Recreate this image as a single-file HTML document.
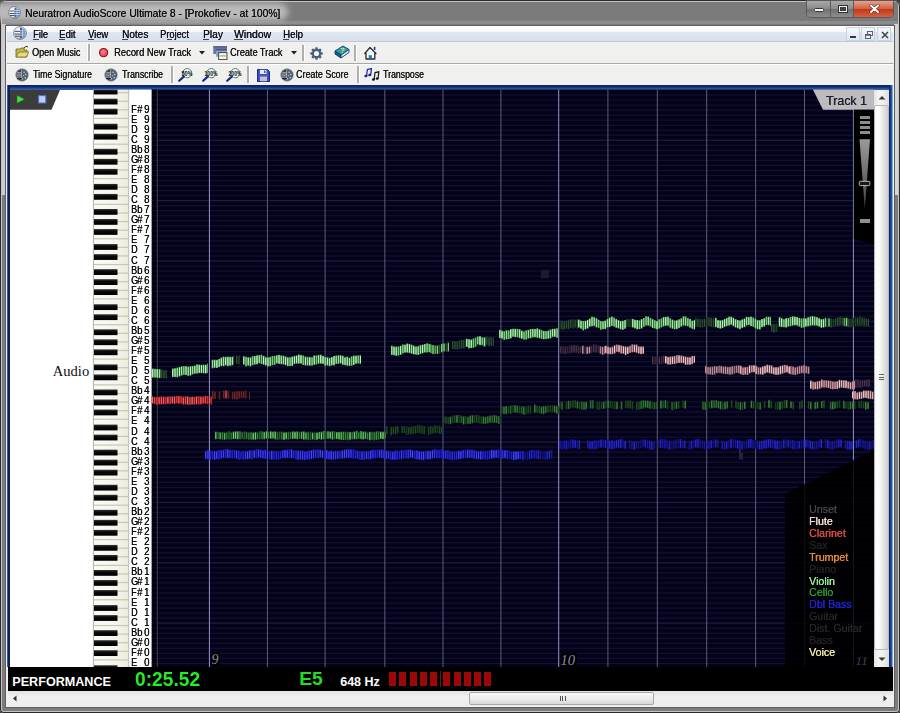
<!DOCTYPE html><html><head><meta charset="utf-8"><style>html,body{margin:0;padding:0;width:900px;height:713px;overflow:hidden;background:#3a3a3a}#w{position:absolute;left:0;top:0;width:900px;height:713px;overflow:hidden}</style></head><body><div id="w">
<div style="position:absolute;left:0px;top:0px;width:900px;height:713px;background:#807a80;border-radius:6px 6px 4px 4px;box-shadow:inset 0 0 0 1px #2a2a2a, inset 0 0 0 2px #c4c4c4;"></div>
<div style="position:absolute;left:2px;top:24px;width:4px;height:171px;background:#cfcacf;"></div>
<div style="position:absolute;left:894px;top:24px;width:4px;height:171px;background:#d4d4d4;"></div>
<div style="position:absolute;left:2px;top:2px;width:896px;height:22px;background:#7b7b7b;"></div>
<div style="position:absolute;left:2px;top:21px;width:896px;height:3px;background:#8c8c8c;"></div>
<div style="position:absolute;left:-8px;top:3px;width:296px;height:18px;background:#bababa;border-radius:9px;filter:blur(3px);"></div>
<svg style="position:absolute;left:8px;top:6px" width="13" height="13" viewBox="0 0 26 26">
<defs><radialGradient id="g86" cx="0.4" cy="0.35" r="0.7"><stop offset="0" stop-color="#ffffff"/><stop offset="0.7" stop-color="#d8dce4"/><stop offset="1" stop-color="#80848c"/></radialGradient></defs>
<circle cx="13" cy="13" r="12" fill="url(#g86)" stroke="#606670" stroke-width="1.2"/>
<path d="M13 3 A10 10 0 0 1 13 23 Z" fill="#3f6db0"/>
<g stroke="#202428" stroke-width="1.5"><line x1="3" y1="10" x2="13" y2="10"/><line x1="3" y1="15" x2="13" y2="15"/><line x1="4" y1="19" x2="13" y2="19"/></g>
<g stroke="#e8f0ff" stroke-width="1.3"><line x1="13" y1="9" x2="23" y2="9"/><line x1="13" y1="13" x2="24" y2="13"/><line x1="13" y1="17" x2="23" y2="17"/><line x1="18" y1="4" x2="18" y2="22"/></g>
</svg>
<div style="position:absolute;left:25px;top:7.08px;font:normal 400 11.6px 'Liberation Sans', sans-serif;line-height:1;color:#101010;white-space:pre;transform:scaleX(0.888);transform-origin:0 0;text-shadow:0.3px 0 0 #101010;">Neuratron AudioScore Ultimate 8 - [Prokofiev - at 100%]</div>
<div style="position:absolute;left:807px;top:1px;width:86px;height:16px;border-radius:0 0 4px 4px;overflow:hidden;box-shadow:0 0 0 1px #5a5a5a;">
<div style="position:absolute;left:0;top:0;width:23px;height:16px;background:linear-gradient(#a8a8a8,#8a8a8a 50%,#707070 51%,#8c8c8c);border-right:1px solid #5a5a5a"></div>
<div style="position:absolute;left:24px;top:0;width:22px;height:16px;background:linear-gradient(#a8a8a8,#8a8a8a 50%,#707070 51%,#8c8c8c);border-right:1px solid #5a5a5a"></div>
<div style="position:absolute;left:47px;top:0;width:39px;height:16px;background:linear-gradient(#e8a090,#d06040 50%,#c03818 51%,#d86040);"></div>
</div>
<div style="position:absolute;left:814.4px;top:8.3px;width:10px;height:4.2px;background:#f8f8f8;border:1px solid #383838;border-radius:1.5px;box-sizing:border-box;"></div>
<div style="position:absolute;left:838px;top:5px;width:8px;height:6px;border:1px solid #303030;background:#f0f0f0;box-shadow:inset 0 0 0 1px #f0f0f0, inset 0 0 0 3px #404040;"></div>
<svg style="position:absolute;left:868.5px;top:3.8px" width="11" height="9.5" viewBox="0 0 11 9.5"><path d="M2 1.5 L9 8 M9 1.5 L2 8" stroke="#6a3028" stroke-width="3.2" stroke-linecap="round"/><path d="M2 1.5 L9 8 M9 1.5 L2 8" stroke="#ffffff" stroke-width="1.9" stroke-linecap="round"/></svg>
<div style="position:absolute;left:6px;top:25.6px;width:888px;height:681.4px;background:#f0f0f0;box-shadow:0 0 0 1px #5a6060;"></div>
<div style="position:absolute;left:7px;top:25.8px;width:886px;height:15.2px;background:linear-gradient(#ffffff 0%,#f6f7fb 38%,#dfe5f0 44%,#d9e0ee 100%);"></div>
<div style="position:absolute;left:7px;top:41px;width:886px;height:1px;background:#c4c8d0;"></div>
<svg style="position:absolute;left:13px;top:26px" width="14" height="14" viewBox="0 0 26 26">
<defs><radialGradient id="g1326" cx="0.4" cy="0.35" r="0.7"><stop offset="0" stop-color="#ffffff"/><stop offset="0.7" stop-color="#d8dce4"/><stop offset="1" stop-color="#80848c"/></radialGradient></defs>
<circle cx="13" cy="13" r="12" fill="url(#g1326)" stroke="#606670" stroke-width="1.2"/>
<path d="M13 3 A10 10 0 0 1 13 23 Z" fill="#3f6db0"/>
<g stroke="#202428" stroke-width="1.5"><line x1="3" y1="10" x2="13" y2="10"/><line x1="3" y1="15" x2="13" y2="15"/><line x1="4" y1="19" x2="13" y2="19"/></g>
<g stroke="#e8f0ff" stroke-width="1.3"><line x1="13" y1="9" x2="23" y2="9"/><line x1="13" y1="13" x2="24" y2="13"/><line x1="13" y1="17" x2="23" y2="17"/><line x1="18" y1="4" x2="18" y2="22"/></g>
</svg>
<div style="position:absolute;left:32.7px;top:29.09px;font:normal 400 11px 'Liberation Sans', sans-serif;line-height:1;color:#10101c;white-space:pre;transform:scaleX(0.846);transform-origin:0 0;text-shadow:0.3px 0 0 #10101c;">File</div>
<div style="position:absolute;left:59.3px;top:29.09px;font:normal 400 11px 'Liberation Sans', sans-serif;line-height:1;color:#10101c;white-space:pre;transform:scaleX(0.869);transform-origin:0 0;text-shadow:0.3px 0 0 #10101c;">Edit</div>
<div style="position:absolute;left:88.4px;top:29.09px;font:normal 400 11px 'Liberation Sans', sans-serif;line-height:1;color:#10101c;white-space:pre;transform:scaleX(0.85);transform-origin:0 0;text-shadow:0.3px 0 0 #10101c;">View</div>
<div style="position:absolute;left:121.8px;top:29.09px;font:normal 400 11px 'Liberation Sans', sans-serif;line-height:1;color:#10101c;white-space:pre;transform:scaleX(0.911);transform-origin:0 0;text-shadow:0.3px 0 0 #10101c;">Notes</div>
<div style="position:absolute;left:160.3px;top:29.09px;font:normal 400 11px 'Liberation Sans', sans-serif;line-height:1;color:#10101c;white-space:pre;transform:scaleX(0.842);transform-origin:0 0;text-shadow:0.3px 0 0 #10101c;">Project</div>
<div style="position:absolute;left:203.3px;top:29.09px;font:normal 400 11px 'Liberation Sans', sans-serif;line-height:1;color:#10101c;white-space:pre;transform:scaleX(0.927);transform-origin:0 0;text-shadow:0.3px 0 0 #10101c;">Play</div>
<div style="position:absolute;left:234px;top:29.09px;font:normal 400 11px 'Liberation Sans', sans-serif;line-height:1;color:#10101c;white-space:pre;transform:scaleX(0.943);transform-origin:0 0;text-shadow:0.3px 0 0 #10101c;">Window</div>
<div style="position:absolute;left:283.3px;top:29.09px;font:normal 400 11px 'Liberation Sans', sans-serif;line-height:1;color:#10101c;white-space:pre;transform:scaleX(0.882);transform-origin:0 0;text-shadow:0.3px 0 0 #10101c;">Help</div>
<div style="position:absolute;left:32.7px;top:39px;width:6px;height:1px;background:#404050;"></div>
<div style="position:absolute;left:59.3px;top:39px;width:6px;height:1px;background:#404050;"></div>
<div style="position:absolute;left:88.4px;top:39px;width:6px;height:1px;background:#404050;"></div>
<div style="position:absolute;left:121.8px;top:39px;width:6px;height:1px;background:#404050;"></div>
<div style="position:absolute;left:166.8px;top:39px;width:5px;height:1px;background:#404050;"></div>
<div style="position:absolute;left:203.3px;top:39px;width:6px;height:1px;background:#404050;"></div>
<div style="position:absolute;left:234px;top:39px;width:9px;height:1px;background:#404050;"></div>
<div style="position:absolute;left:283.3px;top:39px;width:6px;height:1px;background:#404050;"></div>
<div style="position:absolute;left:845.6px;top:27px;width:14px;height:14px;background:linear-gradient(#f4f8fc,#dde8f4);border:1px solid #c8d4e0;box-sizing:border-box;"></div>
<div style="position:absolute;left:861px;top:27px;width:14px;height:14px;background:linear-gradient(#f4f8fc,#dde8f4);border:1px solid #c8d4e0;box-sizing:border-box;"></div>
<div style="position:absolute;left:877px;top:27px;width:14px;height:14px;background:linear-gradient(#f4f8fc,#dde8f4);border:1px solid #c8d4e0;box-sizing:border-box;"></div>
<div style="position:absolute;left:849.5px;top:36px;width:6px;height:2px;background:#303844;"></div>
<svg style="position:absolute;left:864.5px;top:30.5px" width="8" height="8" viewBox="0 0 8 8"><rect x="2.5" y="0.5" width="5" height="4" fill="none" stroke="#4a5460" stroke-width="0.9"/><rect x="0.5" y="3.5" width="5" height="4" fill="#e8f0f8" stroke="#4a5460" stroke-width="0.9"/><rect x="0.5" y="3.5" width="5" height="1.2" fill="#4a5460"/></svg>
<svg style="position:absolute;left:880.5px;top:30.5px" width="8" height="8" viewBox="0 0 8 8"><path d="M1 1L7 7M7 1L1 7" stroke="#3a4450" stroke-width="1.5"/></svg>
<div style="position:absolute;left:7px;top:42px;width:886px;height:21px;background:#f0f0ef;"></div>
<div style="position:absolute;left:7px;top:63px;width:886px;height:1px;background:#a8a8a8;"></div>
<div style="position:absolute;left:7px;top:64px;width:886px;height:1px;background:#ffffff;"></div>
<div style="position:absolute;left:7px;top:65px;width:886px;height:20px;background:#f0f0ef;"></div>
<svg style="position:absolute;left:15px;top:45px" width="14" height="13" viewBox="0 0 14 13"><path d="M1 4 L5 4 L6 3 L9 3 L9 5 L12 5 L12 12 L1 12 Z" fill="#c8b850" stroke="#6a6020" stroke-width="0.8"/><path d="M1 12 L4 7 L14 7 L11 12 Z" fill="#e8dc80" stroke="#7a7020" stroke-width="0.8"/><path d="M9 3 Q11 0 13 2" fill="none" stroke="#303030" stroke-width="1"/></svg>
<div style="position:absolute;left:32px;top:47.09px;font:normal 400 11px 'Liberation Sans', sans-serif;line-height:1;color:#141414;white-space:pre;transform:scaleX(0.823);transform-origin:0 0;text-shadow:0.3px 0 0 #141414;">Open Music</div>
<div style="position:absolute;left:87.3px;top:44px;width:1px;height:17px;background:#ffffff;"></div>
<div style="position:absolute;left:88.1px;top:44px;width:1.5px;height:17px;background:#b0b0b0;"></div>
<div style="position:absolute;left:89.6px;top:44px;width:1px;height:17px;background:#ffffff;"></div>
<svg style="position:absolute;left:98px;top:47px" width="11" height="11" viewBox="0 0 11 11"><defs><radialGradient id="rc" cx="0.45" cy="0.45" r="0.6"><stop offset="0" stop-color="#ff8890"/><stop offset="1" stop-color="#e03848"/></radialGradient></defs><circle cx="5.6" cy="5.6" r="4.1" fill="url(#rc)" stroke="#8a1820" stroke-width="1.1"/></svg>
<div style="position:absolute;left:114px;top:47.09px;font:normal 400 11px 'Liberation Sans', sans-serif;line-height:1;color:#141414;white-space:pre;transform:scaleX(0.851);transform-origin:0 0;text-shadow:0.3px 0 0 #141414;">Record New Track</div>
<svg style="position:absolute;left:198.6px;top:51.0px" width="6" height="4" viewBox="0 0 6 4"><path d="M0 0 L6 0 L3 3.5 Z" fill="#202020"/></svg>
<svg style="position:absolute;left:213px;top:46px" width="15" height="14" viewBox="0 0 15 14"><rect x="0.3" y="0.2" width="13.7" height="7.8" fill="#6a749c"/><rect x="0.3" y="0.2" width="13.7" height="1.2" fill="#505a80"/><rect x="3" y="3.2" width="11" height="7.5" fill="#8aa2d6"/><rect x="3" y="3.2" width="11" height="1.3" fill="#404860"/><rect x="5.6" y="6.6" width="8.4" height="7" fill="#f6f6e6" stroke="#4a4a3a" stroke-width="1"/><rect x="6.5" y="9.4" width="7" height="1" fill="#909090"/></svg>
<div style="position:absolute;left:230px;top:47.09px;font:normal 400 11px 'Liberation Sans', sans-serif;line-height:1;color:#141414;white-space:pre;transform:scaleX(0.832);transform-origin:0 0;text-shadow:0.3px 0 0 #141414;">Create Track</div>
<svg style="position:absolute;left:290.6px;top:51.0px" width="6" height="4" viewBox="0 0 6 4"><path d="M0 0 L6 0 L3 3.5 Z" fill="#202020"/></svg>
<div style="position:absolute;left:301.5px;top:45px;width:1px;height:16px;background:#ffffff;"></div>
<div style="position:absolute;left:302.3px;top:45px;width:1.5px;height:16px;background:#b0b0b0;"></div>
<div style="position:absolute;left:303.8px;top:45px;width:1px;height:16px;background:#ffffff;"></div>
<svg style="position:absolute;left:310px;top:46.5px" width="13" height="13" viewBox="0 0 26 26"><g fill="#44597a"><rect x="10.5" y="0.5" width="5" height="6" rx="1.5" transform="rotate(0 13 13)"/><rect x="10.5" y="0.5" width="5" height="6" rx="1.5" transform="rotate(45 13 13)"/><rect x="10.5" y="0.5" width="5" height="6" rx="1.5" transform="rotate(90 13 13)"/><rect x="10.5" y="0.5" width="5" height="6" rx="1.5" transform="rotate(135 13 13)"/><rect x="10.5" y="0.5" width="5" height="6" rx="1.5" transform="rotate(180 13 13)"/><rect x="10.5" y="0.5" width="5" height="6" rx="1.5" transform="rotate(225 13 13)"/><rect x="10.5" y="0.5" width="5" height="6" rx="1.5" transform="rotate(270 13 13)"/><rect x="10.5" y="0.5" width="5" height="6" rx="1.5" transform="rotate(315 13 13)"/><circle cx="13" cy="13" r="9.5"/></g><circle cx="13" cy="13" r="5.2" fill="#f4f6f8"/><circle cx="13" cy="13" r="9.5" fill="none" stroke="#7890b0" stroke-width="1" opacity="0.6"/></svg>
<svg style="position:absolute;left:333.5px;top:45px" width="16" height="14" viewBox="0 0 16 14"><path d="M1 6 L9 1 L15 4.5 L7 10 Z" fill="#2aa0b8" stroke="#0c3c60" stroke-width="0.9"/><path d="M1 6 L7 10 L7 13 L1 9 Z" fill="#145a88" stroke="#0c3c60" stroke-width="0.9"/><path d="M7 10 L15 4.5 L15 7.5 L7 13 Z" fill="#dce8f4" stroke="#0c3c60" stroke-width="0.9"/><path d="M7 4.2 Q8.5 2.6 10 3.8 Q10.5 4.8 8.8 5.6 L8.6 6.4" fill="none" stroke="#e8e040" stroke-width="1.1"/><circle cx="8.4" cy="7.6" r="0.6" fill="#e8e040"/></svg>
<div style="position:absolute;left:353.5px;top:45px;width:1px;height:16px;background:#ffffff;"></div>
<div style="position:absolute;left:354.3px;top:45px;width:1.5px;height:16px;background:#b0b0b0;"></div>
<div style="position:absolute;left:355.8px;top:45px;width:1px;height:16px;background:#ffffff;"></div>
<svg style="position:absolute;left:363.5px;top:45.5px" width="13" height="14" viewBox="0 0 13 14"><path d="M6 1.5 L12 7.5 L10.8 7.5 L10.8 13 L2 13 L2 7.5 L0.8 7.5 Z" fill="#fafaf4" stroke="#2a2a2a" stroke-width="1.3" stroke-linejoin="round"/><rect x="4.8" y="9" width="3" height="4" fill="#2a6ac0"/><rect x="4.8" y="9" width="3" height="1.2" fill="#30b0c8"/><rect x="9.8" y="0.8" width="1.6" height="3.2" fill="#2030c0"/></svg>
<svg style="position:absolute;left:15px;top:68px" width="14" height="14" viewBox="0 0 26 26">
<circle cx="13" cy="13" r="11.6" fill="#3c4046" stroke="#9aa2aa" stroke-width="1.6"/>
<path d="M14 3 A10 10 0 0 1 14 23 Z" fill="#566272"/>
<g stroke="#e8eef4" stroke-width="1.5"><line x1="4" y1="9" x2="12" y2="9"/><line x1="3" y1="13" x2="12" y2="13"/><line x1="4" y1="17" x2="12" y2="17"/></g>
<g fill="#b8d0e8"><circle cx="17" cy="8" r="1.4"/><circle cx="20" cy="12" r="1.4"/><circle cx="16" cy="14" r="1.2"/><circle cx="19" cy="18" r="1.4"/><circle cx="14" cy="20" r="1.2"/></g>
<line x1="12.5" y1="3" x2="12.5" y2="23" stroke="#d0dae4" stroke-width="1.3"/>
<path d="M4 20 Q9 17 13 20" stroke="#101418" stroke-width="1.6" fill="none"/>
</svg>
<div style="position:absolute;left:33px;top:69.19px;font:normal 400 11px 'Liberation Sans', sans-serif;line-height:1;color:#141414;white-space:pre;transform:scaleX(0.795);transform-origin:0 0;text-shadow:0.3px 0 0 #141414;">Time Signature</div>
<svg style="position:absolute;left:104px;top:68px" width="14" height="14" viewBox="0 0 26 26">
<circle cx="13" cy="13" r="11.6" fill="#3c4046" stroke="#9aa2aa" stroke-width="1.6"/>
<path d="M14 3 A10 10 0 0 1 14 23 Z" fill="#566272"/>
<g stroke="#e8eef4" stroke-width="1.5"><line x1="4" y1="9" x2="12" y2="9"/><line x1="3" y1="13" x2="12" y2="13"/><line x1="4" y1="17" x2="12" y2="17"/></g>
<g fill="#b8d0e8"><circle cx="17" cy="8" r="1.4"/><circle cx="20" cy="12" r="1.4"/><circle cx="16" cy="14" r="1.2"/><circle cx="19" cy="18" r="1.4"/><circle cx="14" cy="20" r="1.2"/></g>
<line x1="12.5" y1="3" x2="12.5" y2="23" stroke="#d0dae4" stroke-width="1.3"/>
<path d="M4 20 Q9 17 13 20" stroke="#101418" stroke-width="1.6" fill="none"/>
</svg>
<div style="position:absolute;left:121.5px;top:69.19px;font:normal 400 11px 'Liberation Sans', sans-serif;line-height:1;color:#141414;white-space:pre;transform:scaleX(0.795);transform-origin:0 0;text-shadow:0.3px 0 0 #141414;">Transcribe</div>
<div style="position:absolute;left:170.5px;top:66px;width:1px;height:17px;background:#ffffff;"></div>
<div style="position:absolute;left:171.3px;top:66px;width:1.5px;height:17px;background:#b0b0b0;"></div>
<div style="position:absolute;left:172.8px;top:66px;width:1px;height:17px;background:#ffffff;"></div>
<svg style="position:absolute;left:178px;top:67px" width="16" height="15" viewBox="0 0 16 15"><circle cx="9.2" cy="6.2" r="4.6" fill="#f6faf6" stroke="#3a7870" stroke-width="0.9"/><path d="M5.8 9.6 L1.2 13.8" stroke="#1a2890" stroke-width="2.2" stroke-linecap="round"/><text x="9" y="8.6" font-family="Liberation Sans" font-size="6.4" font-weight="700" text-anchor="middle" fill="#101010" textLength="11" lengthAdjust="spacingAndGlyphs">50%</text></svg>
<svg style="position:absolute;left:202px;top:67px" width="16" height="15" viewBox="0 0 16 15"><circle cx="9.2" cy="6.2" r="4.6" fill="#f6faf6" stroke="#3a7870" stroke-width="0.9"/><path d="M5.8 9.6 L1.2 13.8" stroke="#1a2890" stroke-width="2.2" stroke-linecap="round"/><text x="9" y="8.6" font-family="Liberation Sans" font-size="6.4" font-weight="700" text-anchor="middle" fill="#101010" textLength="13" lengthAdjust="spacingAndGlyphs">100%</text></svg>
<svg style="position:absolute;left:226px;top:67px" width="16" height="15" viewBox="0 0 16 15"><circle cx="9.2" cy="6.2" r="4.6" fill="#f6faf6" stroke="#3a7870" stroke-width="0.9"/><path d="M5.8 9.6 L1.2 13.8" stroke="#1a2890" stroke-width="2.2" stroke-linecap="round"/><text x="9" y="8.6" font-family="Liberation Sans" font-size="6.4" font-weight="700" text-anchor="middle" fill="#101010" textLength="13" lengthAdjust="spacingAndGlyphs">200%</text></svg>
<div style="position:absolute;left:246.5px;top:66px;width:1px;height:17px;background:#ffffff;"></div>
<div style="position:absolute;left:247.3px;top:66px;width:1.5px;height:17px;background:#b0b0b0;"></div>
<div style="position:absolute;left:248.8px;top:66px;width:1px;height:17px;background:#ffffff;"></div>
<svg style="position:absolute;left:256.5px;top:68.5px" width="13" height="13" viewBox="0 0 13 13"><path d="M0.5 0.5 L10.5 0.5 L12.5 2.5 L12.5 12.5 L0.5 12.5 Z" fill="#3c50c8" stroke="#1c2880"/><rect x="3" y="0.8" width="6.5" height="4.2" fill="#e8f0fa"/><rect x="7" y="1.5" width="1.5" height="2.5" fill="#3c50c8"/><rect x="3" y="7.5" width="7" height="4.8" fill="#c8bcd0"/></svg>
<svg style="position:absolute;left:280px;top:68px" width="14" height="14" viewBox="0 0 26 26">
<circle cx="13" cy="13" r="11.6" fill="#3c4046" stroke="#9aa2aa" stroke-width="1.6"/>
<path d="M14 3 A10 10 0 0 1 14 23 Z" fill="#566272"/>
<g stroke="#e8eef4" stroke-width="1.5"><line x1="4" y1="9" x2="12" y2="9"/><line x1="3" y1="13" x2="12" y2="13"/><line x1="4" y1="17" x2="12" y2="17"/></g>
<g fill="#b8d0e8"><circle cx="17" cy="8" r="1.4"/><circle cx="20" cy="12" r="1.4"/><circle cx="16" cy="14" r="1.2"/><circle cx="19" cy="18" r="1.4"/><circle cx="14" cy="20" r="1.2"/></g>
<line x1="12.5" y1="3" x2="12.5" y2="23" stroke="#d0dae4" stroke-width="1.3"/>
<path d="M4 20 Q9 17 13 20" stroke="#101418" stroke-width="1.6" fill="none"/>
</svg>
<div style="position:absolute;left:296.2px;top:69.19px;font:normal 400 11px 'Liberation Sans', sans-serif;line-height:1;color:#141414;white-space:pre;transform:scaleX(0.81);transform-origin:0 0;text-shadow:0.3px 0 0 #141414;">Create Score</div>
<div style="position:absolute;left:356.5px;top:66px;width:1px;height:17px;background:#ffffff;"></div>
<div style="position:absolute;left:357.3px;top:66px;width:1.5px;height:17px;background:#b0b0b0;"></div>
<div style="position:absolute;left:358.8px;top:66px;width:1px;height:17px;background:#ffffff;"></div>
<svg style="position:absolute;left:364px;top:68px" width="16" height="14" viewBox="0 0 16 14"><path d="M2.6 7.5 L3.4 1.5 L7.4 0.6 L6.8 6.4" fill="none" stroke="#1a1aa0" stroke-width="1.2"/><ellipse cx="2" cy="8" rx="1.7" ry="1.2" fill="#1a1aa0" transform="rotate(-20 2 8)"/><ellipse cx="5.8" cy="7" rx="1.7" ry="1.2" fill="#1a1aa0" transform="rotate(-20 5.8 7)"/><path d="M10.2 11 L11 4.6 L14.8 3.8 L14.2 9.8" fill="none" stroke="#181818" stroke-width="1.2"/><ellipse cx="9.5" cy="11.5" rx="1.7" ry="1.2" fill="#181818" transform="rotate(-20 9.5 11.5)"/><ellipse cx="13.3" cy="10.5" rx="1.7" ry="1.2" fill="#181818" transform="rotate(-20 13.3 10.5)"/></svg>
<div style="position:absolute;left:383.3px;top:69.19px;font:normal 400 11px 'Liberation Sans', sans-serif;line-height:1;color:#141414;white-space:pre;transform:scaleX(0.793);transform-origin:0 0;text-shadow:0.3px 0 0 #141414;">Transpose</div>
<div style="position:absolute;left:7px;top:85px;width:886px;height:4.6px;background:linear-gradient(#0a2468,#0c2a72 35%,#2a5096 70%,#3a64a8);"></div>
<div style="position:absolute;left:7px;top:85px;width:3px;height:582px;background:linear-gradient(90deg,#5a80aa,#0c2060 40%,#0c2060);"></div>
<div style="position:absolute;left:889px;top:85px;width:4px;height:582px;background:linear-gradient(90deg,#0c2060,#1a50a0 60%,#a8d0e8);"></div>
<div style="position:absolute;left:10px;top:89.6px;width:879px;height:577.7px;background:#ffffff;"></div>
<svg style="position:absolute;left:10px;top:89.8px" width="60" height="20" viewBox="0 0 60 20"><path d="M0 0 L50 0 L41.5 19.7 L0 19.7 Z" fill="#3c3c3c"/><path d="M7 5.3 L14.5 9.3 L7 13.3 Z" fill="#44e044" stroke="#188018" stroke-width="0.6"/><rect x="28.6" y="5.6" width="7.2" height="7.4" fill="#b8d0f8" stroke="#5070d0" stroke-width="1.1"/></svg>
<div style="position:absolute;left:52.7px;top:364.47px;font:normal 400 14.6px 'Liberation Serif', serif;line-height:1;color:#101010;white-space:pre;">Audio</div>
<svg style="position:absolute;left:0;top:0" width="900" height="713" viewBox="0 0 900 713"><defs><linearGradient id="wk" x1="0" x2="1"><stop offset="0" stop-color="#fbfbf6"/><stop offset="0.65" stop-color="#f6f5ec"/><stop offset="1" stop-color="#ecebdc"/></linearGradient><linearGradient id="bk" x1="0" x2="0" y1="0" y2="1"><stop offset="0" stop-color="#383838"/><stop offset="0.35" stop-color="#0a0a0a"/><stop offset="1" stop-color="#000"/></linearGradient></defs><rect x="93.4" y="89.6" width="35.099999999999994" height="578" fill="url(#wk)"/><rect x="93.4" y="659.33" width="35.099999999999994" height="1.2" fill="#c8c6b4"/><rect x="93.4" y="650.73" width="35.099999999999994" height="1.2" fill="#c8c6b4"/><rect x="93.4" y="642.14" width="35.099999999999994" height="1.2" fill="#c8c6b4"/><rect x="93.4" y="633.54" width="35.099999999999994" height="1.2" fill="#c8c6b4"/><rect x="93.4" y="624.94" width="35.099999999999994" height="1.2" fill="#c8c6b4"/><rect x="93.4" y="616.35" width="35.099999999999994" height="1.2" fill="#c8c6b4"/><rect x="93.4" y="607.75" width="35.099999999999994" height="1.2" fill="#c8c6b4"/><rect x="93.4" y="599.16" width="35.099999999999994" height="1.2" fill="#c8c6b4"/><rect x="93.4" y="590.56" width="35.099999999999994" height="1.2" fill="#c8c6b4"/><rect x="93.4" y="581.97" width="35.099999999999994" height="1.2" fill="#c8c6b4"/><rect x="93.4" y="573.37" width="35.099999999999994" height="1.2" fill="#c8c6b4"/><rect x="93.4" y="564.78" width="35.099999999999994" height="1.2" fill="#c8c6b4"/><rect x="93.4" y="556.18" width="35.099999999999994" height="1.2" fill="#c8c6b4"/><rect x="93.4" y="547.59" width="35.099999999999994" height="1.2" fill="#c8c6b4"/><rect x="93.4" y="538.99" width="35.099999999999994" height="1.2" fill="#c8c6b4"/><rect x="93.4" y="530.40" width="35.099999999999994" height="1.2" fill="#c8c6b4"/><rect x="93.4" y="521.80" width="35.099999999999994" height="1.2" fill="#c8c6b4"/><rect x="93.4" y="513.20" width="35.099999999999994" height="1.2" fill="#c8c6b4"/><rect x="93.4" y="504.61" width="35.099999999999994" height="1.2" fill="#c8c6b4"/><rect x="93.4" y="496.01" width="35.099999999999994" height="1.2" fill="#c8c6b4"/><rect x="93.4" y="487.42" width="35.099999999999994" height="1.2" fill="#c8c6b4"/><rect x="93.4" y="478.82" width="35.099999999999994" height="1.2" fill="#c8c6b4"/><rect x="93.4" y="470.23" width="35.099999999999994" height="1.2" fill="#c8c6b4"/><rect x="93.4" y="461.63" width="35.099999999999994" height="1.2" fill="#c8c6b4"/><rect x="93.4" y="453.04" width="35.099999999999994" height="1.2" fill="#c8c6b4"/><rect x="93.4" y="444.44" width="35.099999999999994" height="1.2" fill="#c8c6b4"/><rect x="93.4" y="435.85" width="35.099999999999994" height="1.2" fill="#c8c6b4"/><rect x="93.4" y="427.25" width="35.099999999999994" height="1.2" fill="#c8c6b4"/><rect x="93.4" y="418.65" width="35.099999999999994" height="1.2" fill="#c8c6b4"/><rect x="93.4" y="410.06" width="35.099999999999994" height="1.2" fill="#c8c6b4"/><rect x="93.4" y="401.46" width="35.099999999999994" height="1.2" fill="#c8c6b4"/><rect x="93.4" y="392.87" width="35.099999999999994" height="1.2" fill="#c8c6b4"/><rect x="93.4" y="384.27" width="35.099999999999994" height="1.2" fill="#c8c6b4"/><rect x="93.4" y="375.68" width="35.099999999999994" height="1.2" fill="#c8c6b4"/><rect x="93.4" y="367.08" width="35.099999999999994" height="1.2" fill="#c8c6b4"/><rect x="93.4" y="358.49" width="35.099999999999994" height="1.2" fill="#c8c6b4"/><rect x="93.4" y="349.89" width="35.099999999999994" height="1.2" fill="#c8c6b4"/><rect x="93.4" y="341.30" width="35.099999999999994" height="1.2" fill="#c8c6b4"/><rect x="93.4" y="332.70" width="35.099999999999994" height="1.2" fill="#c8c6b4"/><rect x="93.4" y="324.10" width="35.099999999999994" height="1.2" fill="#c8c6b4"/><rect x="93.4" y="315.51" width="35.099999999999994" height="1.2" fill="#c8c6b4"/><rect x="93.4" y="306.91" width="35.099999999999994" height="1.2" fill="#c8c6b4"/><rect x="93.4" y="298.32" width="35.099999999999994" height="1.2" fill="#c8c6b4"/><rect x="93.4" y="289.72" width="35.099999999999994" height="1.2" fill="#c8c6b4"/><rect x="93.4" y="281.13" width="35.099999999999994" height="1.2" fill="#c8c6b4"/><rect x="93.4" y="272.53" width="35.099999999999994" height="1.2" fill="#c8c6b4"/><rect x="93.4" y="263.94" width="35.099999999999994" height="1.2" fill="#c8c6b4"/><rect x="93.4" y="255.34" width="35.099999999999994" height="1.2" fill="#c8c6b4"/><rect x="93.4" y="246.75" width="35.099999999999994" height="1.2" fill="#c8c6b4"/><rect x="93.4" y="238.15" width="35.099999999999994" height="1.2" fill="#c8c6b4"/><rect x="93.4" y="229.56" width="35.099999999999994" height="1.2" fill="#c8c6b4"/><rect x="93.4" y="220.96" width="35.099999999999994" height="1.2" fill="#c8c6b4"/><rect x="93.4" y="212.36" width="35.099999999999994" height="1.2" fill="#c8c6b4"/><rect x="93.4" y="203.77" width="35.099999999999994" height="1.2" fill="#c8c6b4"/><rect x="93.4" y="195.17" width="35.099999999999994" height="1.2" fill="#c8c6b4"/><rect x="93.4" y="186.58" width="35.099999999999994" height="1.2" fill="#c8c6b4"/><rect x="93.4" y="177.98" width="35.099999999999994" height="1.2" fill="#c8c6b4"/><rect x="93.4" y="169.39" width="35.099999999999994" height="1.2" fill="#c8c6b4"/><rect x="93.4" y="160.79" width="35.099999999999994" height="1.2" fill="#c8c6b4"/><rect x="93.4" y="152.20" width="35.099999999999994" height="1.2" fill="#c8c6b4"/><rect x="93.4" y="143.60" width="35.099999999999994" height="1.2" fill="#c8c6b4"/><rect x="93.4" y="135.01" width="35.099999999999994" height="1.2" fill="#c8c6b4"/><rect x="93.4" y="126.41" width="35.099999999999994" height="1.2" fill="#c8c6b4"/><rect x="93.4" y="117.81" width="35.099999999999994" height="1.2" fill="#c8c6b4"/><rect x="93.4" y="109.22" width="35.099999999999994" height="1.2" fill="#c8c6b4"/><rect x="93.4" y="100.62" width="35.099999999999994" height="1.2" fill="#c8c6b4"/><rect x="93.4" y="92.03" width="35.099999999999994" height="1.2" fill="#c8c6b4"/><rect x="93.8" y="665.26" width="23.7" height="5.80" fill="url(#bk)"/><rect x="93.8" y="650.22" width="23.7" height="5.80" fill="url(#bk)"/><rect x="93.8" y="640.19" width="23.7" height="5.80" fill="url(#bk)"/><rect x="93.8" y="630.17" width="23.7" height="5.80" fill="url(#bk)"/><rect x="93.8" y="615.12" width="23.7" height="5.80" fill="url(#bk)"/><rect x="93.8" y="605.10" width="23.7" height="5.80" fill="url(#bk)"/><rect x="93.8" y="590.05" width="23.7" height="5.80" fill="url(#bk)"/><rect x="93.8" y="580.03" width="23.7" height="5.80" fill="url(#bk)"/><rect x="93.8" y="570.00" width="23.7" height="5.80" fill="url(#bk)"/><rect x="93.8" y="554.96" width="23.7" height="5.80" fill="url(#bk)"/><rect x="93.8" y="544.93" width="23.7" height="5.80" fill="url(#bk)"/><rect x="93.8" y="529.89" width="23.7" height="5.80" fill="url(#bk)"/><rect x="93.8" y="519.86" width="23.7" height="5.80" fill="url(#bk)"/><rect x="93.8" y="509.83" width="23.7" height="5.80" fill="url(#bk)"/><rect x="93.8" y="494.79" width="23.7" height="5.80" fill="url(#bk)"/><rect x="93.8" y="484.76" width="23.7" height="5.80" fill="url(#bk)"/><rect x="93.8" y="469.72" width="23.7" height="5.80" fill="url(#bk)"/><rect x="93.8" y="459.69" width="23.7" height="5.80" fill="url(#bk)"/><rect x="93.8" y="449.66" width="23.7" height="5.80" fill="url(#bk)"/><rect x="93.8" y="434.62" width="23.7" height="5.80" fill="url(#bk)"/><rect x="93.8" y="424.59" width="23.7" height="5.80" fill="url(#bk)"/><rect x="93.8" y="409.55" width="23.7" height="5.80" fill="url(#bk)"/><rect x="93.8" y="399.52" width="23.7" height="5.80" fill="url(#bk)"/><rect x="93.8" y="389.49" width="23.7" height="5.80" fill="url(#bk)"/><rect x="93.8" y="374.45" width="23.7" height="5.80" fill="url(#bk)"/><rect x="93.8" y="364.42" width="23.7" height="5.80" fill="url(#bk)"/><rect x="93.8" y="349.38" width="23.7" height="5.80" fill="url(#bk)"/><rect x="93.8" y="339.35" width="23.7" height="5.80" fill="url(#bk)"/><rect x="93.8" y="329.33" width="23.7" height="5.80" fill="url(#bk)"/><rect x="93.8" y="314.28" width="23.7" height="5.80" fill="url(#bk)"/><rect x="93.8" y="304.26" width="23.7" height="5.80" fill="url(#bk)"/><rect x="93.8" y="289.21" width="23.7" height="5.80" fill="url(#bk)"/><rect x="93.8" y="279.19" width="23.7" height="5.80" fill="url(#bk)"/><rect x="93.8" y="269.16" width="23.7" height="5.80" fill="url(#bk)"/><rect x="93.8" y="254.12" width="23.7" height="5.80" fill="url(#bk)"/><rect x="93.8" y="244.09" width="23.7" height="5.80" fill="url(#bk)"/><rect x="93.8" y="229.05" width="23.7" height="5.80" fill="url(#bk)"/><rect x="93.8" y="219.02" width="23.7" height="5.80" fill="url(#bk)"/><rect x="93.8" y="208.99" width="23.7" height="5.80" fill="url(#bk)"/><rect x="93.8" y="193.95" width="23.7" height="5.80" fill="url(#bk)"/><rect x="93.8" y="183.92" width="23.7" height="5.80" fill="url(#bk)"/><rect x="93.8" y="168.88" width="23.7" height="5.80" fill="url(#bk)"/><rect x="93.8" y="158.85" width="23.7" height="5.80" fill="url(#bk)"/><rect x="93.8" y="148.82" width="23.7" height="5.80" fill="url(#bk)"/><rect x="93.8" y="133.78" width="23.7" height="5.80" fill="url(#bk)"/><rect x="93.8" y="123.75" width="23.7" height="5.80" fill="url(#bk)"/><rect x="93.8" y="108.71" width="23.7" height="5.80" fill="url(#bk)"/><rect x="93.8" y="98.68" width="23.7" height="5.80" fill="url(#bk)"/><rect x="93.8" y="89.60" width="23.7" height="4.85" fill="url(#bk)"/><rect x="92.9" y="89.6" width="1" height="578" fill="#b0b0a8"/><rect x="128.2" y="89.6" width="1.2" height="578" fill="#b8b8b0"/><rect x="151.5" y="89.6" width="722.5" height="577.6" fill="#03021a"/><rect x="151.5" y="89.6" width="5.5" height="577.6" fill="#02020e"/><rect x="157.0" y="662.80" width="717.0" height="1.2" fill="#121230"/><rect x="151.5" y="662.80" width="5.5" height="1.2" fill="#0c0c24"/><rect x="157.0" y="657.77" width="717.0" height="1.2" fill="#121230"/><rect x="151.5" y="657.77" width="5.5" height="1.2" fill="#0c0c24"/><rect x="157.0" y="652.74" width="717.0" height="1.2" fill="#121230"/><rect x="151.5" y="652.74" width="5.5" height="1.2" fill="#0c0c24"/><rect x="157.0" y="647.71" width="717.0" height="1.2" fill="#121230"/><rect x="151.5" y="647.71" width="5.5" height="1.2" fill="#0c0c24"/><rect x="157.0" y="642.68" width="717.0" height="1.2" fill="#121230"/><rect x="151.5" y="642.68" width="5.5" height="1.2" fill="#0c0c24"/><rect x="157.0" y="637.65" width="717.0" height="1.2" fill="#121230"/><rect x="151.5" y="637.65" width="5.5" height="1.2" fill="#0c0c24"/><rect x="157.0" y="632.62" width="717.0" height="1.2" fill="#121230"/><rect x="151.5" y="632.62" width="5.5" height="1.2" fill="#0c0c24"/><rect x="157.0" y="627.59" width="717.0" height="1.2" fill="#121230"/><rect x="151.5" y="627.59" width="5.5" height="1.2" fill="#0c0c24"/><rect x="157.0" y="622.56" width="717.0" height="1.2" fill="#1e1e40"/><rect x="151.5" y="622.56" width="5.5" height="1.2" fill="#0c0c24"/><rect x="157.0" y="617.53" width="717.0" height="1.2" fill="#121230"/><rect x="151.5" y="617.53" width="5.5" height="1.2" fill="#0c0c24"/><rect x="157.0" y="612.50" width="717.0" height="1.2" fill="#121230"/><rect x="151.5" y="612.50" width="5.5" height="1.2" fill="#0c0c24"/><rect x="157.0" y="607.47" width="717.0" height="1.2" fill="#121230"/><rect x="151.5" y="607.47" width="5.5" height="1.2" fill="#0c0c24"/><rect x="157.0" y="602.44" width="717.0" height="1.2" fill="#121230"/><rect x="151.5" y="602.44" width="5.5" height="1.2" fill="#0c0c24"/><rect x="157.0" y="597.41" width="717.0" height="1.2" fill="#121230"/><rect x="151.5" y="597.41" width="5.5" height="1.2" fill="#0c0c24"/><rect x="157.0" y="592.38" width="717.0" height="1.2" fill="#121230"/><rect x="151.5" y="592.38" width="5.5" height="1.2" fill="#0c0c24"/><rect x="157.0" y="587.35" width="717.0" height="1.2" fill="#121230"/><rect x="151.5" y="587.35" width="5.5" height="1.2" fill="#0c0c24"/><rect x="157.0" y="582.32" width="717.0" height="1.2" fill="#121230"/><rect x="151.5" y="582.32" width="5.5" height="1.2" fill="#0c0c24"/><rect x="157.0" y="577.29" width="717.0" height="1.2" fill="#121230"/><rect x="151.5" y="577.29" width="5.5" height="1.2" fill="#0c0c24"/><rect x="157.0" y="572.26" width="717.0" height="1.2" fill="#121230"/><rect x="151.5" y="572.26" width="5.5" height="1.2" fill="#0c0c24"/><rect x="157.0" y="567.23" width="717.0" height="1.2" fill="#121230"/><rect x="151.5" y="567.23" width="5.5" height="1.2" fill="#0c0c24"/><rect x="157.0" y="562.20" width="717.0" height="1.2" fill="#1e1e40"/><rect x="151.5" y="562.20" width="5.5" height="1.2" fill="#0c0c24"/><rect x="157.0" y="557.17" width="717.0" height="1.2" fill="#121230"/><rect x="151.5" y="557.17" width="5.5" height="1.2" fill="#0c0c24"/><rect x="157.0" y="552.14" width="717.0" height="1.2" fill="#121230"/><rect x="151.5" y="552.14" width="5.5" height="1.2" fill="#0c0c24"/><rect x="157.0" y="547.11" width="717.0" height="1.2" fill="#121230"/><rect x="151.5" y="547.11" width="5.5" height="1.2" fill="#0c0c24"/><rect x="157.0" y="542.08" width="717.0" height="1.2" fill="#121230"/><rect x="151.5" y="542.08" width="5.5" height="1.2" fill="#0c0c24"/><rect x="157.0" y="537.05" width="717.0" height="1.2" fill="#121230"/><rect x="151.5" y="537.05" width="5.5" height="1.2" fill="#0c0c24"/><rect x="157.0" y="532.02" width="717.0" height="1.2" fill="#121230"/><rect x="151.5" y="532.02" width="5.5" height="1.2" fill="#0c0c24"/><rect x="157.0" y="526.99" width="717.0" height="1.2" fill="#121230"/><rect x="151.5" y="526.99" width="5.5" height="1.2" fill="#0c0c24"/><rect x="157.0" y="521.96" width="717.0" height="1.2" fill="#121230"/><rect x="151.5" y="521.96" width="5.5" height="1.2" fill="#0c0c24"/><rect x="157.0" y="516.93" width="717.0" height="1.2" fill="#121230"/><rect x="151.5" y="516.93" width="5.5" height="1.2" fill="#0c0c24"/><rect x="157.0" y="511.90" width="717.0" height="1.2" fill="#121230"/><rect x="151.5" y="511.90" width="5.5" height="1.2" fill="#0c0c24"/><rect x="157.0" y="506.87" width="717.0" height="1.2" fill="#121230"/><rect x="151.5" y="506.87" width="5.5" height="1.2" fill="#0c0c24"/><rect x="157.0" y="501.84" width="717.0" height="1.2" fill="#1e1e40"/><rect x="151.5" y="501.84" width="5.5" height="1.2" fill="#0c0c24"/><rect x="157.0" y="496.81" width="717.0" height="1.2" fill="#121230"/><rect x="151.5" y="496.81" width="5.5" height="1.2" fill="#0c0c24"/><rect x="157.0" y="491.78" width="717.0" height="1.2" fill="#121230"/><rect x="151.5" y="491.78" width="5.5" height="1.2" fill="#0c0c24"/><rect x="157.0" y="486.75" width="717.0" height="1.2" fill="#121230"/><rect x="151.5" y="486.75" width="5.5" height="1.2" fill="#0c0c24"/><rect x="157.0" y="481.72" width="717.0" height="1.2" fill="#121230"/><rect x="151.5" y="481.72" width="5.5" height="1.2" fill="#0c0c24"/><rect x="157.0" y="476.69" width="717.0" height="1.2" fill="#121230"/><rect x="151.5" y="476.69" width="5.5" height="1.2" fill="#0c0c24"/><rect x="157.0" y="471.66" width="717.0" height="1.2" fill="#121230"/><rect x="151.5" y="471.66" width="5.5" height="1.2" fill="#0c0c24"/><rect x="157.0" y="466.63" width="717.0" height="1.2" fill="#121230"/><rect x="151.5" y="466.63" width="5.5" height="1.2" fill="#0c0c24"/><rect x="157.0" y="461.60" width="717.0" height="1.2" fill="#121230"/><rect x="151.5" y="461.60" width="5.5" height="1.2" fill="#0c0c24"/><rect x="157.0" y="456.57" width="717.0" height="1.2" fill="#121230"/><rect x="151.5" y="456.57" width="5.5" height="1.2" fill="#0c0c24"/><rect x="157.0" y="451.54" width="717.0" height="1.2" fill="#121230"/><rect x="151.5" y="451.54" width="5.5" height="1.2" fill="#0c0c24"/><rect x="157.0" y="446.51" width="717.0" height="1.2" fill="#121230"/><rect x="151.5" y="446.51" width="5.5" height="1.2" fill="#0c0c24"/><rect x="157.0" y="441.48" width="717.0" height="1.2" fill="#1e1e40"/><rect x="151.5" y="441.48" width="5.5" height="1.2" fill="#0c0c24"/><rect x="157.0" y="436.45" width="717.0" height="1.2" fill="#121230"/><rect x="151.5" y="436.45" width="5.5" height="1.2" fill="#0c0c24"/><rect x="157.0" y="431.42" width="717.0" height="1.2" fill="#121230"/><rect x="151.5" y="431.42" width="5.5" height="1.2" fill="#0c0c24"/><rect x="157.0" y="426.39" width="717.0" height="1.2" fill="#121230"/><rect x="151.5" y="426.39" width="5.5" height="1.2" fill="#0c0c24"/><rect x="157.0" y="421.36" width="717.0" height="1.2" fill="#121230"/><rect x="151.5" y="421.36" width="5.5" height="1.2" fill="#0c0c24"/><rect x="157.0" y="416.33" width="717.0" height="1.2" fill="#121230"/><rect x="151.5" y="416.33" width="5.5" height="1.2" fill="#0c0c24"/><rect x="157.0" y="411.30" width="717.0" height="1.2" fill="#121230"/><rect x="151.5" y="411.30" width="5.5" height="1.2" fill="#0c0c24"/><rect x="157.0" y="406.27" width="717.0" height="1.2" fill="#121230"/><rect x="151.5" y="406.27" width="5.5" height="1.2" fill="#0c0c24"/><rect x="157.0" y="401.24" width="717.0" height="1.2" fill="#121230"/><rect x="151.5" y="401.24" width="5.5" height="1.2" fill="#0c0c24"/><rect x="157.0" y="396.21" width="717.0" height="1.2" fill="#121230"/><rect x="151.5" y="396.21" width="5.5" height="1.2" fill="#0c0c24"/><rect x="157.0" y="391.18" width="717.0" height="1.2" fill="#121230"/><rect x="151.5" y="391.18" width="5.5" height="1.2" fill="#0c0c24"/><rect x="157.0" y="386.15" width="717.0" height="1.2" fill="#121230"/><rect x="151.5" y="386.15" width="5.5" height="1.2" fill="#0c0c24"/><rect x="157.0" y="381.12" width="717.0" height="1.2" fill="#1e1e40"/><rect x="151.5" y="381.12" width="5.5" height="1.2" fill="#0c0c24"/><rect x="157.0" y="376.09" width="717.0" height="1.2" fill="#121230"/><rect x="151.5" y="376.09" width="5.5" height="1.2" fill="#0c0c24"/><rect x="157.0" y="371.06" width="717.0" height="1.2" fill="#121230"/><rect x="151.5" y="371.06" width="5.5" height="1.2" fill="#0c0c24"/><rect x="157.0" y="366.03" width="717.0" height="1.2" fill="#121230"/><rect x="151.5" y="366.03" width="5.5" height="1.2" fill="#0c0c24"/><rect x="157.0" y="361.00" width="717.0" height="1.2" fill="#121230"/><rect x="151.5" y="361.00" width="5.5" height="1.2" fill="#0c0c24"/><rect x="157.0" y="355.97" width="717.0" height="1.2" fill="#121230"/><rect x="151.5" y="355.97" width="5.5" height="1.2" fill="#0c0c24"/><rect x="157.0" y="350.94" width="717.0" height="1.2" fill="#121230"/><rect x="151.5" y="350.94" width="5.5" height="1.2" fill="#0c0c24"/><rect x="157.0" y="345.91" width="717.0" height="1.2" fill="#121230"/><rect x="151.5" y="345.91" width="5.5" height="1.2" fill="#0c0c24"/><rect x="157.0" y="340.88" width="717.0" height="1.2" fill="#121230"/><rect x="151.5" y="340.88" width="5.5" height="1.2" fill="#0c0c24"/><rect x="157.0" y="335.85" width="717.0" height="1.2" fill="#121230"/><rect x="151.5" y="335.85" width="5.5" height="1.2" fill="#0c0c24"/><rect x="157.0" y="330.82" width="717.0" height="1.2" fill="#121230"/><rect x="151.5" y="330.82" width="5.5" height="1.2" fill="#0c0c24"/><rect x="157.0" y="325.79" width="717.0" height="1.2" fill="#121230"/><rect x="151.5" y="325.79" width="5.5" height="1.2" fill="#0c0c24"/><rect x="157.0" y="320.76" width="717.0" height="1.2" fill="#1e1e40"/><rect x="151.5" y="320.76" width="5.5" height="1.2" fill="#0c0c24"/><rect x="157.0" y="315.73" width="717.0" height="1.2" fill="#121230"/><rect x="151.5" y="315.73" width="5.5" height="1.2" fill="#0c0c24"/><rect x="157.0" y="310.70" width="717.0" height="1.2" fill="#121230"/><rect x="151.5" y="310.70" width="5.5" height="1.2" fill="#0c0c24"/><rect x="157.0" y="305.67" width="717.0" height="1.2" fill="#121230"/><rect x="151.5" y="305.67" width="5.5" height="1.2" fill="#0c0c24"/><rect x="157.0" y="300.64" width="717.0" height="1.2" fill="#121230"/><rect x="151.5" y="300.64" width="5.5" height="1.2" fill="#0c0c24"/><rect x="157.0" y="295.61" width="717.0" height="1.2" fill="#121230"/><rect x="151.5" y="295.61" width="5.5" height="1.2" fill="#0c0c24"/><rect x="157.0" y="290.58" width="717.0" height="1.2" fill="#121230"/><rect x="151.5" y="290.58" width="5.5" height="1.2" fill="#0c0c24"/><rect x="157.0" y="285.55" width="717.0" height="1.2" fill="#121230"/><rect x="151.5" y="285.55" width="5.5" height="1.2" fill="#0c0c24"/><rect x="157.0" y="280.52" width="717.0" height="1.2" fill="#121230"/><rect x="151.5" y="280.52" width="5.5" height="1.2" fill="#0c0c24"/><rect x="157.0" y="275.49" width="717.0" height="1.2" fill="#121230"/><rect x="151.5" y="275.49" width="5.5" height="1.2" fill="#0c0c24"/><rect x="157.0" y="270.46" width="717.0" height="1.2" fill="#121230"/><rect x="151.5" y="270.46" width="5.5" height="1.2" fill="#0c0c24"/><rect x="157.0" y="265.43" width="717.0" height="1.2" fill="#121230"/><rect x="151.5" y="265.43" width="5.5" height="1.2" fill="#0c0c24"/><rect x="157.0" y="260.40" width="717.0" height="1.2" fill="#1e1e40"/><rect x="151.5" y="260.40" width="5.5" height="1.2" fill="#0c0c24"/><rect x="157.0" y="255.37" width="717.0" height="1.2" fill="#121230"/><rect x="151.5" y="255.37" width="5.5" height="1.2" fill="#0c0c24"/><rect x="157.0" y="250.34" width="717.0" height="1.2" fill="#121230"/><rect x="151.5" y="250.34" width="5.5" height="1.2" fill="#0c0c24"/><rect x="157.0" y="245.31" width="717.0" height="1.2" fill="#121230"/><rect x="151.5" y="245.31" width="5.5" height="1.2" fill="#0c0c24"/><rect x="157.0" y="240.28" width="717.0" height="1.2" fill="#121230"/><rect x="151.5" y="240.28" width="5.5" height="1.2" fill="#0c0c24"/><rect x="157.0" y="235.25" width="717.0" height="1.2" fill="#121230"/><rect x="151.5" y="235.25" width="5.5" height="1.2" fill="#0c0c24"/><rect x="157.0" y="230.22" width="717.0" height="1.2" fill="#121230"/><rect x="151.5" y="230.22" width="5.5" height="1.2" fill="#0c0c24"/><rect x="157.0" y="225.19" width="717.0" height="1.2" fill="#121230"/><rect x="151.5" y="225.19" width="5.5" height="1.2" fill="#0c0c24"/><rect x="157.0" y="220.16" width="717.0" height="1.2" fill="#121230"/><rect x="151.5" y="220.16" width="5.5" height="1.2" fill="#0c0c24"/><rect x="157.0" y="215.13" width="717.0" height="1.2" fill="#121230"/><rect x="151.5" y="215.13" width="5.5" height="1.2" fill="#0c0c24"/><rect x="157.0" y="210.10" width="717.0" height="1.2" fill="#121230"/><rect x="151.5" y="210.10" width="5.5" height="1.2" fill="#0c0c24"/><rect x="157.0" y="205.07" width="717.0" height="1.2" fill="#121230"/><rect x="151.5" y="205.07" width="5.5" height="1.2" fill="#0c0c24"/><rect x="157.0" y="200.04" width="717.0" height="1.2" fill="#1e1e40"/><rect x="151.5" y="200.04" width="5.5" height="1.2" fill="#0c0c24"/><rect x="157.0" y="195.01" width="717.0" height="1.2" fill="#121230"/><rect x="151.5" y="195.01" width="5.5" height="1.2" fill="#0c0c24"/><rect x="157.0" y="189.98" width="717.0" height="1.2" fill="#121230"/><rect x="151.5" y="189.98" width="5.5" height="1.2" fill="#0c0c24"/><rect x="157.0" y="184.95" width="717.0" height="1.2" fill="#121230"/><rect x="151.5" y="184.95" width="5.5" height="1.2" fill="#0c0c24"/><rect x="157.0" y="179.92" width="717.0" height="1.2" fill="#121230"/><rect x="151.5" y="179.92" width="5.5" height="1.2" fill="#0c0c24"/><rect x="157.0" y="174.89" width="717.0" height="1.2" fill="#121230"/><rect x="151.5" y="174.89" width="5.5" height="1.2" fill="#0c0c24"/><rect x="157.0" y="169.86" width="717.0" height="1.2" fill="#121230"/><rect x="151.5" y="169.86" width="5.5" height="1.2" fill="#0c0c24"/><rect x="157.0" y="164.83" width="717.0" height="1.2" fill="#121230"/><rect x="151.5" y="164.83" width="5.5" height="1.2" fill="#0c0c24"/><rect x="157.0" y="159.80" width="717.0" height="1.2" fill="#121230"/><rect x="151.5" y="159.80" width="5.5" height="1.2" fill="#0c0c24"/><rect x="157.0" y="154.77" width="717.0" height="1.2" fill="#121230"/><rect x="151.5" y="154.77" width="5.5" height="1.2" fill="#0c0c24"/><rect x="157.0" y="149.74" width="717.0" height="1.2" fill="#121230"/><rect x="151.5" y="149.74" width="5.5" height="1.2" fill="#0c0c24"/><rect x="157.0" y="144.71" width="717.0" height="1.2" fill="#121230"/><rect x="151.5" y="144.71" width="5.5" height="1.2" fill="#0c0c24"/><rect x="157.0" y="139.68" width="717.0" height="1.2" fill="#1e1e40"/><rect x="151.5" y="139.68" width="5.5" height="1.2" fill="#0c0c24"/><rect x="157.0" y="134.65" width="717.0" height="1.2" fill="#121230"/><rect x="151.5" y="134.65" width="5.5" height="1.2" fill="#0c0c24"/><rect x="157.0" y="129.62" width="717.0" height="1.2" fill="#121230"/><rect x="151.5" y="129.62" width="5.5" height="1.2" fill="#0c0c24"/><rect x="157.0" y="124.59" width="717.0" height="1.2" fill="#121230"/><rect x="151.5" y="124.59" width="5.5" height="1.2" fill="#0c0c24"/><rect x="157.0" y="119.56" width="717.0" height="1.2" fill="#121230"/><rect x="151.5" y="119.56" width="5.5" height="1.2" fill="#0c0c24"/><rect x="157.0" y="114.53" width="717.0" height="1.2" fill="#121230"/><rect x="151.5" y="114.53" width="5.5" height="1.2" fill="#0c0c24"/><rect x="157.0" y="109.50" width="717.0" height="1.2" fill="#121230"/><rect x="151.5" y="109.50" width="5.5" height="1.2" fill="#0c0c24"/><rect x="157.0" y="104.47" width="717.0" height="1.2" fill="#121230"/><rect x="151.5" y="104.47" width="5.5" height="1.2" fill="#0c0c24"/><rect x="157.0" y="99.44" width="717.0" height="1.2" fill="#121230"/><rect x="151.5" y="99.44" width="5.5" height="1.2" fill="#0c0c24"/><rect x="157.0" y="94.41" width="717.0" height="1.2" fill="#121230"/><rect x="151.5" y="94.41" width="5.5" height="1.2" fill="#0c0c24"/><rect x="156.80" y="89.6" width="1.0" height="577.6" fill="#3c3c50"/><rect x="208.90" y="89.6" width="1.0" height="577.6" fill="#9494c4"/><rect x="266.90" y="89.6" width="1.0" height="577.6" fill="#5c5c7c"/><rect x="324.60" y="89.6" width="1.0" height="577.6" fill="#5c5c7c"/><rect x="384.30" y="89.6" width="1.0" height="577.6" fill="#5c5c7c"/><rect x="442.50" y="89.6" width="1.0" height="577.6" fill="#5c5c7c"/><rect x="500.40" y="89.6" width="1.0" height="577.6" fill="#5c5c7c"/><rect x="558.20" y="89.6" width="1.0" height="577.6" fill="#9494c4"/><rect x="607.40" y="89.6" width="1.0" height="577.6" fill="#5c5c7c"/><rect x="656.80" y="89.6" width="1.0" height="577.6" fill="#5c5c7c"/><rect x="706.20" y="89.6" width="1.0" height="577.6" fill="#5c5c7c"/><rect x="755.10" y="89.6" width="1.0" height="577.6" fill="#5c5c7c"/><rect x="804.00" y="89.6" width="1.0" height="577.6" fill="#5c5c7c"/><rect x="852.90" y="89.6" width="1.0" height="577.6" fill="#9494c4"/><rect x="129.4" y="89.6" width="22.1" height="578" fill="#ffffff"/></svg>
<div style="position:absolute;left:131.4px;top:656.93px;font:normal 400 10.6px 'Liberation Sans', sans-serif;line-height:1;color:#0c0c0c;white-space:pre;transform:scaleX(0.86);transform-origin:0 0;text-shadow:0.25px 0 0 #0c0c0c;">E</div>
<div style="position:absolute;left:144.0px;top:656.93px;font:normal 400 10.6px 'Liberation Sans', sans-serif;line-height:1;color:#0c0c0c;white-space:pre;transform:scaleX(0.92);transform-origin:0 0;text-shadow:0.25px 0 0 #0c0c0c;">0</div>
<div style="position:absolute;left:131.4px;top:646.87px;font:normal 400 10.6px 'Liberation Sans', sans-serif;line-height:1;color:#0c0c0c;white-space:pre;transform:scaleX(0.86);transform-origin:0 0;text-shadow:0.25px 0 0 #0c0c0c;">F</div>
<div style="position:absolute;left:137.3px;top:646.87px;font:normal 400 10.6px 'Liberation Sans', sans-serif;line-height:1;color:#0c0c0c;white-space:pre;transform:scaleX(0.92);transform-origin:0 0;text-shadow:0.25px 0 0 #0c0c0c;">#</div>
<div style="position:absolute;left:144.0px;top:646.87px;font:normal 400 10.6px 'Liberation Sans', sans-serif;line-height:1;color:#0c0c0c;white-space:pre;transform:scaleX(0.92);transform-origin:0 0;text-shadow:0.25px 0 0 #0c0c0c;">0</div>
<div style="position:absolute;left:131.4px;top:636.81px;font:normal 400 10.6px 'Liberation Sans', sans-serif;line-height:1;color:#0c0c0c;white-space:pre;transform:scaleX(0.86);transform-origin:0 0;text-shadow:0.25px 0 0 #0c0c0c;">G</div>
<div style="position:absolute;left:137.3px;top:636.81px;font:normal 400 10.6px 'Liberation Sans', sans-serif;line-height:1;color:#0c0c0c;white-space:pre;transform:scaleX(0.92);transform-origin:0 0;text-shadow:0.25px 0 0 #0c0c0c;">#</div>
<div style="position:absolute;left:144.0px;top:636.81px;font:normal 400 10.6px 'Liberation Sans', sans-serif;line-height:1;color:#0c0c0c;white-space:pre;transform:scaleX(0.92);transform-origin:0 0;text-shadow:0.25px 0 0 #0c0c0c;">0</div>
<div style="position:absolute;left:131.4px;top:626.75px;font:normal 400 10.6px 'Liberation Sans', sans-serif;line-height:1;color:#0c0c0c;white-space:pre;transform:scaleX(0.86);transform-origin:0 0;text-shadow:0.25px 0 0 #0c0c0c;">B</div>
<div style="position:absolute;left:137.0px;top:626.75px;font:normal 400 10.6px 'Liberation Sans', sans-serif;line-height:1;color:#0c0c0c;white-space:pre;transform:scaleX(0.92);transform-origin:0 0;text-shadow:0.25px 0 0 #0c0c0c;">b</div>
<div style="position:absolute;left:144.0px;top:626.75px;font:normal 400 10.6px 'Liberation Sans', sans-serif;line-height:1;color:#0c0c0c;white-space:pre;transform:scaleX(0.92);transform-origin:0 0;text-shadow:0.25px 0 0 #0c0c0c;">0</div>
<div style="position:absolute;left:131.4px;top:616.69px;font:normal 400 10.6px 'Liberation Sans', sans-serif;line-height:1;color:#0c0c0c;white-space:pre;transform:scaleX(0.86);transform-origin:0 0;text-shadow:0.25px 0 0 #0c0c0c;">C</div>
<div style="position:absolute;left:144.0px;top:616.69px;font:normal 400 10.6px 'Liberation Sans', sans-serif;line-height:1;color:#0c0c0c;white-space:pre;transform:scaleX(0.92);transform-origin:0 0;text-shadow:0.25px 0 0 #0c0c0c;">1</div>
<div style="position:absolute;left:131.4px;top:606.63px;font:normal 400 10.6px 'Liberation Sans', sans-serif;line-height:1;color:#0c0c0c;white-space:pre;transform:scaleX(0.86);transform-origin:0 0;text-shadow:0.25px 0 0 #0c0c0c;">D</div>
<div style="position:absolute;left:144.0px;top:606.63px;font:normal 400 10.6px 'Liberation Sans', sans-serif;line-height:1;color:#0c0c0c;white-space:pre;transform:scaleX(0.92);transform-origin:0 0;text-shadow:0.25px 0 0 #0c0c0c;">1</div>
<div style="position:absolute;left:131.4px;top:596.57px;font:normal 400 10.6px 'Liberation Sans', sans-serif;line-height:1;color:#0c0c0c;white-space:pre;transform:scaleX(0.86);transform-origin:0 0;text-shadow:0.25px 0 0 #0c0c0c;">E</div>
<div style="position:absolute;left:144.0px;top:596.57px;font:normal 400 10.6px 'Liberation Sans', sans-serif;line-height:1;color:#0c0c0c;white-space:pre;transform:scaleX(0.92);transform-origin:0 0;text-shadow:0.25px 0 0 #0c0c0c;">1</div>
<div style="position:absolute;left:131.4px;top:586.51px;font:normal 400 10.6px 'Liberation Sans', sans-serif;line-height:1;color:#0c0c0c;white-space:pre;transform:scaleX(0.86);transform-origin:0 0;text-shadow:0.25px 0 0 #0c0c0c;">F</div>
<div style="position:absolute;left:137.3px;top:586.51px;font:normal 400 10.6px 'Liberation Sans', sans-serif;line-height:1;color:#0c0c0c;white-space:pre;transform:scaleX(0.92);transform-origin:0 0;text-shadow:0.25px 0 0 #0c0c0c;">#</div>
<div style="position:absolute;left:144.0px;top:586.51px;font:normal 400 10.6px 'Liberation Sans', sans-serif;line-height:1;color:#0c0c0c;white-space:pre;transform:scaleX(0.92);transform-origin:0 0;text-shadow:0.25px 0 0 #0c0c0c;">1</div>
<div style="position:absolute;left:131.4px;top:576.45px;font:normal 400 10.6px 'Liberation Sans', sans-serif;line-height:1;color:#0c0c0c;white-space:pre;transform:scaleX(0.86);transform-origin:0 0;text-shadow:0.25px 0 0 #0c0c0c;">G</div>
<div style="position:absolute;left:137.3px;top:576.45px;font:normal 400 10.6px 'Liberation Sans', sans-serif;line-height:1;color:#0c0c0c;white-space:pre;transform:scaleX(0.92);transform-origin:0 0;text-shadow:0.25px 0 0 #0c0c0c;">#</div>
<div style="position:absolute;left:144.0px;top:576.45px;font:normal 400 10.6px 'Liberation Sans', sans-serif;line-height:1;color:#0c0c0c;white-space:pre;transform:scaleX(0.92);transform-origin:0 0;text-shadow:0.25px 0 0 #0c0c0c;">1</div>
<div style="position:absolute;left:131.4px;top:566.39px;font:normal 400 10.6px 'Liberation Sans', sans-serif;line-height:1;color:#0c0c0c;white-space:pre;transform:scaleX(0.86);transform-origin:0 0;text-shadow:0.25px 0 0 #0c0c0c;">B</div>
<div style="position:absolute;left:137.0px;top:566.39px;font:normal 400 10.6px 'Liberation Sans', sans-serif;line-height:1;color:#0c0c0c;white-space:pre;transform:scaleX(0.92);transform-origin:0 0;text-shadow:0.25px 0 0 #0c0c0c;">b</div>
<div style="position:absolute;left:144.0px;top:566.39px;font:normal 400 10.6px 'Liberation Sans', sans-serif;line-height:1;color:#0c0c0c;white-space:pre;transform:scaleX(0.92);transform-origin:0 0;text-shadow:0.25px 0 0 #0c0c0c;">1</div>
<div style="position:absolute;left:131.4px;top:556.33px;font:normal 400 10.6px 'Liberation Sans', sans-serif;line-height:1;color:#0c0c0c;white-space:pre;transform:scaleX(0.86);transform-origin:0 0;text-shadow:0.25px 0 0 #0c0c0c;">C</div>
<div style="position:absolute;left:144.0px;top:556.33px;font:normal 400 10.6px 'Liberation Sans', sans-serif;line-height:1;color:#0c0c0c;white-space:pre;transform:scaleX(0.92);transform-origin:0 0;text-shadow:0.25px 0 0 #0c0c0c;">2</div>
<div style="position:absolute;left:131.4px;top:546.27px;font:normal 400 10.6px 'Liberation Sans', sans-serif;line-height:1;color:#0c0c0c;white-space:pre;transform:scaleX(0.86);transform-origin:0 0;text-shadow:0.25px 0 0 #0c0c0c;">D</div>
<div style="position:absolute;left:144.0px;top:546.27px;font:normal 400 10.6px 'Liberation Sans', sans-serif;line-height:1;color:#0c0c0c;white-space:pre;transform:scaleX(0.92);transform-origin:0 0;text-shadow:0.25px 0 0 #0c0c0c;">2</div>
<div style="position:absolute;left:131.4px;top:536.21px;font:normal 400 10.6px 'Liberation Sans', sans-serif;line-height:1;color:#0c0c0c;white-space:pre;transform:scaleX(0.86);transform-origin:0 0;text-shadow:0.25px 0 0 #0c0c0c;">E</div>
<div style="position:absolute;left:144.0px;top:536.21px;font:normal 400 10.6px 'Liberation Sans', sans-serif;line-height:1;color:#0c0c0c;white-space:pre;transform:scaleX(0.92);transform-origin:0 0;text-shadow:0.25px 0 0 #0c0c0c;">2</div>
<div style="position:absolute;left:131.4px;top:526.15px;font:normal 400 10.6px 'Liberation Sans', sans-serif;line-height:1;color:#0c0c0c;white-space:pre;transform:scaleX(0.86);transform-origin:0 0;text-shadow:0.25px 0 0 #0c0c0c;">F</div>
<div style="position:absolute;left:137.3px;top:526.15px;font:normal 400 10.6px 'Liberation Sans', sans-serif;line-height:1;color:#0c0c0c;white-space:pre;transform:scaleX(0.92);transform-origin:0 0;text-shadow:0.25px 0 0 #0c0c0c;">#</div>
<div style="position:absolute;left:144.0px;top:526.15px;font:normal 400 10.6px 'Liberation Sans', sans-serif;line-height:1;color:#0c0c0c;white-space:pre;transform:scaleX(0.92);transform-origin:0 0;text-shadow:0.25px 0 0 #0c0c0c;">2</div>
<div style="position:absolute;left:131.4px;top:516.09px;font:normal 400 10.6px 'Liberation Sans', sans-serif;line-height:1;color:#0c0c0c;white-space:pre;transform:scaleX(0.86);transform-origin:0 0;text-shadow:0.25px 0 0 #0c0c0c;">G</div>
<div style="position:absolute;left:137.3px;top:516.09px;font:normal 400 10.6px 'Liberation Sans', sans-serif;line-height:1;color:#0c0c0c;white-space:pre;transform:scaleX(0.92);transform-origin:0 0;text-shadow:0.25px 0 0 #0c0c0c;">#</div>
<div style="position:absolute;left:144.0px;top:516.09px;font:normal 400 10.6px 'Liberation Sans', sans-serif;line-height:1;color:#0c0c0c;white-space:pre;transform:scaleX(0.92);transform-origin:0 0;text-shadow:0.25px 0 0 #0c0c0c;">2</div>
<div style="position:absolute;left:131.4px;top:506.03px;font:normal 400 10.6px 'Liberation Sans', sans-serif;line-height:1;color:#0c0c0c;white-space:pre;transform:scaleX(0.86);transform-origin:0 0;text-shadow:0.25px 0 0 #0c0c0c;">B</div>
<div style="position:absolute;left:137.0px;top:506.03px;font:normal 400 10.6px 'Liberation Sans', sans-serif;line-height:1;color:#0c0c0c;white-space:pre;transform:scaleX(0.92);transform-origin:0 0;text-shadow:0.25px 0 0 #0c0c0c;">b</div>
<div style="position:absolute;left:144.0px;top:506.03px;font:normal 400 10.6px 'Liberation Sans', sans-serif;line-height:1;color:#0c0c0c;white-space:pre;transform:scaleX(0.92);transform-origin:0 0;text-shadow:0.25px 0 0 #0c0c0c;">2</div>
<div style="position:absolute;left:131.4px;top:495.97px;font:normal 400 10.6px 'Liberation Sans', sans-serif;line-height:1;color:#0c0c0c;white-space:pre;transform:scaleX(0.86);transform-origin:0 0;text-shadow:0.25px 0 0 #0c0c0c;">C</div>
<div style="position:absolute;left:144.0px;top:495.97px;font:normal 400 10.6px 'Liberation Sans', sans-serif;line-height:1;color:#0c0c0c;white-space:pre;transform:scaleX(0.92);transform-origin:0 0;text-shadow:0.25px 0 0 #0c0c0c;">3</div>
<div style="position:absolute;left:131.4px;top:485.91px;font:normal 400 10.6px 'Liberation Sans', sans-serif;line-height:1;color:#0c0c0c;white-space:pre;transform:scaleX(0.86);transform-origin:0 0;text-shadow:0.25px 0 0 #0c0c0c;">D</div>
<div style="position:absolute;left:144.0px;top:485.91px;font:normal 400 10.6px 'Liberation Sans', sans-serif;line-height:1;color:#0c0c0c;white-space:pre;transform:scaleX(0.92);transform-origin:0 0;text-shadow:0.25px 0 0 #0c0c0c;">3</div>
<div style="position:absolute;left:131.4px;top:475.85px;font:normal 400 10.6px 'Liberation Sans', sans-serif;line-height:1;color:#0c0c0c;white-space:pre;transform:scaleX(0.86);transform-origin:0 0;text-shadow:0.25px 0 0 #0c0c0c;">E</div>
<div style="position:absolute;left:144.0px;top:475.85px;font:normal 400 10.6px 'Liberation Sans', sans-serif;line-height:1;color:#0c0c0c;white-space:pre;transform:scaleX(0.92);transform-origin:0 0;text-shadow:0.25px 0 0 #0c0c0c;">3</div>
<div style="position:absolute;left:131.4px;top:465.79px;font:normal 400 10.6px 'Liberation Sans', sans-serif;line-height:1;color:#0c0c0c;white-space:pre;transform:scaleX(0.86);transform-origin:0 0;text-shadow:0.25px 0 0 #0c0c0c;">F</div>
<div style="position:absolute;left:137.3px;top:465.79px;font:normal 400 10.6px 'Liberation Sans', sans-serif;line-height:1;color:#0c0c0c;white-space:pre;transform:scaleX(0.92);transform-origin:0 0;text-shadow:0.25px 0 0 #0c0c0c;">#</div>
<div style="position:absolute;left:144.0px;top:465.79px;font:normal 400 10.6px 'Liberation Sans', sans-serif;line-height:1;color:#0c0c0c;white-space:pre;transform:scaleX(0.92);transform-origin:0 0;text-shadow:0.25px 0 0 #0c0c0c;">3</div>
<div style="position:absolute;left:131.4px;top:455.73px;font:normal 400 10.6px 'Liberation Sans', sans-serif;line-height:1;color:#0c0c0c;white-space:pre;transform:scaleX(0.86);transform-origin:0 0;text-shadow:0.25px 0 0 #0c0c0c;">G</div>
<div style="position:absolute;left:137.3px;top:455.73px;font:normal 400 10.6px 'Liberation Sans', sans-serif;line-height:1;color:#0c0c0c;white-space:pre;transform:scaleX(0.92);transform-origin:0 0;text-shadow:0.25px 0 0 #0c0c0c;">#</div>
<div style="position:absolute;left:144.0px;top:455.73px;font:normal 400 10.6px 'Liberation Sans', sans-serif;line-height:1;color:#0c0c0c;white-space:pre;transform:scaleX(0.92);transform-origin:0 0;text-shadow:0.25px 0 0 #0c0c0c;">3</div>
<div style="position:absolute;left:131.4px;top:445.67px;font:normal 400 10.6px 'Liberation Sans', sans-serif;line-height:1;color:#0c0c0c;white-space:pre;transform:scaleX(0.86);transform-origin:0 0;text-shadow:0.25px 0 0 #0c0c0c;">B</div>
<div style="position:absolute;left:137.0px;top:445.67px;font:normal 400 10.6px 'Liberation Sans', sans-serif;line-height:1;color:#0c0c0c;white-space:pre;transform:scaleX(0.92);transform-origin:0 0;text-shadow:0.25px 0 0 #0c0c0c;">b</div>
<div style="position:absolute;left:144.0px;top:445.67px;font:normal 400 10.6px 'Liberation Sans', sans-serif;line-height:1;color:#0c0c0c;white-space:pre;transform:scaleX(0.92);transform-origin:0 0;text-shadow:0.25px 0 0 #0c0c0c;">3</div>
<div style="position:absolute;left:131.4px;top:435.61px;font:normal 400 10.6px 'Liberation Sans', sans-serif;line-height:1;color:#0c0c0c;white-space:pre;transform:scaleX(0.86);transform-origin:0 0;text-shadow:0.25px 0 0 #0c0c0c;">C</div>
<div style="position:absolute;left:144.0px;top:435.61px;font:normal 400 10.6px 'Liberation Sans', sans-serif;line-height:1;color:#0c0c0c;white-space:pre;transform:scaleX(0.92);transform-origin:0 0;text-shadow:0.25px 0 0 #0c0c0c;">4</div>
<div style="position:absolute;left:131.4px;top:425.55px;font:normal 400 10.6px 'Liberation Sans', sans-serif;line-height:1;color:#0c0c0c;white-space:pre;transform:scaleX(0.86);transform-origin:0 0;text-shadow:0.25px 0 0 #0c0c0c;">D</div>
<div style="position:absolute;left:144.0px;top:425.55px;font:normal 400 10.6px 'Liberation Sans', sans-serif;line-height:1;color:#0c0c0c;white-space:pre;transform:scaleX(0.92);transform-origin:0 0;text-shadow:0.25px 0 0 #0c0c0c;">4</div>
<div style="position:absolute;left:131.4px;top:415.49px;font:normal 400 10.6px 'Liberation Sans', sans-serif;line-height:1;color:#0c0c0c;white-space:pre;transform:scaleX(0.86);transform-origin:0 0;text-shadow:0.25px 0 0 #0c0c0c;">E</div>
<div style="position:absolute;left:144.0px;top:415.49px;font:normal 400 10.6px 'Liberation Sans', sans-serif;line-height:1;color:#0c0c0c;white-space:pre;transform:scaleX(0.92);transform-origin:0 0;text-shadow:0.25px 0 0 #0c0c0c;">4</div>
<div style="position:absolute;left:131.4px;top:405.43px;font:normal 400 10.6px 'Liberation Sans', sans-serif;line-height:1;color:#0c0c0c;white-space:pre;transform:scaleX(0.86);transform-origin:0 0;text-shadow:0.25px 0 0 #0c0c0c;">F</div>
<div style="position:absolute;left:137.3px;top:405.43px;font:normal 400 10.6px 'Liberation Sans', sans-serif;line-height:1;color:#0c0c0c;white-space:pre;transform:scaleX(0.92);transform-origin:0 0;text-shadow:0.25px 0 0 #0c0c0c;">#</div>
<div style="position:absolute;left:144.0px;top:405.43px;font:normal 400 10.6px 'Liberation Sans', sans-serif;line-height:1;color:#0c0c0c;white-space:pre;transform:scaleX(0.92);transform-origin:0 0;text-shadow:0.25px 0 0 #0c0c0c;">4</div>
<div style="position:absolute;left:131.4px;top:395.37px;font:normal 400 10.6px 'Liberation Sans', sans-serif;line-height:1;color:#0c0c0c;white-space:pre;transform:scaleX(0.86);transform-origin:0 0;text-shadow:0.25px 0 0 #0c0c0c;">G</div>
<div style="position:absolute;left:137.3px;top:395.37px;font:normal 400 10.6px 'Liberation Sans', sans-serif;line-height:1;color:#0c0c0c;white-space:pre;transform:scaleX(0.92);transform-origin:0 0;text-shadow:0.25px 0 0 #0c0c0c;">#</div>
<div style="position:absolute;left:144.0px;top:395.37px;font:normal 400 10.6px 'Liberation Sans', sans-serif;line-height:1;color:#0c0c0c;white-space:pre;transform:scaleX(0.92);transform-origin:0 0;text-shadow:0.25px 0 0 #0c0c0c;">4</div>
<div style="position:absolute;left:131.4px;top:385.31px;font:normal 400 10.6px 'Liberation Sans', sans-serif;line-height:1;color:#0c0c0c;white-space:pre;transform:scaleX(0.86);transform-origin:0 0;text-shadow:0.25px 0 0 #0c0c0c;">B</div>
<div style="position:absolute;left:137.0px;top:385.31px;font:normal 400 10.6px 'Liberation Sans', sans-serif;line-height:1;color:#0c0c0c;white-space:pre;transform:scaleX(0.92);transform-origin:0 0;text-shadow:0.25px 0 0 #0c0c0c;">b</div>
<div style="position:absolute;left:144.0px;top:385.31px;font:normal 400 10.6px 'Liberation Sans', sans-serif;line-height:1;color:#0c0c0c;white-space:pre;transform:scaleX(0.92);transform-origin:0 0;text-shadow:0.25px 0 0 #0c0c0c;">4</div>
<div style="position:absolute;left:131.4px;top:375.25px;font:normal 400 10.6px 'Liberation Sans', sans-serif;line-height:1;color:#0c0c0c;white-space:pre;transform:scaleX(0.86);transform-origin:0 0;text-shadow:0.25px 0 0 #0c0c0c;">C</div>
<div style="position:absolute;left:144.0px;top:375.25px;font:normal 400 10.6px 'Liberation Sans', sans-serif;line-height:1;color:#0c0c0c;white-space:pre;transform:scaleX(0.92);transform-origin:0 0;text-shadow:0.25px 0 0 #0c0c0c;">5</div>
<div style="position:absolute;left:131.4px;top:365.19px;font:normal 400 10.6px 'Liberation Sans', sans-serif;line-height:1;color:#0c0c0c;white-space:pre;transform:scaleX(0.86);transform-origin:0 0;text-shadow:0.25px 0 0 #0c0c0c;">D</div>
<div style="position:absolute;left:144.0px;top:365.19px;font:normal 400 10.6px 'Liberation Sans', sans-serif;line-height:1;color:#0c0c0c;white-space:pre;transform:scaleX(0.92);transform-origin:0 0;text-shadow:0.25px 0 0 #0c0c0c;">5</div>
<div style="position:absolute;left:131.4px;top:355.13px;font:normal 400 10.6px 'Liberation Sans', sans-serif;line-height:1;color:#0c0c0c;white-space:pre;transform:scaleX(0.86);transform-origin:0 0;text-shadow:0.25px 0 0 #0c0c0c;">E</div>
<div style="position:absolute;left:144.0px;top:355.13px;font:normal 400 10.6px 'Liberation Sans', sans-serif;line-height:1;color:#0c0c0c;white-space:pre;transform:scaleX(0.92);transform-origin:0 0;text-shadow:0.25px 0 0 #0c0c0c;">5</div>
<div style="position:absolute;left:131.4px;top:345.07px;font:normal 400 10.6px 'Liberation Sans', sans-serif;line-height:1;color:#0c0c0c;white-space:pre;transform:scaleX(0.86);transform-origin:0 0;text-shadow:0.25px 0 0 #0c0c0c;">F</div>
<div style="position:absolute;left:137.3px;top:345.07px;font:normal 400 10.6px 'Liberation Sans', sans-serif;line-height:1;color:#0c0c0c;white-space:pre;transform:scaleX(0.92);transform-origin:0 0;text-shadow:0.25px 0 0 #0c0c0c;">#</div>
<div style="position:absolute;left:144.0px;top:345.07px;font:normal 400 10.6px 'Liberation Sans', sans-serif;line-height:1;color:#0c0c0c;white-space:pre;transform:scaleX(0.92);transform-origin:0 0;text-shadow:0.25px 0 0 #0c0c0c;">5</div>
<div style="position:absolute;left:131.4px;top:335.01px;font:normal 400 10.6px 'Liberation Sans', sans-serif;line-height:1;color:#0c0c0c;white-space:pre;transform:scaleX(0.86);transform-origin:0 0;text-shadow:0.25px 0 0 #0c0c0c;">G</div>
<div style="position:absolute;left:137.3px;top:335.01px;font:normal 400 10.6px 'Liberation Sans', sans-serif;line-height:1;color:#0c0c0c;white-space:pre;transform:scaleX(0.92);transform-origin:0 0;text-shadow:0.25px 0 0 #0c0c0c;">#</div>
<div style="position:absolute;left:144.0px;top:335.01px;font:normal 400 10.6px 'Liberation Sans', sans-serif;line-height:1;color:#0c0c0c;white-space:pre;transform:scaleX(0.92);transform-origin:0 0;text-shadow:0.25px 0 0 #0c0c0c;">5</div>
<div style="position:absolute;left:131.4px;top:324.95px;font:normal 400 10.6px 'Liberation Sans', sans-serif;line-height:1;color:#0c0c0c;white-space:pre;transform:scaleX(0.86);transform-origin:0 0;text-shadow:0.25px 0 0 #0c0c0c;">B</div>
<div style="position:absolute;left:137.0px;top:324.95px;font:normal 400 10.6px 'Liberation Sans', sans-serif;line-height:1;color:#0c0c0c;white-space:pre;transform:scaleX(0.92);transform-origin:0 0;text-shadow:0.25px 0 0 #0c0c0c;">b</div>
<div style="position:absolute;left:144.0px;top:324.95px;font:normal 400 10.6px 'Liberation Sans', sans-serif;line-height:1;color:#0c0c0c;white-space:pre;transform:scaleX(0.92);transform-origin:0 0;text-shadow:0.25px 0 0 #0c0c0c;">5</div>
<div style="position:absolute;left:131.4px;top:314.89px;font:normal 400 10.6px 'Liberation Sans', sans-serif;line-height:1;color:#0c0c0c;white-space:pre;transform:scaleX(0.86);transform-origin:0 0;text-shadow:0.25px 0 0 #0c0c0c;">C</div>
<div style="position:absolute;left:144.0px;top:314.89px;font:normal 400 10.6px 'Liberation Sans', sans-serif;line-height:1;color:#0c0c0c;white-space:pre;transform:scaleX(0.92);transform-origin:0 0;text-shadow:0.25px 0 0 #0c0c0c;">6</div>
<div style="position:absolute;left:131.4px;top:304.83px;font:normal 400 10.6px 'Liberation Sans', sans-serif;line-height:1;color:#0c0c0c;white-space:pre;transform:scaleX(0.86);transform-origin:0 0;text-shadow:0.25px 0 0 #0c0c0c;">D</div>
<div style="position:absolute;left:144.0px;top:304.83px;font:normal 400 10.6px 'Liberation Sans', sans-serif;line-height:1;color:#0c0c0c;white-space:pre;transform:scaleX(0.92);transform-origin:0 0;text-shadow:0.25px 0 0 #0c0c0c;">6</div>
<div style="position:absolute;left:131.4px;top:294.77px;font:normal 400 10.6px 'Liberation Sans', sans-serif;line-height:1;color:#0c0c0c;white-space:pre;transform:scaleX(0.86);transform-origin:0 0;text-shadow:0.25px 0 0 #0c0c0c;">E</div>
<div style="position:absolute;left:144.0px;top:294.77px;font:normal 400 10.6px 'Liberation Sans', sans-serif;line-height:1;color:#0c0c0c;white-space:pre;transform:scaleX(0.92);transform-origin:0 0;text-shadow:0.25px 0 0 #0c0c0c;">6</div>
<div style="position:absolute;left:131.4px;top:284.71px;font:normal 400 10.6px 'Liberation Sans', sans-serif;line-height:1;color:#0c0c0c;white-space:pre;transform:scaleX(0.86);transform-origin:0 0;text-shadow:0.25px 0 0 #0c0c0c;">F</div>
<div style="position:absolute;left:137.3px;top:284.71px;font:normal 400 10.6px 'Liberation Sans', sans-serif;line-height:1;color:#0c0c0c;white-space:pre;transform:scaleX(0.92);transform-origin:0 0;text-shadow:0.25px 0 0 #0c0c0c;">#</div>
<div style="position:absolute;left:144.0px;top:284.71px;font:normal 400 10.6px 'Liberation Sans', sans-serif;line-height:1;color:#0c0c0c;white-space:pre;transform:scaleX(0.92);transform-origin:0 0;text-shadow:0.25px 0 0 #0c0c0c;">6</div>
<div style="position:absolute;left:131.4px;top:274.65px;font:normal 400 10.6px 'Liberation Sans', sans-serif;line-height:1;color:#0c0c0c;white-space:pre;transform:scaleX(0.86);transform-origin:0 0;text-shadow:0.25px 0 0 #0c0c0c;">G</div>
<div style="position:absolute;left:137.3px;top:274.65px;font:normal 400 10.6px 'Liberation Sans', sans-serif;line-height:1;color:#0c0c0c;white-space:pre;transform:scaleX(0.92);transform-origin:0 0;text-shadow:0.25px 0 0 #0c0c0c;">#</div>
<div style="position:absolute;left:144.0px;top:274.65px;font:normal 400 10.6px 'Liberation Sans', sans-serif;line-height:1;color:#0c0c0c;white-space:pre;transform:scaleX(0.92);transform-origin:0 0;text-shadow:0.25px 0 0 #0c0c0c;">6</div>
<div style="position:absolute;left:131.4px;top:264.59px;font:normal 400 10.6px 'Liberation Sans', sans-serif;line-height:1;color:#0c0c0c;white-space:pre;transform:scaleX(0.86);transform-origin:0 0;text-shadow:0.25px 0 0 #0c0c0c;">B</div>
<div style="position:absolute;left:137.0px;top:264.59px;font:normal 400 10.6px 'Liberation Sans', sans-serif;line-height:1;color:#0c0c0c;white-space:pre;transform:scaleX(0.92);transform-origin:0 0;text-shadow:0.25px 0 0 #0c0c0c;">b</div>
<div style="position:absolute;left:144.0px;top:264.59px;font:normal 400 10.6px 'Liberation Sans', sans-serif;line-height:1;color:#0c0c0c;white-space:pre;transform:scaleX(0.92);transform-origin:0 0;text-shadow:0.25px 0 0 #0c0c0c;">6</div>
<div style="position:absolute;left:131.4px;top:254.53px;font:normal 400 10.6px 'Liberation Sans', sans-serif;line-height:1;color:#0c0c0c;white-space:pre;transform:scaleX(0.86);transform-origin:0 0;text-shadow:0.25px 0 0 #0c0c0c;">C</div>
<div style="position:absolute;left:144.0px;top:254.53px;font:normal 400 10.6px 'Liberation Sans', sans-serif;line-height:1;color:#0c0c0c;white-space:pre;transform:scaleX(0.92);transform-origin:0 0;text-shadow:0.25px 0 0 #0c0c0c;">7</div>
<div style="position:absolute;left:131.4px;top:244.47px;font:normal 400 10.6px 'Liberation Sans', sans-serif;line-height:1;color:#0c0c0c;white-space:pre;transform:scaleX(0.86);transform-origin:0 0;text-shadow:0.25px 0 0 #0c0c0c;">D</div>
<div style="position:absolute;left:144.0px;top:244.47px;font:normal 400 10.6px 'Liberation Sans', sans-serif;line-height:1;color:#0c0c0c;white-space:pre;transform:scaleX(0.92);transform-origin:0 0;text-shadow:0.25px 0 0 #0c0c0c;">7</div>
<div style="position:absolute;left:131.4px;top:234.41px;font:normal 400 10.6px 'Liberation Sans', sans-serif;line-height:1;color:#0c0c0c;white-space:pre;transform:scaleX(0.86);transform-origin:0 0;text-shadow:0.25px 0 0 #0c0c0c;">E</div>
<div style="position:absolute;left:144.0px;top:234.41px;font:normal 400 10.6px 'Liberation Sans', sans-serif;line-height:1;color:#0c0c0c;white-space:pre;transform:scaleX(0.92);transform-origin:0 0;text-shadow:0.25px 0 0 #0c0c0c;">7</div>
<div style="position:absolute;left:131.4px;top:224.35px;font:normal 400 10.6px 'Liberation Sans', sans-serif;line-height:1;color:#0c0c0c;white-space:pre;transform:scaleX(0.86);transform-origin:0 0;text-shadow:0.25px 0 0 #0c0c0c;">F</div>
<div style="position:absolute;left:137.3px;top:224.35px;font:normal 400 10.6px 'Liberation Sans', sans-serif;line-height:1;color:#0c0c0c;white-space:pre;transform:scaleX(0.92);transform-origin:0 0;text-shadow:0.25px 0 0 #0c0c0c;">#</div>
<div style="position:absolute;left:144.0px;top:224.35px;font:normal 400 10.6px 'Liberation Sans', sans-serif;line-height:1;color:#0c0c0c;white-space:pre;transform:scaleX(0.92);transform-origin:0 0;text-shadow:0.25px 0 0 #0c0c0c;">7</div>
<div style="position:absolute;left:131.4px;top:214.29px;font:normal 400 10.6px 'Liberation Sans', sans-serif;line-height:1;color:#0c0c0c;white-space:pre;transform:scaleX(0.86);transform-origin:0 0;text-shadow:0.25px 0 0 #0c0c0c;">G</div>
<div style="position:absolute;left:137.3px;top:214.29px;font:normal 400 10.6px 'Liberation Sans', sans-serif;line-height:1;color:#0c0c0c;white-space:pre;transform:scaleX(0.92);transform-origin:0 0;text-shadow:0.25px 0 0 #0c0c0c;">#</div>
<div style="position:absolute;left:144.0px;top:214.29px;font:normal 400 10.6px 'Liberation Sans', sans-serif;line-height:1;color:#0c0c0c;white-space:pre;transform:scaleX(0.92);transform-origin:0 0;text-shadow:0.25px 0 0 #0c0c0c;">7</div>
<div style="position:absolute;left:131.4px;top:204.23px;font:normal 400 10.6px 'Liberation Sans', sans-serif;line-height:1;color:#0c0c0c;white-space:pre;transform:scaleX(0.86);transform-origin:0 0;text-shadow:0.25px 0 0 #0c0c0c;">B</div>
<div style="position:absolute;left:137.0px;top:204.23px;font:normal 400 10.6px 'Liberation Sans', sans-serif;line-height:1;color:#0c0c0c;white-space:pre;transform:scaleX(0.92);transform-origin:0 0;text-shadow:0.25px 0 0 #0c0c0c;">b</div>
<div style="position:absolute;left:144.0px;top:204.23px;font:normal 400 10.6px 'Liberation Sans', sans-serif;line-height:1;color:#0c0c0c;white-space:pre;transform:scaleX(0.92);transform-origin:0 0;text-shadow:0.25px 0 0 #0c0c0c;">7</div>
<div style="position:absolute;left:131.4px;top:194.17px;font:normal 400 10.6px 'Liberation Sans', sans-serif;line-height:1;color:#0c0c0c;white-space:pre;transform:scaleX(0.86);transform-origin:0 0;text-shadow:0.25px 0 0 #0c0c0c;">C</div>
<div style="position:absolute;left:144.0px;top:194.17px;font:normal 400 10.6px 'Liberation Sans', sans-serif;line-height:1;color:#0c0c0c;white-space:pre;transform:scaleX(0.92);transform-origin:0 0;text-shadow:0.25px 0 0 #0c0c0c;">8</div>
<div style="position:absolute;left:131.4px;top:184.11px;font:normal 400 10.6px 'Liberation Sans', sans-serif;line-height:1;color:#0c0c0c;white-space:pre;transform:scaleX(0.86);transform-origin:0 0;text-shadow:0.25px 0 0 #0c0c0c;">D</div>
<div style="position:absolute;left:144.0px;top:184.11px;font:normal 400 10.6px 'Liberation Sans', sans-serif;line-height:1;color:#0c0c0c;white-space:pre;transform:scaleX(0.92);transform-origin:0 0;text-shadow:0.25px 0 0 #0c0c0c;">8</div>
<div style="position:absolute;left:131.4px;top:174.05px;font:normal 400 10.6px 'Liberation Sans', sans-serif;line-height:1;color:#0c0c0c;white-space:pre;transform:scaleX(0.86);transform-origin:0 0;text-shadow:0.25px 0 0 #0c0c0c;">E</div>
<div style="position:absolute;left:144.0px;top:174.05px;font:normal 400 10.6px 'Liberation Sans', sans-serif;line-height:1;color:#0c0c0c;white-space:pre;transform:scaleX(0.92);transform-origin:0 0;text-shadow:0.25px 0 0 #0c0c0c;">8</div>
<div style="position:absolute;left:131.4px;top:163.99px;font:normal 400 10.6px 'Liberation Sans', sans-serif;line-height:1;color:#0c0c0c;white-space:pre;transform:scaleX(0.86);transform-origin:0 0;text-shadow:0.25px 0 0 #0c0c0c;">F</div>
<div style="position:absolute;left:137.3px;top:163.99px;font:normal 400 10.6px 'Liberation Sans', sans-serif;line-height:1;color:#0c0c0c;white-space:pre;transform:scaleX(0.92);transform-origin:0 0;text-shadow:0.25px 0 0 #0c0c0c;">#</div>
<div style="position:absolute;left:144.0px;top:163.99px;font:normal 400 10.6px 'Liberation Sans', sans-serif;line-height:1;color:#0c0c0c;white-space:pre;transform:scaleX(0.92);transform-origin:0 0;text-shadow:0.25px 0 0 #0c0c0c;">8</div>
<div style="position:absolute;left:131.4px;top:153.93px;font:normal 400 10.6px 'Liberation Sans', sans-serif;line-height:1;color:#0c0c0c;white-space:pre;transform:scaleX(0.86);transform-origin:0 0;text-shadow:0.25px 0 0 #0c0c0c;">G</div>
<div style="position:absolute;left:137.3px;top:153.93px;font:normal 400 10.6px 'Liberation Sans', sans-serif;line-height:1;color:#0c0c0c;white-space:pre;transform:scaleX(0.92);transform-origin:0 0;text-shadow:0.25px 0 0 #0c0c0c;">#</div>
<div style="position:absolute;left:144.0px;top:153.93px;font:normal 400 10.6px 'Liberation Sans', sans-serif;line-height:1;color:#0c0c0c;white-space:pre;transform:scaleX(0.92);transform-origin:0 0;text-shadow:0.25px 0 0 #0c0c0c;">8</div>
<div style="position:absolute;left:131.4px;top:143.87px;font:normal 400 10.6px 'Liberation Sans', sans-serif;line-height:1;color:#0c0c0c;white-space:pre;transform:scaleX(0.86);transform-origin:0 0;text-shadow:0.25px 0 0 #0c0c0c;">B</div>
<div style="position:absolute;left:137.0px;top:143.87px;font:normal 400 10.6px 'Liberation Sans', sans-serif;line-height:1;color:#0c0c0c;white-space:pre;transform:scaleX(0.92);transform-origin:0 0;text-shadow:0.25px 0 0 #0c0c0c;">b</div>
<div style="position:absolute;left:144.0px;top:143.87px;font:normal 400 10.6px 'Liberation Sans', sans-serif;line-height:1;color:#0c0c0c;white-space:pre;transform:scaleX(0.92);transform-origin:0 0;text-shadow:0.25px 0 0 #0c0c0c;">8</div>
<div style="position:absolute;left:131.4px;top:133.81px;font:normal 400 10.6px 'Liberation Sans', sans-serif;line-height:1;color:#0c0c0c;white-space:pre;transform:scaleX(0.86);transform-origin:0 0;text-shadow:0.25px 0 0 #0c0c0c;">C</div>
<div style="position:absolute;left:144.0px;top:133.81px;font:normal 400 10.6px 'Liberation Sans', sans-serif;line-height:1;color:#0c0c0c;white-space:pre;transform:scaleX(0.92);transform-origin:0 0;text-shadow:0.25px 0 0 #0c0c0c;">9</div>
<div style="position:absolute;left:131.4px;top:123.75px;font:normal 400 10.6px 'Liberation Sans', sans-serif;line-height:1;color:#0c0c0c;white-space:pre;transform:scaleX(0.86);transform-origin:0 0;text-shadow:0.25px 0 0 #0c0c0c;">D</div>
<div style="position:absolute;left:144.0px;top:123.75px;font:normal 400 10.6px 'Liberation Sans', sans-serif;line-height:1;color:#0c0c0c;white-space:pre;transform:scaleX(0.92);transform-origin:0 0;text-shadow:0.25px 0 0 #0c0c0c;">9</div>
<div style="position:absolute;left:131.4px;top:113.69px;font:normal 400 10.6px 'Liberation Sans', sans-serif;line-height:1;color:#0c0c0c;white-space:pre;transform:scaleX(0.86);transform-origin:0 0;text-shadow:0.25px 0 0 #0c0c0c;">E</div>
<div style="position:absolute;left:144.0px;top:113.69px;font:normal 400 10.6px 'Liberation Sans', sans-serif;line-height:1;color:#0c0c0c;white-space:pre;transform:scaleX(0.92);transform-origin:0 0;text-shadow:0.25px 0 0 #0c0c0c;">9</div>
<div style="position:absolute;left:131.4px;top:103.63px;font:normal 400 10.6px 'Liberation Sans', sans-serif;line-height:1;color:#0c0c0c;white-space:pre;transform:scaleX(0.86);transform-origin:0 0;text-shadow:0.25px 0 0 #0c0c0c;">F</div>
<div style="position:absolute;left:137.3px;top:103.63px;font:normal 400 10.6px 'Liberation Sans', sans-serif;line-height:1;color:#0c0c0c;white-space:pre;transform:scaleX(0.92);transform-origin:0 0;text-shadow:0.25px 0 0 #0c0c0c;">#</div>
<div style="position:absolute;left:144.0px;top:103.63px;font:normal 400 10.6px 'Liberation Sans', sans-serif;line-height:1;color:#0c0c0c;white-space:pre;transform:scaleX(0.92);transform-origin:0 0;text-shadow:0.25px 0 0 #0c0c0c;">9</div>
<svg style="position:absolute;left:0;top:0" width="900" height="713" viewBox="0 0 900 713"><rect x="152.0" y="368.6" width="1.70" height="9.0" fill="#70d070"/><rect x="152.4" y="369.4" width="0.7" height="7.4" fill="#eaffea" fill-opacity="1.0"/><rect x="154.2" y="368.8" width="1.70" height="8.8" fill="#70d070"/><rect x="154.6" y="369.6" width="0.7" height="7.2" fill="#eaffea" fill-opacity="0.5"/><rect x="156.4" y="369.0" width="1.70" height="8.8" fill="#70d070"/><rect x="156.8" y="369.8" width="0.7" height="7.2" fill="#eaffea" fill-opacity="1.0"/><rect x="158.6" y="369.2" width="1.70" height="8.9" fill="#70d070"/><rect x="159.0" y="370.0" width="0.7" height="7.3" fill="#eaffea" fill-opacity="0.5"/><rect x="160.8" y="368.7" width="0.20" height="8.8" fill="#70d070"/><rect x="161.0" y="369.5" width="1.70" height="8.8" fill="#1e3c24"/><rect x="161.4" y="370.3" width="0.7" height="7.2" fill="#3a5c40" fill-opacity="0.9"/><rect x="163.2" y="370.1" width="1.70" height="8.3" fill="#1e3c24"/><rect x="163.6" y="370.9" width="0.7" height="6.7" fill="#3a5c40" fill-opacity="1.0"/><rect x="165.4" y="370.0" width="1.60" height="8.7" fill="#1e3c24"/><rect x="165.8" y="370.8" width="0.7" height="7.1" fill="#3a5c40" fill-opacity="0.7"/><rect x="172.0" y="368.5" width="1.70" height="8.5" fill="#70d070"/><rect x="172.4" y="369.3" width="0.7" height="6.9" fill="#eaffea" fill-opacity="0.9"/><rect x="174.2" y="368.2" width="1.70" height="8.9" fill="#70d070"/><rect x="174.6" y="369.0" width="0.7" height="7.3" fill="#eaffea" fill-opacity="0.7"/><rect x="176.4" y="367.7" width="1.70" height="9.5" fill="#70d070"/><rect x="176.8" y="368.5" width="0.7" height="7.9" fill="#eaffea" fill-opacity="0.5"/><rect x="178.6" y="367.0" width="1.70" height="9.4" fill="#70d070"/><rect x="179.0" y="367.8" width="0.7" height="7.8" fill="#eaffea" fill-opacity="1.0"/><rect x="180.8" y="366.3" width="1.70" height="9.3" fill="#70d070"/><rect x="181.2" y="367.1" width="0.7" height="7.7" fill="#eaffea" fill-opacity="0.7"/><rect x="183.0" y="366.1" width="1.70" height="8.7" fill="#70d070"/><rect x="185.2" y="366.1" width="1.70" height="9.0" fill="#70d070"/><rect x="185.6" y="366.9" width="0.7" height="7.4" fill="#eaffea" fill-opacity="0.7"/><rect x="187.4" y="366.7" width="1.70" height="9.2" fill="#70d070"/><rect x="187.8" y="367.5" width="0.7" height="7.6" fill="#eaffea" fill-opacity="0.5"/><rect x="189.6" y="366.2" width="1.70" height="9.4" fill="#70d070"/><rect x="190.0" y="367.0" width="0.7" height="7.8" fill="#eaffea" fill-opacity="1.0"/><rect x="191.8" y="366.0" width="1.70" height="8.4" fill="#70d070"/><rect x="192.2" y="366.8" width="0.7" height="6.8" fill="#eaffea" fill-opacity="0.5"/><rect x="194.0" y="365.6" width="1.70" height="8.1" fill="#70d070"/><rect x="194.4" y="366.4" width="0.7" height="6.5" fill="#eaffea" fill-opacity="0.7"/><rect x="196.2" y="364.3" width="1.70" height="9.3" fill="#70d070"/><rect x="196.6" y="365.1" width="0.7" height="7.7" fill="#eaffea" fill-opacity="0.5"/><rect x="198.4" y="364.6" width="1.70" height="8.6" fill="#70d070"/><rect x="198.8" y="365.4" width="0.7" height="7.0" fill="#eaffea" fill-opacity="1.0"/><rect x="200.6" y="364.8" width="1.70" height="8.4" fill="#70d070"/><rect x="201.0" y="365.6" width="0.7" height="6.8" fill="#eaffea" fill-opacity="0.9"/><rect x="202.8" y="364.7" width="1.70" height="8.6" fill="#70d070"/><rect x="203.2" y="365.5" width="0.7" height="7.0" fill="#eaffea" fill-opacity="0.7"/><rect x="205.0" y="364.7" width="1.70" height="8.8" fill="#70d070"/><rect x="205.4" y="365.5" width="0.7" height="7.2" fill="#eaffea" fill-opacity="1.0"/><rect x="207.2" y="363.6" width="0.80" height="9.4" fill="#70d070"/><rect x="211.7" y="359.7" width="1.70" height="8.6" fill="#70d070"/><rect x="212.1" y="360.5" width="0.7" height="7.0" fill="#eaffea" fill-opacity="0.5"/><rect x="213.9" y="359.7" width="1.70" height="8.1" fill="#70d070"/><rect x="214.3" y="360.5" width="0.7" height="6.5" fill="#eaffea" fill-opacity="0.9"/><rect x="216.1" y="359.8" width="1.70" height="8.2" fill="#70d070"/><rect x="216.5" y="360.6" width="0.7" height="6.6" fill="#eaffea" fill-opacity="1.0"/><rect x="218.3" y="359.0" width="1.70" height="8.1" fill="#70d070"/><rect x="218.7" y="359.8" width="0.7" height="6.5" fill="#eaffea" fill-opacity="0.5"/><rect x="220.5" y="357.6" width="1.70" height="8.5" fill="#70d070"/><rect x="220.9" y="358.4" width="0.7" height="6.9" fill="#eaffea" fill-opacity="1.0"/><rect x="222.7" y="356.7" width="1.70" height="9.5" fill="#70d070"/><rect x="223.1" y="357.5" width="0.7" height="7.9" fill="#eaffea" fill-opacity="0.7"/><rect x="224.9" y="356.9" width="1.70" height="8.5" fill="#70d070"/><rect x="225.3" y="357.7" width="0.7" height="6.9" fill="#eaffea" fill-opacity="0.9"/><rect x="227.1" y="356.7" width="1.70" height="9.4" fill="#70d070"/><rect x="227.5" y="357.5" width="0.7" height="7.8" fill="#eaffea" fill-opacity="1.0"/><rect x="229.3" y="356.8" width="1.70" height="9.0" fill="#70d070"/><rect x="229.7" y="357.6" width="0.7" height="7.4" fill="#eaffea" fill-opacity="0.7"/><rect x="231.5" y="356.8" width="1.70" height="8.5" fill="#70d070"/><rect x="231.9" y="357.6" width="0.7" height="6.9" fill="#eaffea" fill-opacity="0.7"/><rect x="233.7" y="355.3" width="0.30" height="9.2" fill="#70d070"/><rect x="236.0" y="355.6" width="1.70" height="8.4" fill="#1e3c24"/><rect x="236.4" y="356.4" width="0.7" height="6.8" fill="#3a5c40" fill-opacity="0.9"/><rect x="238.2" y="355.4" width="1.70" height="9.1" fill="#1e3c24"/><rect x="243.0" y="356.3" width="1.70" height="8.3" fill="#70d070"/><rect x="243.4" y="357.1" width="0.7" height="6.7" fill="#eaffea" fill-opacity="0.7"/><rect x="245.2" y="356.8" width="1.70" height="9.5" fill="#70d070"/><rect x="247.4" y="357.3" width="1.70" height="8.3" fill="#70d070"/><rect x="247.8" y="358.1" width="0.7" height="6.7" fill="#eaffea" fill-opacity="0.9"/><rect x="249.6" y="357.4" width="1.70" height="8.9" fill="#70d070"/><rect x="250.0" y="358.2" width="0.7" height="7.3" fill="#eaffea" fill-opacity="0.7"/><rect x="251.8" y="356.2" width="1.70" height="9.0" fill="#70d070"/><rect x="254.0" y="355.9" width="1.70" height="8.7" fill="#70d070"/><rect x="254.4" y="356.7" width="0.7" height="7.1" fill="#eaffea" fill-opacity="0.7"/><rect x="256.2" y="355.3" width="1.70" height="9.1" fill="#70d070"/><rect x="256.6" y="356.1" width="0.7" height="7.5" fill="#eaffea" fill-opacity="1.0"/><rect x="258.4" y="355.0" width="1.70" height="8.2" fill="#70d070"/><rect x="258.8" y="355.8" width="0.7" height="6.6" fill="#eaffea" fill-opacity="0.5"/><rect x="260.6" y="354.8" width="1.70" height="9.2" fill="#70d070"/><rect x="262.8" y="355.9" width="1.70" height="8.8" fill="#70d070"/><rect x="263.2" y="356.7" width="0.7" height="7.2" fill="#eaffea" fill-opacity="1.0"/><rect x="265.0" y="357.3" width="1.70" height="8.2" fill="#70d070"/><rect x="265.4" y="358.1" width="0.7" height="6.6" fill="#eaffea" fill-opacity="0.9"/><rect x="267.2" y="357.3" width="1.70" height="9.2" fill="#70d070"/><rect x="267.6" y="358.1" width="0.7" height="7.6" fill="#eaffea" fill-opacity="0.7"/><rect x="269.4" y="357.0" width="1.70" height="9.1" fill="#70d070"/><rect x="269.8" y="357.8" width="0.7" height="7.5" fill="#eaffea" fill-opacity="0.5"/><rect x="271.6" y="356.1" width="1.70" height="9.1" fill="#70d070"/><rect x="273.8" y="356.0" width="1.70" height="8.8" fill="#70d070"/><rect x="276.0" y="355.2" width="1.70" height="8.2" fill="#70d070"/><rect x="276.4" y="356.0" width="0.7" height="6.6" fill="#eaffea" fill-opacity="0.5"/><rect x="278.2" y="354.8" width="1.70" height="9.2" fill="#70d070"/><rect x="278.6" y="355.6" width="0.7" height="7.6" fill="#eaffea" fill-opacity="0.9"/><rect x="280.4" y="355.4" width="1.70" height="8.8" fill="#70d070"/><rect x="280.8" y="356.2" width="0.7" height="7.2" fill="#eaffea" fill-opacity="0.5"/><rect x="282.6" y="355.7" width="1.70" height="8.8" fill="#70d070"/><rect x="283.0" y="356.5" width="0.7" height="7.2" fill="#eaffea" fill-opacity="0.7"/><rect x="284.8" y="356.5" width="1.70" height="8.7" fill="#70d070"/><rect x="285.2" y="357.3" width="0.7" height="7.1" fill="#eaffea" fill-opacity="1.0"/><rect x="287.0" y="357.3" width="1.70" height="8.8" fill="#70d070"/><rect x="287.4" y="358.1" width="0.7" height="7.2" fill="#eaffea" fill-opacity="0.7"/><rect x="289.2" y="357.3" width="1.70" height="8.7" fill="#70d070"/><rect x="291.4" y="356.6" width="1.70" height="9.4" fill="#70d070"/><rect x="291.8" y="357.4" width="0.7" height="7.8" fill="#eaffea" fill-opacity="0.9"/><rect x="293.6" y="355.9" width="1.70" height="8.2" fill="#70d070"/><rect x="294.0" y="356.7" width="0.7" height="6.6" fill="#eaffea" fill-opacity="1.0"/><rect x="295.8" y="355.4" width="1.70" height="8.3" fill="#70d070"/><rect x="296.2" y="356.2" width="0.7" height="6.7" fill="#eaffea" fill-opacity="1.0"/><rect x="298.0" y="354.5" width="1.70" height="9.1" fill="#70d070"/><rect x="298.4" y="355.3" width="0.7" height="7.5" fill="#eaffea" fill-opacity="0.9"/><rect x="300.2" y="355.0" width="1.70" height="8.7" fill="#70d070"/><rect x="300.6" y="355.8" width="0.7" height="7.1" fill="#eaffea" fill-opacity="1.0"/><rect x="302.4" y="355.5" width="1.70" height="9.5" fill="#70d070"/><rect x="304.6" y="356.6" width="1.70" height="8.8" fill="#70d070"/><rect x="305.0" y="357.4" width="0.7" height="7.2" fill="#eaffea" fill-opacity="0.9"/><rect x="306.8" y="357.1" width="1.70" height="8.5" fill="#70d070"/><rect x="307.2" y="357.9" width="0.7" height="6.9" fill="#eaffea" fill-opacity="0.5"/><rect x="309.0" y="357.1" width="1.70" height="8.5" fill="#70d070"/><rect x="309.4" y="357.9" width="0.7" height="6.9" fill="#eaffea" fill-opacity="1.0"/><rect x="311.2" y="357.3" width="1.70" height="8.3" fill="#70d070"/><rect x="313.4" y="355.5" width="1.70" height="9.4" fill="#70d070"/><rect x="313.8" y="356.3" width="0.7" height="7.8" fill="#eaffea" fill-opacity="0.9"/><rect x="315.6" y="355.4" width="1.70" height="9.0" fill="#70d070"/><rect x="317.8" y="354.9" width="1.70" height="8.8" fill="#70d070"/><rect x="318.2" y="355.7" width="0.7" height="7.2" fill="#eaffea" fill-opacity="0.7"/><rect x="320.0" y="354.7" width="1.70" height="9.0" fill="#70d070"/><rect x="320.4" y="355.5" width="0.7" height="7.4" fill="#eaffea" fill-opacity="1.0"/><rect x="322.2" y="355.8" width="1.70" height="8.1" fill="#70d070"/><rect x="322.6" y="356.6" width="0.7" height="6.5" fill="#eaffea" fill-opacity="0.9"/><rect x="324.4" y="356.9" width="1.70" height="8.7" fill="#70d070"/><rect x="324.8" y="357.7" width="0.7" height="7.1" fill="#eaffea" fill-opacity="0.5"/><rect x="326.6" y="357.3" width="1.70" height="8.2" fill="#70d070"/><rect x="327.0" y="358.1" width="0.7" height="6.6" fill="#eaffea" fill-opacity="0.9"/><rect x="328.8" y="357.8" width="1.70" height="8.4" fill="#70d070"/><rect x="329.2" y="358.6" width="0.7" height="6.8" fill="#eaffea" fill-opacity="0.7"/><rect x="331.0" y="357.1" width="1.70" height="8.3" fill="#70d070"/><rect x="331.4" y="357.9" width="0.7" height="6.7" fill="#eaffea" fill-opacity="0.9"/><rect x="333.2" y="355.9" width="1.70" height="9.5" fill="#70d070"/><rect x="333.6" y="356.7" width="0.7" height="7.9" fill="#eaffea" fill-opacity="1.0"/><rect x="335.4" y="355.6" width="1.70" height="8.3" fill="#70d070"/><rect x="335.8" y="356.4" width="0.7" height="6.7" fill="#eaffea" fill-opacity="0.5"/><rect x="337.6" y="355.2" width="1.70" height="8.6" fill="#70d070"/><rect x="338.0" y="356.0" width="0.7" height="7.0" fill="#eaffea" fill-opacity="0.5"/><rect x="339.8" y="355.2" width="1.70" height="8.3" fill="#70d070"/><rect x="340.2" y="356.0" width="0.7" height="6.7" fill="#eaffea" fill-opacity="0.9"/><rect x="342.0" y="355.8" width="1.70" height="9.0" fill="#70d070"/><rect x="342.4" y="356.6" width="0.7" height="7.4" fill="#eaffea" fill-opacity="0.7"/><rect x="344.2" y="357.2" width="1.70" height="8.0" fill="#70d070"/><rect x="344.6" y="358.0" width="0.7" height="6.4" fill="#eaffea" fill-opacity="0.7"/><rect x="346.4" y="356.7" width="1.70" height="9.0" fill="#70d070"/><rect x="346.8" y="357.5" width="0.7" height="7.4" fill="#eaffea" fill-opacity="0.7"/><rect x="348.6" y="357.8" width="1.70" height="8.1" fill="#70d070"/><rect x="349.0" y="358.6" width="0.7" height="6.5" fill="#eaffea" fill-opacity="0.7"/><rect x="350.8" y="356.4" width="1.70" height="9.4" fill="#70d070"/><rect x="353.0" y="355.6" width="1.70" height="9.4" fill="#70d070"/><rect x="353.4" y="356.4" width="0.7" height="7.8" fill="#eaffea" fill-opacity="0.7"/><rect x="355.2" y="355.6" width="1.70" height="8.1" fill="#70d070"/><rect x="355.6" y="356.4" width="0.7" height="6.5" fill="#eaffea" fill-opacity="0.9"/><rect x="357.4" y="355.4" width="1.70" height="8.1" fill="#70d070"/><rect x="359.6" y="355.2" width="1.40" height="8.6" fill="#70d070"/><rect x="360.0" y="356.0" width="0.7" height="7.0" fill="#eaffea" fill-opacity="0.9"/><rect x="391.0" y="345.7" width="1.70" height="9.3" fill="#70d070"/><rect x="391.4" y="346.5" width="0.7" height="7.7" fill="#eaffea" fill-opacity="0.5"/><rect x="393.2" y="346.5" width="1.70" height="8.7" fill="#70d070"/><rect x="393.6" y="347.3" width="0.7" height="7.1" fill="#eaffea" fill-opacity="0.9"/><rect x="395.4" y="346.6" width="1.70" height="9.3" fill="#70d070"/><rect x="395.8" y="347.4" width="0.7" height="7.7" fill="#eaffea" fill-opacity="0.9"/><rect x="397.6" y="346.6" width="1.70" height="8.9" fill="#70d070"/><rect x="399.8" y="345.7" width="1.70" height="9.2" fill="#70d070"/><rect x="400.2" y="346.5" width="0.7" height="7.6" fill="#eaffea" fill-opacity="0.9"/><rect x="402.0" y="344.5" width="1.70" height="9.0" fill="#70d070"/><rect x="404.2" y="344.6" width="1.70" height="8.1" fill="#70d070"/><rect x="404.6" y="345.4" width="0.7" height="6.5" fill="#eaffea" fill-opacity="0.9"/><rect x="406.4" y="343.5" width="1.70" height="9.2" fill="#70d070"/><rect x="406.8" y="344.3" width="0.7" height="7.6" fill="#eaffea" fill-opacity="1.0"/><rect x="408.6" y="343.9" width="1.70" height="9.1" fill="#70d070"/><rect x="409.0" y="344.7" width="0.7" height="7.5" fill="#eaffea" fill-opacity="1.0"/><rect x="410.8" y="344.7" width="1.70" height="9.1" fill="#70d070"/><rect x="411.2" y="345.5" width="0.7" height="7.5" fill="#eaffea" fill-opacity="0.5"/><rect x="413.0" y="345.7" width="1.70" height="8.7" fill="#70d070"/><rect x="413.4" y="346.5" width="0.7" height="7.1" fill="#eaffea" fill-opacity="1.0"/><rect x="415.2" y="346.6" width="1.70" height="8.1" fill="#70d070"/><rect x="415.6" y="347.4" width="0.7" height="6.5" fill="#eaffea" fill-opacity="0.7"/><rect x="417.4" y="346.1" width="1.70" height="8.9" fill="#70d070"/><rect x="417.8" y="346.9" width="0.7" height="7.3" fill="#eaffea" fill-opacity="0.5"/><rect x="419.6" y="345.1" width="1.70" height="9.0" fill="#70d070"/><rect x="420.0" y="345.9" width="0.7" height="7.4" fill="#eaffea" fill-opacity="0.5"/><rect x="421.8" y="344.6" width="1.70" height="8.7" fill="#70d070"/><rect x="422.2" y="345.4" width="0.7" height="7.1" fill="#eaffea" fill-opacity="1.0"/><rect x="424.0" y="344.0" width="1.70" height="8.5" fill="#70d070"/><rect x="424.4" y="344.8" width="0.7" height="6.9" fill="#eaffea" fill-opacity="0.5"/><rect x="426.2" y="343.3" width="1.70" height="9.2" fill="#70d070"/><rect x="428.4" y="343.8" width="1.60" height="8.3" fill="#70d070"/><rect x="430.0" y="344.4" width="1.70" height="8.8" fill="#50a850"/><rect x="432.2" y="344.9" width="1.70" height="9.3" fill="#50a850"/><rect x="432.6" y="345.7" width="0.7" height="7.7" fill="#a8e0a8" fill-opacity="0.9"/><rect x="434.4" y="345.6" width="1.70" height="8.2" fill="#50a850"/><rect x="436.6" y="345.4" width="1.70" height="8.6" fill="#50a850"/><rect x="437.0" y="346.2" width="0.7" height="7.0" fill="#a8e0a8" fill-opacity="1.0"/><rect x="438.8" y="344.5" width="1.70" height="9.3" fill="#1e3c24"/><rect x="439.2" y="345.3" width="0.7" height="7.7" fill="#3a5c40" fill-opacity="0.9"/><rect x="441.0" y="343.7" width="1.70" height="8.6" fill="#50a850"/><rect x="441.4" y="344.5" width="0.7" height="7.0" fill="#a8e0a8" fill-opacity="1.0"/><rect x="443.2" y="343.3" width="1.70" height="8.1" fill="#50a850"/><rect x="443.6" y="344.1" width="0.7" height="6.5" fill="#a8e0a8" fill-opacity="0.7"/><rect x="445.4" y="343.2" width="1.70" height="8.7" fill="#1e3c24"/><rect x="445.8" y="344.0" width="0.7" height="7.1" fill="#3a5c40" fill-opacity="0.7"/><rect x="447.6" y="342.5" width="1.40" height="9.1" fill="#50a850"/><rect x="448.0" y="343.3" width="0.7" height="7.5" fill="#a8e0a8" fill-opacity="0.9"/><rect x="452.0" y="340.8" width="1.70" height="8.7" fill="#1e3c24"/><rect x="452.4" y="341.6" width="0.7" height="7.1" fill="#3a5c40" fill-opacity="0.7"/><rect x="454.2" y="341.1" width="1.70" height="8.3" fill="#1e3c24"/><rect x="454.6" y="341.9" width="0.7" height="6.7" fill="#3a5c40" fill-opacity="0.7"/><rect x="456.4" y="341.3" width="1.70" height="8.4" fill="#1e3c24"/><rect x="456.8" y="342.1" width="0.7" height="6.8" fill="#3a5c40" fill-opacity="0.7"/><rect x="458.6" y="340.2" width="1.70" height="9.0" fill="#1e3c24"/><rect x="459.0" y="341.0" width="0.7" height="7.4" fill="#3a5c40" fill-opacity="0.5"/><rect x="460.8" y="339.7" width="1.70" height="9.1" fill="#1e3c24"/><rect x="461.2" y="340.5" width="0.7" height="7.5" fill="#3a5c40" fill-opacity="0.9"/><rect x="463.0" y="339.7" width="1.70" height="8.5" fill="#1e3c24"/><rect x="463.4" y="340.5" width="0.7" height="6.9" fill="#3a5c40" fill-opacity="0.9"/><rect x="465.2" y="339.2" width="0.80" height="8.6" fill="#1e3c24"/><rect x="466.0" y="338.8" width="1.70" height="8.1" fill="#70d070"/><rect x="466.4" y="339.6" width="0.7" height="6.5" fill="#eaffea" fill-opacity="0.7"/><rect x="468.2" y="339.1" width="1.70" height="9.3" fill="#70d070"/><rect x="468.6" y="339.9" width="0.7" height="7.7" fill="#eaffea" fill-opacity="0.7"/><rect x="470.4" y="339.5" width="1.70" height="8.6" fill="#70d070"/><rect x="470.8" y="340.3" width="0.7" height="7.0" fill="#eaffea" fill-opacity="1.0"/><rect x="472.6" y="338.5" width="1.70" height="9.2" fill="#70d070"/><rect x="474.8" y="337.4" width="1.70" height="9.4" fill="#50a850"/><rect x="475.2" y="338.2" width="0.7" height="7.8" fill="#a8e0a8" fill-opacity="0.5"/><rect x="477.0" y="336.4" width="1.70" height="8.2" fill="#50a850"/><rect x="477.4" y="337.2" width="0.7" height="6.6" fill="#a8e0a8" fill-opacity="1.0"/><rect x="479.2" y="336.1" width="1.70" height="9.1" fill="#70d070"/><rect x="479.6" y="336.9" width="0.7" height="7.5" fill="#eaffea" fill-opacity="1.0"/><rect x="481.4" y="337.2" width="1.70" height="8.1" fill="#50a850"/><rect x="481.8" y="338.0" width="0.7" height="6.5" fill="#a8e0a8" fill-opacity="0.9"/><rect x="483.6" y="337.3" width="1.70" height="9.1" fill="#70d070"/><rect x="484.0" y="338.1" width="0.7" height="7.5" fill="#eaffea" fill-opacity="0.7"/><rect x="485.8" y="338.0" width="0.20" height="8.3" fill="#70d070"/><rect x="486.0" y="336.4" width="1.70" height="8.5" fill="#1e3c24"/><rect x="486.4" y="337.2" width="0.7" height="6.9" fill="#3a5c40" fill-opacity="0.7"/><rect x="488.2" y="337.3" width="1.70" height="8.7" fill="#1e3c24"/><rect x="488.6" y="338.1" width="0.7" height="7.1" fill="#3a5c40" fill-opacity="0.9"/><rect x="490.4" y="337.0" width="1.70" height="9.0" fill="#1e3c24"/><rect x="490.8" y="337.8" width="0.7" height="7.4" fill="#3a5c40" fill-opacity="0.9"/><rect x="492.6" y="337.2" width="1.40" height="8.6" fill="#1e3c24"/><rect x="493.0" y="338.0" width="0.7" height="7.0" fill="#3a5c40" fill-opacity="0.5"/><rect x="499.0" y="329.8" width="1.70" height="8.1" fill="#70d070"/><rect x="499.4" y="330.6" width="0.7" height="6.5" fill="#eaffea" fill-opacity="0.5"/><rect x="501.2" y="330.7" width="1.70" height="8.0" fill="#70d070"/><rect x="501.6" y="331.5" width="0.7" height="6.4" fill="#eaffea" fill-opacity="1.0"/><rect x="503.4" y="331.3" width="1.70" height="8.5" fill="#70d070"/><rect x="505.6" y="330.3" width="1.70" height="9.1" fill="#70d070"/><rect x="506.0" y="331.1" width="0.7" height="7.5" fill="#eaffea" fill-opacity="0.5"/><rect x="507.8" y="330.4" width="1.70" height="8.7" fill="#70d070"/><rect x="510.0" y="329.0" width="1.70" height="9.4" fill="#70d070"/><rect x="510.4" y="329.8" width="0.7" height="7.8" fill="#eaffea" fill-opacity="1.0"/><rect x="512.2" y="328.7" width="1.70" height="8.1" fill="#70d070"/><rect x="512.6" y="329.5" width="0.7" height="6.5" fill="#eaffea" fill-opacity="0.5"/><rect x="514.4" y="328.7" width="1.70" height="8.5" fill="#70d070"/><rect x="514.8" y="329.5" width="0.7" height="6.9" fill="#eaffea" fill-opacity="1.0"/><rect x="516.6" y="328.9" width="1.70" height="8.3" fill="#70d070"/><rect x="518.8" y="329.1" width="1.70" height="9.0" fill="#70d070"/><rect x="519.2" y="329.9" width="0.7" height="7.4" fill="#eaffea" fill-opacity="0.7"/><rect x="521.0" y="330.6" width="1.70" height="8.2" fill="#70d070"/><rect x="521.4" y="331.4" width="0.7" height="6.6" fill="#eaffea" fill-opacity="1.0"/><rect x="523.2" y="331.4" width="1.70" height="8.2" fill="#70d070"/><rect x="525.4" y="330.4" width="1.70" height="9.2" fill="#70d070"/><rect x="527.6" y="329.8" width="1.70" height="8.7" fill="#70d070"/><rect x="528.0" y="330.6" width="0.7" height="7.1" fill="#eaffea" fill-opacity="0.5"/><rect x="529.8" y="328.9" width="1.70" height="9.3" fill="#70d070"/><rect x="530.2" y="329.7" width="0.7" height="7.7" fill="#eaffea" fill-opacity="0.5"/><rect x="532.0" y="328.8" width="1.70" height="8.6" fill="#70d070"/><rect x="532.4" y="329.6" width="0.7" height="7.0" fill="#eaffea" fill-opacity="0.5"/><rect x="534.2" y="328.9" width="1.70" height="8.4" fill="#70d070"/><rect x="534.6" y="329.7" width="0.7" height="6.8" fill="#eaffea" fill-opacity="0.7"/><rect x="536.4" y="328.3" width="1.70" height="9.4" fill="#70d070"/><rect x="536.8" y="329.1" width="0.7" height="7.8" fill="#eaffea" fill-opacity="0.7"/><rect x="538.6" y="329.2" width="1.70" height="9.1" fill="#70d070"/><rect x="539.0" y="330.0" width="0.7" height="7.5" fill="#eaffea" fill-opacity="1.0"/><rect x="540.8" y="330.1" width="1.70" height="8.7" fill="#70d070"/><rect x="543.0" y="330.9" width="1.70" height="8.4" fill="#70d070"/><rect x="543.4" y="331.7" width="0.7" height="6.8" fill="#eaffea" fill-opacity="0.5"/><rect x="545.2" y="331.1" width="1.70" height="8.0" fill="#70d070"/><rect x="547.4" y="330.6" width="1.70" height="8.2" fill="#70d070"/><rect x="547.8" y="331.4" width="0.7" height="6.6" fill="#eaffea" fill-opacity="0.7"/><rect x="549.6" y="329.5" width="1.70" height="8.9" fill="#70d070"/><rect x="550.0" y="330.3" width="0.7" height="7.3" fill="#eaffea" fill-opacity="0.5"/><rect x="551.8" y="328.8" width="1.70" height="8.1" fill="#70d070"/><rect x="552.2" y="329.6" width="0.7" height="6.5" fill="#eaffea" fill-opacity="0.7"/><rect x="554.0" y="328.7" width="1.70" height="8.2" fill="#70d070"/><rect x="554.4" y="329.5" width="0.7" height="6.6" fill="#eaffea" fill-opacity="1.0"/><rect x="556.2" y="328.3" width="1.70" height="9.5" fill="#70d070"/><rect x="559.0" y="320.4" width="1.70" height="8.7" fill="#1e3c24"/><rect x="561.2" y="320.7" width="1.70" height="9.2" fill="#1e3c24"/><rect x="561.6" y="321.5" width="0.7" height="7.6" fill="#3a5c40" fill-opacity="0.7"/><rect x="563.4" y="321.1" width="1.70" height="8.6" fill="#1e3c24"/><rect x="563.8" y="321.9" width="0.7" height="7.0" fill="#3a5c40" fill-opacity="0.9"/><rect x="565.6" y="320.7" width="1.70" height="8.4" fill="#1e3c24"/><rect x="566.0" y="321.5" width="0.7" height="6.8" fill="#3a5c40" fill-opacity="0.9"/><rect x="567.8" y="319.8" width="1.70" height="9.5" fill="#1e3c24"/><rect x="568.2" y="320.6" width="0.7" height="7.9" fill="#3a5c40" fill-opacity="0.9"/><rect x="570.0" y="319.4" width="1.70" height="8.7" fill="#1e3c24"/><rect x="570.4" y="320.2" width="0.7" height="7.1" fill="#3a5c40" fill-opacity="1.0"/><rect x="572.2" y="319.3" width="1.70" height="9.3" fill="#1e3c24"/><rect x="574.4" y="319.5" width="1.70" height="8.2" fill="#1e3c24"/><rect x="574.8" y="320.3" width="0.7" height="6.6" fill="#3a5c40" fill-opacity="0.9"/><rect x="576.6" y="319.3" width="1.40" height="9.3" fill="#1e3c24"/><rect x="577.0" y="320.1" width="0.7" height="7.7" fill="#3a5c40" fill-opacity="0.7"/><rect x="578.0" y="319.6" width="1.70" height="8.0" fill="#70d070"/><rect x="578.4" y="320.4" width="0.7" height="6.4" fill="#eaffea" fill-opacity="0.7"/><rect x="580.2" y="320.6" width="1.70" height="8.2" fill="#70d070"/><rect x="580.6" y="321.4" width="0.7" height="6.6" fill="#eaffea" fill-opacity="0.7"/><rect x="582.4" y="321.0" width="1.70" height="9.4" fill="#70d070"/><rect x="584.6" y="320.8" width="1.70" height="8.6" fill="#70d070"/><rect x="585.0" y="321.6" width="0.7" height="7.0" fill="#eaffea" fill-opacity="1.0"/><rect x="586.8" y="319.8" width="1.70" height="8.8" fill="#70d070"/><rect x="587.2" y="320.6" width="0.7" height="7.2" fill="#eaffea" fill-opacity="1.0"/><rect x="589.0" y="318.5" width="1.70" height="8.2" fill="#70d070"/><rect x="589.4" y="319.3" width="0.7" height="6.6" fill="#eaffea" fill-opacity="0.9"/><rect x="591.2" y="316.7" width="1.70" height="9.5" fill="#70d070"/><rect x="591.6" y="317.5" width="0.7" height="7.9" fill="#eaffea" fill-opacity="0.5"/><rect x="593.4" y="317.1" width="1.70" height="8.8" fill="#70d070"/><rect x="593.8" y="317.9" width="0.7" height="7.2" fill="#eaffea" fill-opacity="0.5"/><rect x="595.6" y="318.2" width="1.70" height="9.2" fill="#70d070"/><rect x="596.0" y="319.0" width="0.7" height="7.6" fill="#eaffea" fill-opacity="0.5"/><rect x="597.8" y="319.8" width="1.70" height="8.0" fill="#70d070"/><rect x="600.0" y="321.1" width="1.70" height="8.6" fill="#70d070"/><rect x="602.2" y="321.2" width="1.70" height="8.0" fill="#70d070"/><rect x="602.6" y="322.0" width="0.7" height="6.4" fill="#eaffea" fill-opacity="0.5"/><rect x="604.4" y="320.6" width="1.70" height="8.6" fill="#70d070"/><rect x="604.8" y="321.4" width="0.7" height="7.0" fill="#eaffea" fill-opacity="0.9"/><rect x="606.6" y="319.1" width="1.70" height="8.3" fill="#70d070"/><rect x="607.0" y="319.9" width="0.7" height="6.7" fill="#eaffea" fill-opacity="0.5"/><rect x="608.8" y="317.6" width="1.70" height="9.5" fill="#70d070"/><rect x="609.2" y="318.4" width="0.7" height="7.9" fill="#eaffea" fill-opacity="0.9"/><rect x="611.0" y="316.5" width="1.70" height="9.4" fill="#70d070"/><rect x="611.4" y="317.3" width="0.7" height="7.8" fill="#eaffea" fill-opacity="0.5"/><rect x="613.2" y="317.5" width="1.70" height="9.0" fill="#70d070"/><rect x="615.4" y="318.9" width="1.70" height="8.9" fill="#70d070"/><rect x="615.8" y="319.7" width="0.7" height="7.3" fill="#eaffea" fill-opacity="0.9"/><rect x="617.6" y="320.1" width="1.70" height="8.3" fill="#70d070"/><rect x="618.0" y="320.9" width="0.7" height="6.7" fill="#eaffea" fill-opacity="0.9"/><rect x="619.8" y="321.0" width="1.70" height="8.4" fill="#70d070"/><rect x="620.2" y="321.8" width="0.7" height="6.8" fill="#eaffea" fill-opacity="0.9"/><rect x="622.0" y="320.8" width="1.70" height="9.1" fill="#70d070"/><rect x="622.4" y="321.6" width="0.7" height="7.5" fill="#eaffea" fill-opacity="0.7"/><rect x="624.2" y="320.0" width="1.70" height="8.8" fill="#70d070"/><rect x="624.6" y="320.8" width="0.7" height="7.2" fill="#eaffea" fill-opacity="0.7"/><rect x="626.0" y="318.7" width="1.70" height="8.4" fill="#1e3c24"/><rect x="626.4" y="319.5" width="0.7" height="6.8" fill="#3a5c40" fill-opacity="0.7"/><rect x="628.2" y="318.9" width="1.70" height="8.0" fill="#1e3c24"/><rect x="628.6" y="319.7" width="0.7" height="6.4" fill="#3a5c40" fill-opacity="0.5"/><rect x="630.4" y="318.5" width="1.60" height="8.9" fill="#1e3c24"/><rect x="632.0" y="318.9" width="1.70" height="8.6" fill="#70d070"/><rect x="632.4" y="319.7" width="0.7" height="7.0" fill="#eaffea" fill-opacity="0.7"/><rect x="634.2" y="319.7" width="1.70" height="8.7" fill="#70d070"/><rect x="634.6" y="320.5" width="0.7" height="7.1" fill="#eaffea" fill-opacity="1.0"/><rect x="636.4" y="320.0" width="1.70" height="9.4" fill="#70d070"/><rect x="636.8" y="320.8" width="0.7" height="7.8" fill="#eaffea" fill-opacity="1.0"/><rect x="638.6" y="320.4" width="1.70" height="8.6" fill="#70d070"/><rect x="640.8" y="319.0" width="1.70" height="9.5" fill="#70d070"/><rect x="641.2" y="319.8" width="0.7" height="7.9" fill="#eaffea" fill-opacity="1.0"/><rect x="643.0" y="318.0" width="1.70" height="8.7" fill="#70d070"/><rect x="645.2" y="316.3" width="1.70" height="9.2" fill="#70d070"/><rect x="647.4" y="316.5" width="1.70" height="9.1" fill="#70d070"/><rect x="647.8" y="317.3" width="0.7" height="7.5" fill="#eaffea" fill-opacity="0.7"/><rect x="649.6" y="317.9" width="1.70" height="8.4" fill="#70d070"/><rect x="651.8" y="319.1" width="1.70" height="8.9" fill="#70d070"/><rect x="652.2" y="319.9" width="0.7" height="7.3" fill="#eaffea" fill-opacity="0.7"/><rect x="654.0" y="320.3" width="1.70" height="8.2" fill="#70d070"/><rect x="656.2" y="321.1" width="1.70" height="8.3" fill="#70d070"/><rect x="656.6" y="321.9" width="0.7" height="6.7" fill="#eaffea" fill-opacity="1.0"/><rect x="658.4" y="319.3" width="1.70" height="9.3" fill="#70d070"/><rect x="660.6" y="318.4" width="1.70" height="9.0" fill="#70d070"/><rect x="662.8" y="317.0" width="1.70" height="9.3" fill="#70d070"/><rect x="663.2" y="317.8" width="0.7" height="7.7" fill="#eaffea" fill-opacity="0.7"/><rect x="665.0" y="316.9" width="1.70" height="8.9" fill="#70d070"/><rect x="665.4" y="317.7" width="0.7" height="7.3" fill="#eaffea" fill-opacity="1.0"/><rect x="667.2" y="316.6" width="1.70" height="9.1" fill="#70d070"/><rect x="667.6" y="317.4" width="0.7" height="7.5" fill="#eaffea" fill-opacity="0.7"/><rect x="669.4" y="318.3" width="1.70" height="9.3" fill="#70d070"/><rect x="671.6" y="319.6" width="1.70" height="9.1" fill="#70d070"/><rect x="672.0" y="320.4" width="0.7" height="7.5" fill="#eaffea" fill-opacity="0.7"/><rect x="673.8" y="320.5" width="1.70" height="8.8" fill="#70d070"/><rect x="676.0" y="320.2" width="1.70" height="9.0" fill="#70d070"/><rect x="676.4" y="321.0" width="0.7" height="7.4" fill="#eaffea" fill-opacity="1.0"/><rect x="678.2" y="319.3" width="1.70" height="8.8" fill="#70d070"/><rect x="678.6" y="320.1" width="0.7" height="7.2" fill="#eaffea" fill-opacity="0.5"/><rect x="680.4" y="318.3" width="1.70" height="8.3" fill="#70d070"/><rect x="680.8" y="319.1" width="0.7" height="6.7" fill="#eaffea" fill-opacity="0.5"/><rect x="682.6" y="316.3" width="1.70" height="9.2" fill="#70d070"/><rect x="683.0" y="317.1" width="0.7" height="7.6" fill="#eaffea" fill-opacity="0.5"/><rect x="684.8" y="316.5" width="1.70" height="9.3" fill="#70d070"/><rect x="685.2" y="317.3" width="0.7" height="7.7" fill="#eaffea" fill-opacity="0.5"/><rect x="687.0" y="318.1" width="1.70" height="8.1" fill="#70d070"/><rect x="689.2" y="318.8" width="1.70" height="8.9" fill="#70d070"/><rect x="689.6" y="319.6" width="0.7" height="7.3" fill="#eaffea" fill-opacity="0.5"/><rect x="691.4" y="320.7" width="1.70" height="8.1" fill="#70d070"/><rect x="691.8" y="321.5" width="0.7" height="6.5" fill="#eaffea" fill-opacity="0.5"/><rect x="693.6" y="320.1" width="1.40" height="9.4" fill="#70d070"/><rect x="694.0" y="320.9" width="0.7" height="7.8" fill="#eaffea" fill-opacity="0.9"/><rect x="695.0" y="317.8" width="1.70" height="8.9" fill="#1e3c24"/><rect x="695.4" y="318.6" width="0.7" height="7.3" fill="#3a5c40" fill-opacity="0.5"/><rect x="697.2" y="318.5" width="1.70" height="8.5" fill="#1e3c24"/><rect x="697.6" y="319.3" width="0.7" height="6.9" fill="#3a5c40" fill-opacity="1.0"/><rect x="699.4" y="318.9" width="1.70" height="8.7" fill="#1e3c24"/><rect x="699.8" y="319.7" width="0.7" height="7.1" fill="#3a5c40" fill-opacity="0.5"/><rect x="701.6" y="318.8" width="1.70" height="8.7" fill="#1e3c24"/><rect x="702.0" y="319.6" width="0.7" height="7.1" fill="#3a5c40" fill-opacity="0.5"/><rect x="703.8" y="318.7" width="1.70" height="8.4" fill="#1e3c24"/><rect x="704.2" y="319.5" width="0.7" height="6.8" fill="#3a5c40" fill-opacity="1.0"/><rect x="706.0" y="317.8" width="1.70" height="9.0" fill="#1e3c24"/><rect x="708.2" y="317.3" width="1.70" height="8.8" fill="#1e3c24"/><rect x="708.6" y="318.1" width="0.7" height="7.2" fill="#3a5c40" fill-opacity="0.7"/><rect x="710.4" y="317.7" width="1.70" height="9.3" fill="#1e3c24"/><rect x="710.8" y="318.5" width="0.7" height="7.7" fill="#3a5c40" fill-opacity="1.0"/><rect x="712.6" y="318.1" width="1.70" height="9.3" fill="#1e3c24"/><rect x="713.0" y="318.9" width="0.7" height="7.7" fill="#3a5c40" fill-opacity="0.9"/><rect x="714.8" y="318.1" width="0.20" height="9.3" fill="#1e3c24"/><rect x="715.0" y="317.8" width="1.70" height="9.4" fill="#70d070"/><rect x="715.4" y="318.6" width="0.7" height="7.8" fill="#eaffea" fill-opacity="0.5"/><rect x="717.2" y="320.0" width="1.70" height="8.0" fill="#70d070"/><rect x="717.6" y="320.8" width="0.7" height="6.4" fill="#eaffea" fill-opacity="0.9"/><rect x="719.4" y="320.4" width="1.70" height="8.3" fill="#70d070"/><rect x="719.8" y="321.2" width="0.7" height="6.7" fill="#eaffea" fill-opacity="1.0"/><rect x="721.6" y="320.1" width="1.70" height="8.0" fill="#70d070"/><rect x="722.0" y="320.9" width="0.7" height="6.4" fill="#eaffea" fill-opacity="0.9"/><rect x="723.8" y="318.9" width="1.70" height="8.0" fill="#70d070"/><rect x="724.2" y="319.7" width="0.7" height="6.4" fill="#eaffea" fill-opacity="1.0"/><rect x="726.0" y="317.9" width="1.70" height="8.1" fill="#70d070"/><rect x="726.4" y="318.7" width="0.7" height="6.5" fill="#eaffea" fill-opacity="0.7"/><rect x="728.2" y="316.7" width="1.70" height="8.8" fill="#70d070"/><rect x="728.6" y="317.5" width="0.7" height="7.2" fill="#eaffea" fill-opacity="0.5"/><rect x="730.4" y="316.6" width="1.70" height="8.2" fill="#70d070"/><rect x="730.8" y="317.4" width="0.7" height="6.6" fill="#eaffea" fill-opacity="1.0"/><rect x="732.6" y="317.7" width="1.70" height="8.4" fill="#70d070"/><rect x="733.0" y="318.5" width="0.7" height="6.8" fill="#eaffea" fill-opacity="1.0"/><rect x="734.8" y="319.1" width="1.70" height="8.4" fill="#70d070"/><rect x="735.2" y="319.9" width="0.7" height="6.8" fill="#eaffea" fill-opacity="0.7"/><rect x="737.0" y="320.0" width="1.70" height="8.4" fill="#70d070"/><rect x="737.4" y="320.8" width="0.7" height="6.8" fill="#eaffea" fill-opacity="0.7"/><rect x="739.2" y="320.4" width="1.70" height="8.9" fill="#70d070"/><rect x="739.6" y="321.2" width="0.7" height="7.3" fill="#eaffea" fill-opacity="0.7"/><rect x="741.4" y="319.3" width="1.70" height="8.6" fill="#70d070"/><rect x="741.8" y="320.1" width="0.7" height="7.0" fill="#eaffea" fill-opacity="1.0"/><rect x="743.6" y="318.4" width="1.70" height="8.8" fill="#70d070"/><rect x="744.0" y="319.2" width="0.7" height="7.2" fill="#eaffea" fill-opacity="1.0"/><rect x="745.8" y="316.8" width="1.70" height="8.7" fill="#70d070"/><rect x="746.2" y="317.6" width="0.7" height="7.1" fill="#eaffea" fill-opacity="0.7"/><rect x="748.0" y="317.0" width="1.70" height="8.0" fill="#70d070"/><rect x="748.4" y="317.8" width="0.7" height="6.4" fill="#eaffea" fill-opacity="0.5"/><rect x="750.2" y="316.6" width="1.70" height="9.5" fill="#70d070"/><rect x="750.6" y="317.4" width="0.7" height="7.9" fill="#eaffea" fill-opacity="0.7"/><rect x="752.4" y="317.5" width="1.70" height="9.2" fill="#70d070"/><rect x="754.6" y="318.8" width="1.70" height="9.4" fill="#70d070"/><rect x="755.0" y="319.6" width="0.7" height="7.8" fill="#eaffea" fill-opacity="0.5"/><rect x="756.8" y="320.1" width="1.70" height="9.2" fill="#70d070"/><rect x="757.2" y="320.9" width="0.7" height="7.6" fill="#eaffea" fill-opacity="0.7"/><rect x="759.0" y="320.2" width="1.70" height="9.3" fill="#70d070"/><rect x="759.4" y="321.0" width="0.7" height="7.7" fill="#eaffea" fill-opacity="0.5"/><rect x="761.2" y="319.0" width="1.70" height="8.3" fill="#70d070"/><rect x="761.6" y="319.8" width="0.7" height="6.7" fill="#eaffea" fill-opacity="0.9"/><rect x="763.4" y="318.2" width="1.70" height="8.4" fill="#70d070"/><rect x="763.8" y="319.0" width="0.7" height="6.8" fill="#eaffea" fill-opacity="1.0"/><rect x="765.6" y="316.8" width="1.70" height="8.2" fill="#70d070"/><rect x="767.8" y="316.8" width="1.70" height="8.3" fill="#70d070"/><rect x="768.2" y="317.6" width="0.7" height="6.7" fill="#eaffea" fill-opacity="0.7"/><rect x="770.0" y="316.9" width="1.00" height="8.7" fill="#70d070"/><rect x="771.0" y="323.7" width="1.70" height="8.3" fill="#1e3c24"/><rect x="771.4" y="324.5" width="0.7" height="6.7" fill="#3a5c40" fill-opacity="0.9"/><rect x="773.2" y="323.8" width="1.70" height="9.1" fill="#1e3c24"/><rect x="773.6" y="324.6" width="0.7" height="7.5" fill="#3a5c40" fill-opacity="0.7"/><rect x="775.4" y="323.7" width="1.70" height="8.3" fill="#1e3c24"/><rect x="777.6" y="323.0" width="0.40" height="9.4" fill="#1e3c24"/><rect x="778.7" y="317.2" width="1.70" height="9.5" fill="#70d070"/><rect x="779.1" y="318.0" width="0.7" height="7.9" fill="#eaffea" fill-opacity="0.7"/><rect x="780.9" y="318.1" width="1.70" height="9.0" fill="#70d070"/><rect x="781.3" y="318.9" width="0.7" height="7.4" fill="#eaffea" fill-opacity="0.9"/><rect x="783.1" y="319.2" width="1.70" height="8.0" fill="#70d070"/><rect x="785.3" y="318.1" width="1.70" height="9.5" fill="#70d070"/><rect x="785.7" y="318.9" width="0.7" height="7.9" fill="#eaffea" fill-opacity="1.0"/><rect x="787.5" y="318.0" width="1.70" height="8.6" fill="#70d070"/><rect x="787.9" y="318.8" width="0.7" height="7.0" fill="#eaffea" fill-opacity="0.5"/><rect x="789.7" y="317.0" width="1.70" height="9.0" fill="#70d070"/><rect x="791.9" y="316.3" width="1.70" height="9.3" fill="#70d070"/><rect x="792.3" y="317.1" width="0.7" height="7.7" fill="#eaffea" fill-opacity="0.9"/><rect x="794.1" y="316.6" width="1.70" height="8.7" fill="#70d070"/><rect x="794.5" y="317.4" width="0.7" height="7.1" fill="#eaffea" fill-opacity="1.0"/><rect x="796.3" y="317.0" width="1.70" height="8.6" fill="#70d070"/><rect x="796.7" y="317.8" width="0.7" height="7.0" fill="#eaffea" fill-opacity="0.9"/><rect x="798.5" y="317.9" width="1.70" height="8.7" fill="#70d070"/><rect x="798.9" y="318.7" width="0.7" height="7.1" fill="#eaffea" fill-opacity="0.5"/><rect x="800.7" y="318.5" width="1.70" height="9.3" fill="#70d070"/><rect x="802.9" y="318.2" width="1.70" height="9.2" fill="#70d070"/><rect x="805.1" y="318.4" width="1.70" height="8.3" fill="#70d070"/><rect x="805.5" y="319.2" width="0.7" height="6.7" fill="#eaffea" fill-opacity="0.9"/><rect x="807.3" y="317.3" width="1.70" height="8.9" fill="#70d070"/><rect x="807.7" y="318.1" width="0.7" height="7.3" fill="#eaffea" fill-opacity="0.5"/><rect x="809.5" y="316.6" width="1.70" height="9.2" fill="#70d070"/><rect x="809.9" y="317.4" width="0.7" height="7.6" fill="#eaffea" fill-opacity="0.5"/><rect x="811.7" y="316.0" width="1.70" height="9.5" fill="#70d070"/><rect x="812.1" y="316.8" width="0.7" height="7.9" fill="#eaffea" fill-opacity="1.0"/><rect x="813.9" y="316.6" width="1.70" height="9.0" fill="#70d070"/><rect x="814.3" y="317.4" width="0.7" height="7.4" fill="#eaffea" fill-opacity="0.5"/><rect x="816.1" y="317.1" width="1.70" height="8.6" fill="#70d070"/><rect x="816.5" y="317.9" width="0.7" height="7.0" fill="#eaffea" fill-opacity="0.7"/><rect x="818.3" y="318.1" width="1.70" height="8.5" fill="#70d070"/><rect x="818.7" y="318.9" width="0.7" height="6.9" fill="#eaffea" fill-opacity="0.9"/><rect x="820.5" y="319.1" width="1.70" height="8.7" fill="#70d070"/><rect x="820.9" y="319.9" width="0.7" height="7.1" fill="#eaffea" fill-opacity="1.0"/><rect x="822.7" y="318.8" width="1.70" height="8.7" fill="#70d070"/><rect x="823.1" y="319.6" width="0.7" height="7.1" fill="#eaffea" fill-opacity="0.9"/><rect x="824.9" y="317.8" width="1.10" height="9.0" fill="#70d070"/><rect x="826.0" y="317.8" width="1.70" height="9.1" fill="#1e3c24"/><rect x="826.4" y="318.6" width="0.7" height="7.5" fill="#3a5c40" fill-opacity="0.5"/><rect x="828.2" y="318.2" width="1.70" height="8.6" fill="#50a850"/><rect x="828.6" y="319.0" width="0.7" height="7.0" fill="#a8e0a8" fill-opacity="0.5"/><rect x="830.4" y="318.5" width="1.70" height="9.2" fill="#1e3c24"/><rect x="830.8" y="319.3" width="0.7" height="7.6" fill="#3a5c40" fill-opacity="0.7"/><rect x="832.6" y="318.8" width="1.70" height="8.1" fill="#1e3c24"/><rect x="834.8" y="318.1" width="1.70" height="8.1" fill="#1e3c24"/><rect x="835.2" y="318.9" width="0.7" height="6.5" fill="#3a5c40" fill-opacity="0.7"/><rect x="837.0" y="317.3" width="1.70" height="8.9" fill="#1e3c24"/><rect x="837.4" y="318.1" width="0.7" height="7.3" fill="#3a5c40" fill-opacity="1.0"/><rect x="839.2" y="316.6" width="1.70" height="8.9" fill="#1e3c24"/><rect x="839.6" y="317.4" width="0.7" height="7.3" fill="#3a5c40" fill-opacity="0.9"/><rect x="841.4" y="317.2" width="1.70" height="8.3" fill="#1e3c24"/><rect x="841.8" y="318.0" width="0.7" height="6.7" fill="#3a5c40" fill-opacity="0.9"/><rect x="843.6" y="317.9" width="1.70" height="8.1" fill="#50a850"/><rect x="845.8" y="317.7" width="1.70" height="8.7" fill="#50a850"/><rect x="846.2" y="318.5" width="0.7" height="7.1" fill="#a8e0a8" fill-opacity="1.0"/><rect x="848.0" y="318.6" width="1.70" height="8.8" fill="#1e3c24"/><rect x="848.4" y="319.4" width="0.7" height="7.2" fill="#3a5c40" fill-opacity="0.9"/><rect x="850.2" y="318.6" width="1.70" height="8.7" fill="#1e3c24"/><rect x="852.4" y="317.9" width="1.70" height="8.9" fill="#1e3c24"/><rect x="852.8" y="318.7" width="0.7" height="7.3" fill="#3a5c40" fill-opacity="0.9"/><rect x="854.6" y="317.5" width="1.70" height="9.0" fill="#1e3c24"/><rect x="856.8" y="317.6" width="1.70" height="8.1" fill="#1e3c24"/><rect x="857.2" y="318.4" width="0.7" height="6.5" fill="#3a5c40" fill-opacity="1.0"/><rect x="859.0" y="316.5" width="1.70" height="9.5" fill="#1e3c24"/><rect x="861.2" y="317.4" width="1.70" height="8.2" fill="#1e3c24"/><rect x="861.6" y="318.2" width="0.7" height="6.6" fill="#3a5c40" fill-opacity="0.5"/><rect x="863.4" y="317.8" width="1.70" height="8.5" fill="#1e3c24"/><rect x="863.8" y="318.6" width="0.7" height="6.9" fill="#3a5c40" fill-opacity="0.9"/><rect x="865.6" y="318.2" width="1.70" height="8.1" fill="#1e3c24"/><rect x="866.0" y="319.0" width="0.7" height="6.5" fill="#3a5c40" fill-opacity="0.7"/><rect x="867.8" y="318.7" width="1.20" height="8.4" fill="#1e3c24"/><rect x="868.2" y="319.5" width="0.7" height="6.8" fill="#3a5c40" fill-opacity="0.9"/><rect x="560.0" y="346.0" width="1.70" height="7.5" fill="#36223a"/><rect x="560.4" y="346.8" width="0.7" height="5.9" fill="#584058" fill-opacity="0.7"/><rect x="562.2" y="346.8" width="1.70" height="7.1" fill="#36223a"/><rect x="564.4" y="346.5" width="1.70" height="7.6" fill="#36223a"/><rect x="564.8" y="347.3" width="0.7" height="6.0" fill="#584058" fill-opacity="0.5"/><rect x="566.6" y="346.1" width="1.70" height="7.3" fill="#36223a"/><rect x="568.8" y="345.6" width="1.70" height="8.2" fill="#36223a"/><rect x="571.0" y="345.1" width="1.70" height="7.9" fill="#36223a"/><rect x="571.4" y="345.9" width="0.7" height="6.3" fill="#584058" fill-opacity="1.0"/><rect x="573.2" y="345.0" width="1.70" height="7.7" fill="#36223a"/><rect x="573.6" y="345.8" width="0.7" height="6.1" fill="#584058" fill-opacity="1.0"/><rect x="575.4" y="345.3" width="1.70" height="7.6" fill="#36223a"/><rect x="575.8" y="346.1" width="0.7" height="6.0" fill="#584058" fill-opacity="1.0"/><rect x="577.6" y="345.5" width="1.70" height="8.2" fill="#36223a"/><rect x="578.0" y="346.3" width="0.7" height="6.6" fill="#584058" fill-opacity="0.7"/><rect x="579.8" y="346.2" width="1.70" height="7.1" fill="#36223a"/><rect x="580.2" y="347.0" width="0.7" height="5.5" fill="#584058" fill-opacity="1.0"/><rect x="582.0" y="345.6" width="1.70" height="8.2" fill="#a06a78"/><rect x="582.4" y="346.4" width="0.7" height="6.6" fill="#d8b0b8" fill-opacity="0.5"/><rect x="584.2" y="346.2" width="1.70" height="7.9" fill="#36223a"/><rect x="586.4" y="346.8" width="1.70" height="7.2" fill="#a06a78"/><rect x="586.8" y="347.6" width="0.7" height="5.6" fill="#d8b0b8" fill-opacity="0.9"/><rect x="588.6" y="346.5" width="1.70" height="7.0" fill="#a06a78"/><rect x="589.0" y="347.3" width="0.7" height="5.4" fill="#d8b0b8" fill-opacity="1.0"/><rect x="590.8" y="345.5" width="1.70" height="7.4" fill="#36223a"/><rect x="591.2" y="346.3" width="0.7" height="5.8" fill="#584058" fill-opacity="0.5"/><rect x="593.0" y="344.2" width="1.70" height="8.2" fill="#36223a"/><rect x="593.4" y="345.0" width="0.7" height="6.6" fill="#584058" fill-opacity="0.9"/><rect x="595.2" y="344.7" width="1.70" height="8.1" fill="#36223a"/><rect x="595.6" y="345.5" width="0.7" height="6.5" fill="#584058" fill-opacity="0.7"/><rect x="597.4" y="345.4" width="1.70" height="7.1" fill="#36223a"/><rect x="599.6" y="346.3" width="1.70" height="7.5" fill="#a06a78"/><rect x="600.0" y="347.1" width="0.7" height="5.9" fill="#d8b0b8" fill-opacity="0.5"/><rect x="601.8" y="346.8" width="1.70" height="8.1" fill="#a06a78"/><rect x="602.2" y="347.6" width="0.7" height="6.5" fill="#d8b0b8" fill-opacity="0.9"/><rect x="604.0" y="346.1" width="1.00" height="8.0" fill="#a06a78"/><rect x="605.0" y="345.7" width="1.70" height="7.6" fill="#c88a90"/><rect x="605.4" y="346.5" width="0.7" height="6.0" fill="#fff0f0" fill-opacity="0.7"/><rect x="607.2" y="346.7" width="1.70" height="7.4" fill="#c88a90"/><rect x="607.6" y="347.5" width="0.7" height="5.8" fill="#fff0f0" fill-opacity="0.7"/><rect x="609.4" y="347.3" width="1.70" height="7.0" fill="#c88a90"/><rect x="609.8" y="348.1" width="0.7" height="5.4" fill="#fff0f0" fill-opacity="0.7"/><rect x="611.6" y="346.8" width="1.70" height="7.4" fill="#c88a90"/><rect x="612.0" y="347.6" width="0.7" height="5.8" fill="#fff0f0" fill-opacity="0.5"/><rect x="613.8" y="345.3" width="1.70" height="8.2" fill="#c88a90"/><rect x="614.2" y="346.1" width="0.7" height="6.6" fill="#fff0f0" fill-opacity="1.0"/><rect x="616.0" y="344.6" width="1.70" height="7.2" fill="#c88a90"/><rect x="618.2" y="344.9" width="1.70" height="7.4" fill="#c88a90"/><rect x="618.6" y="345.7" width="0.7" height="5.8" fill="#fff0f0" fill-opacity="0.9"/><rect x="620.4" y="345.4" width="1.70" height="8.2" fill="#c88a90"/><rect x="620.8" y="346.2" width="0.7" height="6.6" fill="#fff0f0" fill-opacity="0.5"/><rect x="622.6" y="346.0" width="1.70" height="7.8" fill="#c88a90"/><rect x="623.0" y="346.8" width="0.7" height="6.2" fill="#fff0f0" fill-opacity="0.9"/><rect x="624.8" y="346.6" width="1.70" height="8.5" fill="#c88a90"/><rect x="625.2" y="347.4" width="0.7" height="6.9" fill="#fff0f0" fill-opacity="1.0"/><rect x="627.0" y="346.7" width="1.70" height="7.3" fill="#c88a90"/><rect x="627.4" y="347.5" width="0.7" height="5.7" fill="#fff0f0" fill-opacity="1.0"/><rect x="629.2" y="345.8" width="1.70" height="7.1" fill="#c88a90"/><rect x="631.4" y="344.4" width="1.70" height="7.9" fill="#c88a90"/><rect x="633.6" y="344.5" width="1.70" height="7.7" fill="#c88a90"/><rect x="634.0" y="345.3" width="0.7" height="6.1" fill="#fff0f0" fill-opacity="0.9"/><rect x="635.8" y="344.6" width="1.70" height="8.2" fill="#c88a90"/><rect x="636.2" y="345.4" width="0.7" height="6.6" fill="#fff0f0" fill-opacity="0.7"/><rect x="638.0" y="346.4" width="1.70" height="7.2" fill="#c88a90"/><rect x="638.4" y="347.2" width="0.7" height="5.6" fill="#fff0f0" fill-opacity="0.5"/><rect x="640.2" y="346.4" width="1.70" height="7.9" fill="#c88a90"/><rect x="640.6" y="347.2" width="0.7" height="6.3" fill="#fff0f0" fill-opacity="0.9"/><rect x="642.4" y="346.5" width="1.60" height="7.4" fill="#c88a90"/><rect x="642.8" y="347.3" width="0.7" height="5.8" fill="#fff0f0" fill-opacity="1.0"/><rect x="652.0" y="356.2" width="1.70" height="8.3" fill="#36223a"/><rect x="652.4" y="357.0" width="0.7" height="6.7" fill="#584058" fill-opacity="0.9"/><rect x="654.2" y="356.7" width="1.70" height="7.6" fill="#36223a"/><rect x="656.4" y="356.5" width="1.70" height="8.4" fill="#36223a"/><rect x="656.8" y="357.3" width="0.7" height="6.8" fill="#584058" fill-opacity="1.0"/><rect x="658.6" y="356.9" width="1.70" height="7.6" fill="#36223a"/><rect x="659.0" y="357.7" width="0.7" height="6.0" fill="#584058" fill-opacity="1.0"/><rect x="660.8" y="356.5" width="1.70" height="7.7" fill="#36223a"/><rect x="663.0" y="355.4" width="1.70" height="7.9" fill="#36223a"/><rect x="663.4" y="356.2" width="0.7" height="6.3" fill="#584058" fill-opacity="1.0"/><rect x="665.0" y="356.0" width="1.70" height="7.5" fill="#c88a90"/><rect x="665.4" y="356.8" width="0.7" height="5.9" fill="#fff0f0" fill-opacity="1.0"/><rect x="667.2" y="356.9" width="1.70" height="7.6" fill="#c88a90"/><rect x="667.6" y="357.7" width="0.7" height="6.0" fill="#fff0f0" fill-opacity="0.9"/><rect x="669.4" y="356.6" width="1.70" height="8.1" fill="#c88a90"/><rect x="669.8" y="357.4" width="0.7" height="6.5" fill="#fff0f0" fill-opacity="0.7"/><rect x="671.6" y="356.4" width="1.70" height="7.8" fill="#c88a90"/><rect x="672.0" y="357.2" width="0.7" height="6.2" fill="#fff0f0" fill-opacity="1.0"/><rect x="673.8" y="356.0" width="1.70" height="8.1" fill="#c88a90"/><rect x="674.2" y="356.8" width="0.7" height="6.5" fill="#fff0f0" fill-opacity="0.5"/><rect x="676.0" y="355.2" width="1.70" height="8.1" fill="#c88a90"/><rect x="678.2" y="355.1" width="1.70" height="7.9" fill="#c88a90"/><rect x="678.6" y="355.9" width="0.7" height="6.3" fill="#fff0f0" fill-opacity="1.0"/><rect x="680.4" y="355.5" width="1.70" height="7.6" fill="#c88a90"/><rect x="680.8" y="356.3" width="0.7" height="6.0" fill="#fff0f0" fill-opacity="0.5"/><rect x="682.6" y="356.1" width="1.70" height="7.2" fill="#c88a90"/><rect x="683.0" y="356.9" width="0.7" height="5.6" fill="#fff0f0" fill-opacity="1.0"/><rect x="684.8" y="356.7" width="1.70" height="8.2" fill="#c88a90"/><rect x="685.2" y="357.5" width="0.7" height="6.6" fill="#fff0f0" fill-opacity="0.9"/><rect x="687.0" y="357.1" width="1.70" height="7.6" fill="#c88a90"/><rect x="687.4" y="357.9" width="0.7" height="6.0" fill="#fff0f0" fill-opacity="0.5"/><rect x="689.2" y="357.2" width="1.70" height="7.6" fill="#c88a90"/><rect x="689.6" y="358.0" width="0.7" height="6.0" fill="#fff0f0" fill-opacity="1.0"/><rect x="691.4" y="355.9" width="1.70" height="8.2" fill="#c88a90"/><rect x="691.8" y="356.7" width="0.7" height="6.6" fill="#fff0f0" fill-opacity="0.7"/><rect x="693.6" y="355.8" width="1.40" height="7.1" fill="#c88a90"/><rect x="694.0" y="356.6" width="0.7" height="5.5" fill="#fff0f0" fill-opacity="0.9"/><rect x="705.0" y="365.9" width="1.70" height="7.6" fill="#a06a78"/><rect x="705.4" y="366.7" width="0.7" height="6.0" fill="#d8b0b8" fill-opacity="1.0"/><rect x="707.2" y="367.0" width="1.70" height="7.5" fill="#a06a78"/><rect x="707.6" y="367.8" width="0.7" height="5.9" fill="#d8b0b8" fill-opacity="0.5"/><rect x="709.4" y="366.9" width="1.70" height="7.7" fill="#a06a78"/><rect x="709.8" y="367.7" width="0.7" height="6.1" fill="#d8b0b8" fill-opacity="1.0"/><rect x="711.6" y="366.6" width="1.70" height="8.4" fill="#a06a78"/><rect x="712.0" y="367.4" width="0.7" height="6.8" fill="#d8b0b8" fill-opacity="0.7"/><rect x="713.8" y="366.0" width="1.70" height="8.5" fill="#a06a78"/><rect x="714.2" y="366.8" width="0.7" height="6.9" fill="#d8b0b8" fill-opacity="0.7"/><rect x="716.0" y="366.2" width="1.70" height="7.1" fill="#a06a78"/><rect x="716.4" y="367.0" width="0.7" height="5.5" fill="#d8b0b8" fill-opacity="0.9"/><rect x="718.2" y="365.6" width="1.70" height="7.4" fill="#a06a78"/><rect x="720.4" y="365.8" width="1.70" height="7.5" fill="#a06a78"/><rect x="720.8" y="366.6" width="0.7" height="5.9" fill="#d8b0b8" fill-opacity="1.0"/><rect x="722.6" y="366.5" width="1.70" height="7.4" fill="#a06a78"/><rect x="723.0" y="367.3" width="0.7" height="5.8" fill="#d8b0b8" fill-opacity="1.0"/><rect x="724.8" y="366.3" width="1.70" height="7.9" fill="#a06a78"/><rect x="725.2" y="367.1" width="0.7" height="6.3" fill="#d8b0b8" fill-opacity="0.9"/><rect x="727.0" y="367.0" width="1.70" height="7.3" fill="#a06a78"/><rect x="727.4" y="367.8" width="0.7" height="5.7" fill="#d8b0b8" fill-opacity="1.0"/><rect x="729.2" y="366.8" width="1.70" height="8.1" fill="#a06a78"/><rect x="729.6" y="367.6" width="0.7" height="6.5" fill="#d8b0b8" fill-opacity="0.9"/><rect x="731.4" y="366.2" width="1.70" height="8.2" fill="#a06a78"/><rect x="731.8" y="367.0" width="0.7" height="6.6" fill="#d8b0b8" fill-opacity="0.9"/><rect x="733.6" y="365.8" width="1.70" height="7.8" fill="#a06a78"/><rect x="735.8" y="365.5" width="1.70" height="7.5" fill="#a06a78"/><rect x="736.2" y="366.3" width="0.7" height="5.9" fill="#d8b0b8" fill-opacity="0.5"/><rect x="738.0" y="365.2" width="1.70" height="8.1" fill="#a06a78"/><rect x="738.4" y="366.0" width="0.7" height="6.5" fill="#d8b0b8" fill-opacity="0.7"/><rect x="740.0" y="365.8" width="1.70" height="8.5" fill="#c88a90"/><rect x="740.4" y="366.6" width="0.7" height="6.9" fill="#fff0f0" fill-opacity="0.7"/><rect x="742.2" y="367.4" width="1.70" height="7.5" fill="#c88a90"/><rect x="744.4" y="367.1" width="1.70" height="7.5" fill="#c88a90"/><rect x="744.8" y="367.9" width="0.7" height="5.9" fill="#fff0f0" fill-opacity="0.7"/><rect x="746.6" y="367.0" width="1.70" height="7.9" fill="#c88a90"/><rect x="748.8" y="365.3" width="1.70" height="8.1" fill="#c88a90"/><rect x="749.2" y="366.1" width="0.7" height="6.5" fill="#fff0f0" fill-opacity="1.0"/><rect x="751.0" y="365.4" width="1.70" height="7.0" fill="#c88a90"/><rect x="753.2" y="365.1" width="1.70" height="7.2" fill="#c88a90"/><rect x="753.6" y="365.9" width="0.7" height="5.6" fill="#fff0f0" fill-opacity="1.0"/><rect x="755.4" y="366.0" width="1.70" height="8.1" fill="#c88a90"/><rect x="755.8" y="366.8" width="0.7" height="6.5" fill="#fff0f0" fill-opacity="0.5"/><rect x="757.6" y="367.3" width="1.70" height="7.2" fill="#c88a90"/><rect x="759.8" y="367.3" width="1.70" height="7.2" fill="#c88a90"/><rect x="760.2" y="368.1" width="0.7" height="5.6" fill="#fff0f0" fill-opacity="0.7"/><rect x="762.0" y="366.4" width="1.70" height="8.3" fill="#c88a90"/><rect x="762.4" y="367.2" width="0.7" height="6.7" fill="#fff0f0" fill-opacity="0.9"/><rect x="764.2" y="365.7" width="1.70" height="7.9" fill="#c88a90"/><rect x="764.6" y="366.5" width="0.7" height="6.3" fill="#fff0f0" fill-opacity="0.9"/><rect x="766.4" y="364.7" width="1.70" height="8.0" fill="#c88a90"/><rect x="766.8" y="365.5" width="0.7" height="6.4" fill="#fff0f0" fill-opacity="1.0"/><rect x="768.6" y="365.1" width="1.70" height="8.2" fill="#c88a90"/><rect x="769.0" y="365.9" width="0.7" height="6.6" fill="#fff0f0" fill-opacity="0.9"/><rect x="770.8" y="365.5" width="1.70" height="8.3" fill="#c88a90"/><rect x="771.2" y="366.3" width="0.7" height="6.7" fill="#fff0f0" fill-opacity="0.7"/><rect x="773.0" y="367.2" width="1.70" height="7.1" fill="#c88a90"/><rect x="773.4" y="368.0" width="0.7" height="5.5" fill="#fff0f0" fill-opacity="0.7"/><rect x="775.2" y="367.1" width="1.70" height="7.9" fill="#c88a90"/><rect x="775.6" y="367.9" width="0.7" height="6.3" fill="#fff0f0" fill-opacity="0.9"/><rect x="777.4" y="367.1" width="1.70" height="7.8" fill="#c88a90"/><rect x="777.8" y="367.9" width="0.7" height="6.2" fill="#fff0f0" fill-opacity="0.9"/><rect x="779.6" y="365.9" width="1.70" height="8.5" fill="#c88a90"/><rect x="780.0" y="366.7" width="0.7" height="6.9" fill="#fff0f0" fill-opacity="1.0"/><rect x="781.8" y="365.3" width="1.70" height="8.3" fill="#c88a90"/><rect x="782.2" y="366.1" width="0.7" height="6.7" fill="#fff0f0" fill-opacity="0.7"/><rect x="784.0" y="364.9" width="1.70" height="7.9" fill="#c88a90"/><rect x="786.2" y="365.3" width="1.70" height="7.2" fill="#c88a90"/><rect x="786.6" y="366.1" width="0.7" height="5.6" fill="#fff0f0" fill-opacity="0.9"/><rect x="788.4" y="366.3" width="1.60" height="7.5" fill="#c88a90"/><rect x="788.8" y="367.1" width="0.7" height="5.9" fill="#fff0f0" fill-opacity="1.0"/><rect x="790.0" y="366.1" width="1.70" height="8.4" fill="#a06a78"/><rect x="792.2" y="366.4" width="1.70" height="8.4" fill="#a06a78"/><rect x="792.6" y="367.2" width="0.7" height="6.8" fill="#d8b0b8" fill-opacity="0.9"/><rect x="794.4" y="367.2" width="1.70" height="7.9" fill="#a06a78"/><rect x="794.8" y="368.0" width="0.7" height="6.3" fill="#d8b0b8" fill-opacity="1.0"/><rect x="796.6" y="366.6" width="1.70" height="7.7" fill="#a06a78"/><rect x="797.0" y="367.4" width="0.7" height="6.1" fill="#d8b0b8" fill-opacity="0.9"/><rect x="798.8" y="365.8" width="1.70" height="8.1" fill="#a06a78"/><rect x="799.2" y="366.6" width="0.7" height="6.5" fill="#d8b0b8" fill-opacity="0.7"/><rect x="801.0" y="365.7" width="1.70" height="7.5" fill="#a06a78"/><rect x="801.4" y="366.5" width="0.7" height="5.9" fill="#d8b0b8" fill-opacity="0.9"/><rect x="803.2" y="365.0" width="1.70" height="8.5" fill="#a06a78"/><rect x="803.6" y="365.8" width="0.7" height="6.9" fill="#d8b0b8" fill-opacity="0.7"/><rect x="805.4" y="365.9" width="1.70" height="7.5" fill="#a06a78"/><rect x="805.8" y="366.7" width="0.7" height="5.9" fill="#d8b0b8" fill-opacity="0.7"/><rect x="807.6" y="366.5" width="1.70" height="7.4" fill="#a06a78"/><rect x="808.0" y="367.3" width="0.7" height="5.8" fill="#d8b0b8" fill-opacity="0.9"/><rect x="809.8" y="366.8" width="0.20" height="7.5" fill="#a06a78"/><rect x="810.0" y="380.5" width="1.70" height="8.3" fill="#c88a90"/><rect x="810.4" y="381.3" width="0.7" height="6.7" fill="#fff0f0" fill-opacity="1.0"/><rect x="812.2" y="381.6" width="1.70" height="8.0" fill="#c88a90"/><rect x="814.4" y="382.1" width="1.70" height="7.2" fill="#c88a90"/><rect x="814.8" y="382.9" width="0.7" height="5.6" fill="#fff0f0" fill-opacity="0.7"/><rect x="816.6" y="381.3" width="1.70" height="8.1" fill="#c88a90"/><rect x="817.0" y="382.1" width="0.7" height="6.5" fill="#fff0f0" fill-opacity="0.5"/><rect x="818.8" y="380.8" width="1.70" height="7.9" fill="#c88a90"/><rect x="819.2" y="381.6" width="0.7" height="6.3" fill="#fff0f0" fill-opacity="0.5"/><rect x="821.0" y="379.5" width="1.70" height="8.1" fill="#c88a90"/><rect x="821.4" y="380.3" width="0.7" height="6.5" fill="#fff0f0" fill-opacity="0.5"/><rect x="823.2" y="380.3" width="1.70" height="7.2" fill="#c88a90"/><rect x="825.4" y="380.3" width="1.70" height="7.2" fill="#c88a90"/><rect x="827.6" y="380.5" width="1.70" height="7.5" fill="#c88a90"/><rect x="828.0" y="381.3" width="0.7" height="5.9" fill="#fff0f0" fill-opacity="0.5"/><rect x="829.8" y="380.8" width="1.70" height="8.1" fill="#c88a90"/><rect x="832.0" y="381.5" width="1.70" height="7.8" fill="#c88a90"/><rect x="834.2" y="381.7" width="1.70" height="7.3" fill="#c88a90"/><rect x="836.4" y="381.2" width="1.70" height="7.9" fill="#c88a90"/><rect x="836.8" y="382.0" width="0.7" height="6.3" fill="#fff0f0" fill-opacity="0.7"/><rect x="838.6" y="379.8" width="1.70" height="8.4" fill="#c88a90"/><rect x="839.0" y="380.6" width="0.7" height="6.8" fill="#fff0f0" fill-opacity="1.0"/><rect x="840.8" y="380.2" width="1.70" height="7.4" fill="#c88a90"/><rect x="841.2" y="381.0" width="0.7" height="5.8" fill="#fff0f0" fill-opacity="0.7"/><rect x="843.0" y="380.2" width="1.70" height="7.8" fill="#c88a90"/><rect x="843.4" y="381.0" width="0.7" height="6.2" fill="#fff0f0" fill-opacity="0.5"/><rect x="845.2" y="380.3" width="1.70" height="7.9" fill="#c88a90"/><rect x="845.6" y="381.1" width="0.7" height="6.3" fill="#fff0f0" fill-opacity="1.0"/><rect x="847.4" y="381.5" width="1.70" height="7.1" fill="#c88a90"/><rect x="847.8" y="382.3" width="0.7" height="5.5" fill="#fff0f0" fill-opacity="0.5"/><rect x="849.6" y="382.2" width="1.70" height="7.2" fill="#c88a90"/><rect x="850.0" y="383.0" width="0.7" height="5.6" fill="#fff0f0" fill-opacity="0.5"/><rect x="851.8" y="381.5" width="1.70" height="7.9" fill="#c88a90"/><rect x="854.0" y="380.9" width="1.00" height="8.2" fill="#c88a90"/><rect x="855.0" y="379.1" width="1.70" height="8.5" fill="#36223a"/><rect x="857.2" y="379.4" width="1.70" height="8.3" fill="#36223a"/><rect x="857.6" y="380.2" width="0.7" height="6.7" fill="#584058" fill-opacity="0.5"/><rect x="859.4" y="379.9" width="1.70" height="8.2" fill="#36223a"/><rect x="859.8" y="380.7" width="0.7" height="6.6" fill="#584058" fill-opacity="0.9"/><rect x="861.6" y="379.6" width="1.70" height="7.8" fill="#36223a"/><rect x="862.0" y="380.4" width="0.7" height="6.2" fill="#584058" fill-opacity="1.0"/><rect x="863.8" y="379.7" width="1.70" height="7.0" fill="#36223a"/><rect x="864.2" y="380.5" width="0.7" height="5.4" fill="#584058" fill-opacity="1.0"/><rect x="866.0" y="379.5" width="1.70" height="7.1" fill="#36223a"/><rect x="866.4" y="380.3" width="0.7" height="5.5" fill="#584058" fill-opacity="1.0"/><rect x="868.2" y="379.1" width="1.70" height="7.8" fill="#36223a"/><rect x="868.6" y="379.9" width="0.7" height="6.2" fill="#584058" fill-opacity="0.9"/><rect x="852.0" y="391.3" width="1.70" height="7.2" fill="#c88a90"/><rect x="852.4" y="392.1" width="0.7" height="5.6" fill="#fff0f0" fill-opacity="1.0"/><rect x="854.2" y="391.0" width="1.70" height="8.4" fill="#c88a90"/><rect x="854.6" y="391.8" width="0.7" height="6.8" fill="#fff0f0" fill-opacity="0.5"/><rect x="856.4" y="392.5" width="1.70" height="7.1" fill="#c88a90"/><rect x="856.8" y="393.3" width="0.7" height="5.5" fill="#fff0f0" fill-opacity="0.7"/><rect x="858.6" y="391.7" width="1.70" height="7.4" fill="#c88a90"/><rect x="859.0" y="392.5" width="0.7" height="5.8" fill="#fff0f0" fill-opacity="1.0"/><rect x="860.8" y="391.8" width="1.70" height="7.1" fill="#c88a90"/><rect x="861.2" y="392.6" width="0.7" height="5.5" fill="#fff0f0" fill-opacity="0.5"/><rect x="863.0" y="390.5" width="1.70" height="7.6" fill="#c88a90"/><rect x="863.4" y="391.3" width="0.7" height="6.0" fill="#fff0f0" fill-opacity="1.0"/><rect x="865.2" y="390.6" width="1.70" height="7.4" fill="#c88a90"/><rect x="865.6" y="391.4" width="0.7" height="5.8" fill="#fff0f0" fill-opacity="0.9"/><rect x="867.4" y="390.5" width="1.70" height="8.2" fill="#c88a90"/><rect x="867.8" y="391.3" width="0.7" height="6.6" fill="#fff0f0" fill-opacity="0.7"/><rect x="869.6" y="390.7" width="1.70" height="8.4" fill="#c88a90"/><rect x="870.0" y="391.5" width="0.7" height="6.8" fill="#fff0f0" fill-opacity="0.5"/><rect x="871.8" y="391.7" width="1.70" height="7.6" fill="#c88a90"/><rect x="872.2" y="392.5" width="0.7" height="6.0" fill="#fff0f0" fill-opacity="0.5"/><rect x="151.7" y="396.4" width="1.70" height="7.3" fill="#d83030"/><rect x="152.1" y="397.2" width="0.7" height="5.7" fill="#ff9090" fill-opacity="1.0"/><rect x="153.9" y="396.9" width="1.70" height="7.2" fill="#d83030"/><rect x="154.3" y="397.7" width="0.7" height="5.6" fill="#ff9090" fill-opacity="0.5"/><rect x="156.1" y="397.1" width="1.70" height="7.6" fill="#d83030"/><rect x="158.3" y="396.9" width="1.70" height="7.5" fill="#d83030"/><rect x="158.7" y="397.7" width="0.7" height="5.9" fill="#ff9090" fill-opacity="0.7"/><rect x="160.5" y="396.4" width="1.70" height="8.1" fill="#d83030"/><rect x="160.9" y="397.2" width="0.7" height="6.5" fill="#ff9090" fill-opacity="0.7"/><rect x="162.7" y="396.7" width="1.70" height="7.7" fill="#d83030"/><rect x="163.1" y="397.5" width="0.7" height="6.1" fill="#ff9090" fill-opacity="0.9"/><rect x="164.9" y="396.8" width="1.70" height="7.6" fill="#d83030"/><rect x="167.1" y="396.6" width="1.70" height="7.3" fill="#d83030"/><rect x="167.5" y="397.4" width="0.7" height="5.7" fill="#ff9090" fill-opacity="0.9"/><rect x="169.3" y="396.4" width="1.70" height="7.7" fill="#d83030"/><rect x="171.5" y="396.4" width="1.70" height="7.2" fill="#d83030"/><rect x="171.9" y="397.2" width="0.7" height="5.6" fill="#ff9090" fill-opacity="1.0"/><rect x="173.7" y="396.4" width="1.70" height="7.6" fill="#d83030"/><rect x="174.1" y="397.2" width="0.7" height="6.0" fill="#ff9090" fill-opacity="0.9"/><rect x="175.9" y="396.0" width="1.70" height="7.3" fill="#d83030"/><rect x="178.1" y="395.9" width="1.70" height="7.8" fill="#d83030"/><rect x="178.5" y="396.7" width="0.7" height="6.2" fill="#ff9090" fill-opacity="0.7"/><rect x="180.3" y="396.2" width="1.70" height="7.4" fill="#d83030"/><rect x="182.5" y="396.8" width="1.70" height="7.7" fill="#d83030"/><rect x="182.9" y="397.6" width="0.7" height="6.1" fill="#ff9090" fill-opacity="0.9"/><rect x="184.7" y="396.3" width="1.70" height="8.2" fill="#d83030"/><rect x="185.1" y="397.1" width="0.7" height="6.6" fill="#ff9090" fill-opacity="0.5"/><rect x="186.9" y="396.3" width="1.70" height="8.5" fill="#d83030"/><rect x="187.3" y="397.1" width="0.7" height="6.9" fill="#ff9090" fill-opacity="1.0"/><rect x="189.1" y="396.9" width="1.70" height="8.1" fill="#a83030"/><rect x="189.5" y="397.7" width="0.7" height="6.5" fill="#d86060" fill-opacity="1.0"/><rect x="191.3" y="396.5" width="1.70" height="8.1" fill="#d83030"/><rect x="191.7" y="397.3" width="0.7" height="6.5" fill="#ff9090" fill-opacity="1.0"/><rect x="193.5" y="396.9" width="1.70" height="7.8" fill="#d83030"/><rect x="193.9" y="397.7" width="0.7" height="6.2" fill="#ff9090" fill-opacity="0.5"/><rect x="195.7" y="396.3" width="1.70" height="8.0" fill="#d83030"/><rect x="196.1" y="397.1" width="0.7" height="6.4" fill="#ff9090" fill-opacity="1.0"/><rect x="197.9" y="396.1" width="1.70" height="8.4" fill="#d83030"/><rect x="200.1" y="396.4" width="1.70" height="8.0" fill="#d83030"/><rect x="200.5" y="397.2" width="0.7" height="6.4" fill="#ff9090" fill-opacity="0.7"/><rect x="202.3" y="396.6" width="1.70" height="7.1" fill="#d83030"/><rect x="202.7" y="397.4" width="0.7" height="5.5" fill="#ff9090" fill-opacity="0.5"/><rect x="204.5" y="395.9" width="1.70" height="7.8" fill="#d83030"/><rect x="204.9" y="396.7" width="0.7" height="6.2" fill="#ff9090" fill-opacity="0.5"/><rect x="206.7" y="396.0" width="1.70" height="8.0" fill="#d83030"/><rect x="208.9" y="396.6" width="1.70" height="7.3" fill="#d83030"/><rect x="209.3" y="397.4" width="0.7" height="5.7" fill="#ff9090" fill-opacity="0.9"/><rect x="211.1" y="396.5" width="0.90" height="8.2" fill="#d83030"/><rect x="212.0" y="390.7" width="1.70" height="8.2" fill="#5a1c1c"/><rect x="212.4" y="391.5" width="0.7" height="6.6" fill="#7e3030" fill-opacity="0.7"/><rect x="214.2" y="391.5" width="1.70" height="7.6" fill="#5a1c1c"/><rect x="214.6" y="392.3" width="0.7" height="6.0" fill="#7e3030" fill-opacity="0.7"/><rect x="218.6" y="391.4" width="1.70" height="8.1" fill="#5a1c1c"/><rect x="219.0" y="392.2" width="0.7" height="6.5" fill="#7e3030" fill-opacity="0.5"/><rect x="223.0" y="390.3" width="1.70" height="8.1" fill="#5a1c1c"/><rect x="223.4" y="391.1" width="0.7" height="6.5" fill="#7e3030" fill-opacity="0.9"/><rect x="225.2" y="390.4" width="1.70" height="8.1" fill="#a83030"/><rect x="225.6" y="391.2" width="0.7" height="6.5" fill="#d86060" fill-opacity="0.9"/><rect x="227.4" y="390.6" width="1.70" height="8.2" fill="#5a1c1c"/><rect x="227.8" y="391.4" width="0.7" height="6.6" fill="#7e3030" fill-opacity="0.7"/><rect x="231.8" y="391.9" width="1.70" height="7.5" fill="#5a1c1c"/><rect x="232.2" y="392.7" width="0.7" height="5.9" fill="#7e3030" fill-opacity="0.7"/><rect x="234.0" y="391.6" width="1.70" height="7.7" fill="#5a1c1c"/><rect x="234.4" y="392.4" width="0.7" height="6.1" fill="#7e3030" fill-opacity="0.9"/><rect x="236.2" y="391.2" width="1.70" height="8.5" fill="#5a1c1c"/><rect x="236.6" y="392.0" width="0.7" height="6.9" fill="#7e3030" fill-opacity="0.7"/><rect x="238.4" y="391.0" width="1.70" height="7.7" fill="#5a1c1c"/><rect x="238.8" y="391.8" width="0.7" height="6.1" fill="#7e3030" fill-opacity="0.9"/><rect x="240.6" y="391.0" width="1.70" height="7.1" fill="#5a1c1c"/><rect x="241.0" y="391.8" width="0.7" height="5.5" fill="#7e3030" fill-opacity="0.7"/><rect x="242.8" y="391.1" width="1.70" height="7.0" fill="#5a1c1c"/><rect x="243.2" y="391.9" width="0.7" height="5.4" fill="#7e3030" fill-opacity="0.9"/><rect x="245.0" y="390.4" width="1.70" height="8.3" fill="#5a1c1c"/><rect x="249.4" y="391.7" width="0.60" height="7.5" fill="#a83030"/><rect x="215.0" y="431.7" width="1.70" height="7.6" fill="#389838"/><rect x="215.4" y="432.5" width="0.7" height="6.0" fill="#a0e0a0" fill-opacity="0.7"/><rect x="217.2" y="431.9" width="1.70" height="7.2" fill="#226222"/><rect x="219.4" y="432.3" width="1.70" height="7.1" fill="#389838"/><rect x="219.8" y="433.1" width="0.7" height="5.5" fill="#a0e0a0" fill-opacity="0.5"/><rect x="221.6" y="431.9" width="1.70" height="7.9" fill="#226222"/><rect x="222.0" y="432.7" width="0.7" height="6.3" fill="#4a944a" fill-opacity="0.9"/><rect x="223.8" y="432.7" width="1.70" height="7.1" fill="#389838"/><rect x="224.2" y="433.5" width="0.7" height="5.5" fill="#a0e0a0" fill-opacity="0.5"/><rect x="226.0" y="432.3" width="1.70" height="7.0" fill="#226222"/><rect x="226.4" y="433.1" width="0.7" height="5.4" fill="#4a944a" fill-opacity="0.5"/><rect x="228.2" y="431.4" width="1.70" height="8.1" fill="#226222"/><rect x="230.4" y="432.3" width="1.70" height="7.3" fill="#226222"/><rect x="230.8" y="433.1" width="0.7" height="5.7" fill="#4a944a" fill-opacity="0.5"/><rect x="232.6" y="431.7" width="1.70" height="7.5" fill="#389838"/><rect x="233.0" y="432.5" width="0.7" height="5.9" fill="#a0e0a0" fill-opacity="1.0"/><rect x="234.8" y="431.3" width="1.70" height="7.8" fill="#389838"/><rect x="235.2" y="432.1" width="0.7" height="6.2" fill="#a0e0a0" fill-opacity="0.9"/><rect x="237.0" y="431.2" width="1.70" height="8.2" fill="#389838"/><rect x="237.4" y="432.0" width="0.7" height="6.6" fill="#a0e0a0" fill-opacity="0.7"/><rect x="239.2" y="431.1" width="1.70" height="8.4" fill="#226222"/><rect x="239.6" y="431.9" width="0.7" height="6.8" fill="#4a944a" fill-opacity="0.9"/><rect x="241.4" y="432.1" width="1.70" height="7.0" fill="#226222"/><rect x="241.8" y="432.9" width="0.7" height="5.4" fill="#4a944a" fill-opacity="0.5"/><rect x="243.6" y="431.6" width="1.70" height="7.8" fill="#226222"/><rect x="245.8" y="431.9" width="1.70" height="7.4" fill="#226222"/><rect x="246.2" y="432.7" width="0.7" height="5.8" fill="#4a944a" fill-opacity="0.9"/><rect x="248.0" y="432.4" width="1.70" height="7.4" fill="#226222"/><rect x="248.4" y="433.2" width="0.7" height="5.8" fill="#4a944a" fill-opacity="0.7"/><rect x="250.2" y="432.0" width="1.70" height="7.8" fill="#226222"/><rect x="250.6" y="432.8" width="0.7" height="6.2" fill="#4a944a" fill-opacity="1.0"/><rect x="252.4" y="432.6" width="1.70" height="7.2" fill="#389838"/><rect x="252.8" y="433.4" width="0.7" height="5.6" fill="#a0e0a0" fill-opacity="1.0"/><rect x="254.6" y="432.1" width="1.70" height="7.7" fill="#389838"/><rect x="255.0" y="432.9" width="0.7" height="6.1" fill="#a0e0a0" fill-opacity="0.9"/><rect x="256.8" y="432.3" width="1.70" height="7.1" fill="#226222"/><rect x="257.2" y="433.1" width="0.7" height="5.5" fill="#4a944a" fill-opacity="1.0"/><rect x="259.0" y="431.3" width="1.70" height="8.1" fill="#226222"/><rect x="261.2" y="431.1" width="1.70" height="8.4" fill="#226222"/><rect x="261.6" y="431.9" width="0.7" height="6.8" fill="#4a944a" fill-opacity="0.9"/><rect x="263.4" y="432.0" width="1.70" height="7.3" fill="#389838"/><rect x="263.8" y="432.8" width="0.7" height="5.7" fill="#a0e0a0" fill-opacity="0.7"/><rect x="265.6" y="431.2" width="1.70" height="7.4" fill="#389838"/><rect x="266.0" y="432.0" width="0.7" height="5.8" fill="#a0e0a0" fill-opacity="0.7"/><rect x="267.8" y="431.7" width="1.70" height="7.1" fill="#226222"/><rect x="268.2" y="432.5" width="0.7" height="5.5" fill="#4a944a" fill-opacity="1.0"/><rect x="270.0" y="431.3" width="1.70" height="7.5" fill="#389838"/><rect x="270.4" y="432.1" width="0.7" height="5.9" fill="#a0e0a0" fill-opacity="1.0"/><rect x="272.2" y="431.6" width="1.70" height="7.0" fill="#389838"/><rect x="272.6" y="432.4" width="0.7" height="5.4" fill="#a0e0a0" fill-opacity="0.7"/><rect x="274.4" y="431.4" width="1.70" height="8.0" fill="#389838"/><rect x="274.8" y="432.2" width="0.7" height="6.4" fill="#a0e0a0" fill-opacity="0.9"/><rect x="276.6" y="432.0" width="1.70" height="8.1" fill="#226222"/><rect x="277.0" y="432.8" width="0.7" height="6.5" fill="#4a944a" fill-opacity="0.5"/><rect x="278.8" y="431.8" width="1.70" height="7.8" fill="#226222"/><rect x="281.0" y="431.6" width="1.70" height="8.2" fill="#226222"/><rect x="281.4" y="432.4" width="0.7" height="6.6" fill="#4a944a" fill-opacity="0.5"/><rect x="283.2" y="432.3" width="1.70" height="7.7" fill="#389838"/><rect x="283.6" y="433.1" width="0.7" height="6.1" fill="#a0e0a0" fill-opacity="1.0"/><rect x="285.4" y="432.2" width="1.70" height="7.2" fill="#389838"/><rect x="285.8" y="433.0" width="0.7" height="5.6" fill="#a0e0a0" fill-opacity="0.9"/><rect x="287.6" y="431.8" width="1.70" height="7.9" fill="#226222"/><rect x="288.0" y="432.6" width="0.7" height="6.3" fill="#4a944a" fill-opacity="0.7"/><rect x="289.8" y="431.9" width="1.70" height="7.3" fill="#226222"/><rect x="290.2" y="432.7" width="0.7" height="5.7" fill="#4a944a" fill-opacity="1.0"/><rect x="292.0" y="431.4" width="1.70" height="7.6" fill="#389838"/><rect x="292.4" y="432.2" width="0.7" height="6.0" fill="#a0e0a0" fill-opacity="0.7"/><rect x="294.2" y="431.7" width="1.70" height="7.2" fill="#389838"/><rect x="294.6" y="432.5" width="0.7" height="5.6" fill="#a0e0a0" fill-opacity="1.0"/><rect x="296.4" y="431.3" width="1.70" height="8.0" fill="#389838"/><rect x="296.8" y="432.1" width="0.7" height="6.4" fill="#a0e0a0" fill-opacity="0.7"/><rect x="298.6" y="431.8" width="1.70" height="7.2" fill="#226222"/><rect x="299.0" y="432.6" width="0.7" height="5.6" fill="#4a944a" fill-opacity="0.7"/><rect x="300.8" y="431.6" width="1.70" height="7.5" fill="#389838"/><rect x="301.2" y="432.4" width="0.7" height="5.9" fill="#a0e0a0" fill-opacity="0.5"/><rect x="303.0" y="431.4" width="1.70" height="8.3" fill="#389838"/><rect x="303.4" y="432.2" width="0.7" height="6.7" fill="#a0e0a0" fill-opacity="0.7"/><rect x="305.2" y="432.4" width="1.70" height="7.2" fill="#389838"/><rect x="305.6" y="433.2" width="0.7" height="5.6" fill="#a0e0a0" fill-opacity="0.5"/><rect x="307.4" y="431.8" width="1.70" height="8.4" fill="#226222"/><rect x="307.8" y="432.6" width="0.7" height="6.8" fill="#4a944a" fill-opacity="0.9"/><rect x="309.6" y="432.2" width="1.70" height="7.8" fill="#226222"/><rect x="311.8" y="432.5" width="1.70" height="7.1" fill="#389838"/><rect x="312.2" y="433.3" width="0.7" height="5.5" fill="#a0e0a0" fill-opacity="0.7"/><rect x="314.0" y="432.4" width="1.70" height="7.6" fill="#226222"/><rect x="316.2" y="432.5" width="1.70" height="7.4" fill="#389838"/><rect x="316.6" y="433.3" width="0.7" height="5.8" fill="#a0e0a0" fill-opacity="1.0"/><rect x="318.4" y="432.0" width="1.70" height="7.0" fill="#389838"/><rect x="318.8" y="432.8" width="0.7" height="5.4" fill="#a0e0a0" fill-opacity="0.5"/><rect x="320.6" y="431.8" width="1.70" height="8.0" fill="#389838"/><rect x="321.0" y="432.6" width="0.7" height="6.4" fill="#a0e0a0" fill-opacity="1.0"/><rect x="322.8" y="431.0" width="1.70" height="8.2" fill="#389838"/><rect x="325.0" y="431.1" width="1.70" height="7.8" fill="#226222"/><rect x="327.2" y="431.3" width="1.70" height="7.5" fill="#389838"/><rect x="327.6" y="432.1" width="0.7" height="5.9" fill="#a0e0a0" fill-opacity="0.5"/><rect x="329.4" y="431.6" width="1.70" height="7.1" fill="#389838"/><rect x="329.8" y="432.4" width="0.7" height="5.5" fill="#a0e0a0" fill-opacity="1.0"/><rect x="331.6" y="431.3" width="1.70" height="8.5" fill="#389838"/><rect x="332.0" y="432.1" width="0.7" height="6.9" fill="#a0e0a0" fill-opacity="0.5"/><rect x="333.8" y="431.4" width="1.70" height="8.0" fill="#226222"/><rect x="334.2" y="432.2" width="0.7" height="6.4" fill="#4a944a" fill-opacity="0.5"/><rect x="336.0" y="432.0" width="1.70" height="7.1" fill="#389838"/><rect x="336.4" y="432.8" width="0.7" height="5.5" fill="#a0e0a0" fill-opacity="0.9"/><rect x="338.2" y="432.0" width="1.70" height="7.5" fill="#389838"/><rect x="338.6" y="432.8" width="0.7" height="5.9" fill="#a0e0a0" fill-opacity="0.9"/><rect x="340.4" y="431.8" width="1.70" height="8.1" fill="#389838"/><rect x="340.8" y="432.6" width="0.7" height="6.5" fill="#a0e0a0" fill-opacity="0.5"/><rect x="342.6" y="431.8" width="1.70" height="8.2" fill="#389838"/><rect x="344.8" y="431.8" width="1.70" height="8.4" fill="#226222"/><rect x="345.2" y="432.6" width="0.7" height="6.8" fill="#4a944a" fill-opacity="1.0"/><rect x="347.0" y="431.8" width="1.70" height="8.5" fill="#226222"/><rect x="347.4" y="432.6" width="0.7" height="6.9" fill="#4a944a" fill-opacity="0.9"/><rect x="349.2" y="432.0" width="1.70" height="7.9" fill="#389838"/><rect x="349.6" y="432.8" width="0.7" height="6.3" fill="#a0e0a0" fill-opacity="0.9"/><rect x="351.4" y="432.0" width="1.70" height="7.5" fill="#226222"/><rect x="351.8" y="432.8" width="0.7" height="5.9" fill="#4a944a" fill-opacity="0.9"/><rect x="353.6" y="431.6" width="1.70" height="7.8" fill="#389838"/><rect x="354.0" y="432.4" width="0.7" height="6.2" fill="#a0e0a0" fill-opacity="0.9"/><rect x="355.8" y="430.8" width="1.70" height="8.4" fill="#389838"/><rect x="358.0" y="431.9" width="1.70" height="7.0" fill="#226222"/><rect x="358.4" y="432.7" width="0.7" height="5.4" fill="#4a944a" fill-opacity="1.0"/><rect x="360.2" y="431.0" width="1.70" height="8.3" fill="#389838"/><rect x="360.6" y="431.8" width="0.7" height="6.7" fill="#a0e0a0" fill-opacity="0.5"/><rect x="362.4" y="431.7" width="1.70" height="7.9" fill="#389838"/><rect x="362.8" y="432.5" width="0.7" height="6.3" fill="#a0e0a0" fill-opacity="0.7"/><rect x="364.6" y="431.6" width="1.70" height="7.5" fill="#389838"/><rect x="365.0" y="432.4" width="0.7" height="5.9" fill="#a0e0a0" fill-opacity="0.5"/><rect x="366.8" y="432.4" width="1.70" height="7.3" fill="#226222"/><rect x="367.2" y="433.2" width="0.7" height="5.7" fill="#4a944a" fill-opacity="0.9"/><rect x="369.0" y="431.9" width="1.70" height="8.4" fill="#389838"/><rect x="369.4" y="432.7" width="0.7" height="6.8" fill="#a0e0a0" fill-opacity="0.7"/><rect x="371.2" y="431.8" width="1.70" height="8.3" fill="#226222"/><rect x="371.6" y="432.6" width="0.7" height="6.7" fill="#4a944a" fill-opacity="0.5"/><rect x="373.4" y="432.1" width="1.70" height="8.3" fill="#226222"/><rect x="373.8" y="432.9" width="0.7" height="6.7" fill="#4a944a" fill-opacity="1.0"/><rect x="375.6" y="431.5" width="1.70" height="8.3" fill="#389838"/><rect x="377.8" y="431.3" width="1.70" height="8.5" fill="#226222"/><rect x="378.2" y="432.1" width="0.7" height="6.9" fill="#4a944a" fill-opacity="0.7"/><rect x="380.0" y="431.7" width="1.70" height="7.3" fill="#389838"/><rect x="380.4" y="432.5" width="0.7" height="5.7" fill="#a0e0a0" fill-opacity="1.0"/><rect x="382.2" y="431.7" width="1.70" height="7.6" fill="#389838"/><rect x="382.6" y="432.5" width="0.7" height="6.0" fill="#a0e0a0" fill-opacity="1.0"/><rect x="384.4" y="431.9" width="1.60" height="7.0" fill="#226222"/><rect x="384.8" y="432.7" width="0.7" height="5.4" fill="#4a944a" fill-opacity="0.9"/><rect x="386.0" y="426.1" width="1.70" height="8.1" fill="#163a18"/><rect x="386.4" y="426.9" width="0.7" height="6.5" fill="#2a562c" fill-opacity="0.7"/><rect x="390.4" y="426.9" width="1.70" height="8.5" fill="#163a18"/><rect x="390.8" y="427.7" width="0.7" height="6.9" fill="#2a562c" fill-opacity="1.0"/><rect x="392.6" y="427.1" width="1.70" height="7.2" fill="#163a18"/><rect x="393.0" y="427.9" width="0.7" height="5.6" fill="#2a562c" fill-opacity="1.0"/><rect x="394.8" y="426.1" width="1.70" height="8.4" fill="#163a18"/><rect x="395.2" y="426.9" width="0.7" height="6.8" fill="#2a562c" fill-opacity="0.9"/><rect x="397.0" y="426.1" width="1.70" height="7.3" fill="#163a18"/><rect x="397.4" y="426.9" width="0.7" height="5.7" fill="#2a562c" fill-opacity="0.9"/><rect x="401.4" y="426.0" width="1.70" height="7.3" fill="#163a18"/><rect x="401.8" y="426.8" width="0.7" height="5.7" fill="#2a562c" fill-opacity="0.7"/><rect x="403.6" y="426.2" width="1.70" height="7.1" fill="#163a18"/><rect x="404.0" y="427.0" width="0.7" height="5.5" fill="#2a562c" fill-opacity="0.7"/><rect x="405.8" y="426.4" width="1.70" height="8.5" fill="#163a18"/><rect x="408.0" y="427.0" width="1.70" height="7.5" fill="#163a18"/><rect x="408.4" y="427.8" width="0.7" height="5.9" fill="#2a562c" fill-opacity="0.9"/><rect x="410.2" y="426.8" width="1.70" height="7.6" fill="#163a18"/><rect x="410.6" y="427.6" width="0.7" height="6.0" fill="#2a562c" fill-opacity="1.0"/><rect x="412.4" y="425.9" width="1.70" height="8.5" fill="#163a18"/><rect x="412.8" y="426.7" width="0.7" height="6.9" fill="#2a562c" fill-opacity="0.5"/><rect x="414.6" y="425.8" width="1.70" height="8.0" fill="#163a18"/><rect x="415.0" y="426.6" width="0.7" height="6.4" fill="#2a562c" fill-opacity="1.0"/><rect x="416.8" y="424.9" width="1.70" height="8.0" fill="#163a18"/><rect x="417.2" y="425.7" width="0.7" height="6.4" fill="#2a562c" fill-opacity="0.5"/><rect x="419.0" y="424.9" width="1.70" height="8.5" fill="#163a18"/><rect x="419.4" y="425.7" width="0.7" height="6.9" fill="#2a562c" fill-opacity="0.5"/><rect x="421.2" y="425.6" width="1.70" height="8.5" fill="#163a18"/><rect x="421.6" y="426.4" width="0.7" height="6.9" fill="#2a562c" fill-opacity="0.5"/><rect x="423.4" y="425.8" width="1.70" height="8.5" fill="#163a18"/><rect x="423.8" y="426.6" width="0.7" height="6.9" fill="#2a562c" fill-opacity="0.7"/><rect x="427.8" y="426.6" width="1.70" height="8.4" fill="#163a18"/><rect x="428.2" y="427.4" width="0.7" height="6.8" fill="#2a562c" fill-opacity="0.7"/><rect x="430.0" y="426.2" width="1.70" height="8.1" fill="#163a18"/><rect x="430.4" y="427.0" width="0.7" height="6.5" fill="#2a562c" fill-opacity="0.5"/><rect x="432.2" y="426.5" width="1.70" height="7.1" fill="#163a18"/><rect x="432.6" y="427.3" width="0.7" height="5.5" fill="#2a562c" fill-opacity="0.7"/><rect x="434.4" y="425.2" width="1.70" height="8.2" fill="#163a18"/><rect x="434.8" y="426.0" width="0.7" height="6.6" fill="#2a562c" fill-opacity="0.9"/><rect x="436.6" y="425.7" width="1.70" height="7.3" fill="#163a18"/><rect x="438.8" y="425.6" width="1.70" height="8.4" fill="#163a18"/><rect x="439.2" y="426.4" width="0.7" height="6.8" fill="#2a562c" fill-opacity="0.7"/><rect x="441.0" y="426.9" width="1.70" height="7.2" fill="#163a18"/><rect x="441.4" y="427.7" width="0.7" height="5.6" fill="#2a562c" fill-opacity="0.7"/><rect x="443.0" y="415.8" width="1.70" height="7.8" fill="#163a18"/><rect x="443.4" y="416.6" width="0.7" height="6.2" fill="#2a562c" fill-opacity="1.0"/><rect x="445.2" y="416.5" width="1.70" height="7.2" fill="#163a18"/><rect x="445.6" y="417.3" width="0.7" height="5.6" fill="#2a562c" fill-opacity="0.9"/><rect x="447.4" y="416.8" width="1.70" height="7.6" fill="#163a18"/><rect x="447.8" y="417.6" width="0.7" height="6.0" fill="#2a562c" fill-opacity="0.9"/><rect x="449.6" y="416.7" width="1.70" height="7.4" fill="#226222"/><rect x="450.0" y="417.5" width="0.7" height="5.8" fill="#4a944a" fill-opacity="1.0"/><rect x="451.8" y="415.4" width="1.70" height="8.1" fill="#163a18"/><rect x="452.2" y="416.2" width="0.7" height="6.5" fill="#2a562c" fill-opacity="0.7"/><rect x="454.0" y="415.1" width="1.70" height="7.8" fill="#163a18"/><rect x="454.4" y="415.9" width="0.7" height="6.2" fill="#2a562c" fill-opacity="1.0"/><rect x="456.2" y="415.0" width="1.70" height="7.9" fill="#226222"/><rect x="456.6" y="415.8" width="0.7" height="6.3" fill="#4a944a" fill-opacity="1.0"/><rect x="458.4" y="414.6" width="1.70" height="8.1" fill="#163a18"/><rect x="460.6" y="415.6" width="1.70" height="7.4" fill="#226222"/><rect x="462.8" y="416.3" width="1.70" height="8.3" fill="#226222"/><rect x="463.2" y="417.1" width="0.7" height="6.7" fill="#4a944a" fill-opacity="1.0"/><rect x="465.0" y="416.0" width="1.70" height="8.1" fill="#163a18"/><rect x="465.4" y="416.8" width="0.7" height="6.5" fill="#2a562c" fill-opacity="0.5"/><rect x="467.2" y="416.9" width="1.70" height="7.0" fill="#226222"/><rect x="467.6" y="417.7" width="0.7" height="5.4" fill="#4a944a" fill-opacity="0.5"/><rect x="469.4" y="415.5" width="1.70" height="8.5" fill="#226222"/><rect x="469.8" y="416.3" width="0.7" height="6.9" fill="#4a944a" fill-opacity="1.0"/><rect x="471.6" y="415.1" width="1.70" height="8.2" fill="#226222"/><rect x="472.0" y="415.9" width="0.7" height="6.6" fill="#4a944a" fill-opacity="0.9"/><rect x="473.8" y="415.0" width="1.70" height="7.8" fill="#163a18"/><rect x="474.2" y="415.8" width="0.7" height="6.2" fill="#2a562c" fill-opacity="0.5"/><rect x="476.0" y="414.5" width="1.70" height="8.2" fill="#163a18"/><rect x="476.4" y="415.3" width="0.7" height="6.6" fill="#2a562c" fill-opacity="1.0"/><rect x="478.2" y="415.2" width="1.70" height="8.2" fill="#163a18"/><rect x="478.6" y="416.0" width="0.7" height="6.6" fill="#2a562c" fill-opacity="0.7"/><rect x="480.4" y="416.3" width="1.70" height="7.6" fill="#163a18"/><rect x="480.8" y="417.1" width="0.7" height="6.0" fill="#2a562c" fill-opacity="0.5"/><rect x="482.6" y="416.4" width="1.70" height="7.5" fill="#226222"/><rect x="483.0" y="417.2" width="0.7" height="5.9" fill="#4a944a" fill-opacity="1.0"/><rect x="484.8" y="416.8" width="1.70" height="7.1" fill="#226222"/><rect x="485.2" y="417.6" width="0.7" height="5.5" fill="#4a944a" fill-opacity="0.7"/><rect x="487.0" y="416.3" width="1.70" height="7.1" fill="#226222"/><rect x="487.4" y="417.1" width="0.7" height="5.5" fill="#4a944a" fill-opacity="0.5"/><rect x="489.2" y="415.5" width="1.70" height="7.3" fill="#226222"/><rect x="489.6" y="416.3" width="0.7" height="5.7" fill="#4a944a" fill-opacity="0.7"/><rect x="491.4" y="415.4" width="1.70" height="7.2" fill="#226222"/><rect x="493.6" y="415.0" width="1.70" height="8.0" fill="#226222"/><rect x="494.0" y="415.8" width="0.7" height="6.4" fill="#4a944a" fill-opacity="1.0"/><rect x="495.8" y="415.6" width="1.70" height="7.5" fill="#226222"/><rect x="496.2" y="416.4" width="0.7" height="5.9" fill="#4a944a" fill-opacity="0.5"/><rect x="498.0" y="416.1" width="1.70" height="7.9" fill="#226222"/><rect x="498.4" y="416.9" width="0.7" height="6.3" fill="#4a944a" fill-opacity="0.5"/><rect x="500.2" y="416.0" width="0.80" height="8.3" fill="#163a18"/><rect x="501.0" y="405.7" width="1.70" height="8.2" fill="#163a18"/><rect x="501.4" y="406.5" width="0.7" height="6.6" fill="#2a562c" fill-opacity="1.0"/><rect x="503.2" y="406.4" width="1.70" height="7.7" fill="#226222"/><rect x="503.6" y="407.2" width="0.7" height="6.1" fill="#4a944a" fill-opacity="0.7"/><rect x="505.4" y="406.0" width="1.70" height="8.2" fill="#226222"/><rect x="505.8" y="406.8" width="0.7" height="6.6" fill="#4a944a" fill-opacity="1.0"/><rect x="507.6" y="406.3" width="1.70" height="7.1" fill="#163a18"/><rect x="508.0" y="407.1" width="0.7" height="5.5" fill="#2a562c" fill-opacity="0.7"/><rect x="509.8" y="405.4" width="1.70" height="8.3" fill="#226222"/><rect x="512.0" y="404.9" width="1.70" height="8.1" fill="#163a18"/><rect x="514.2" y="405.1" width="1.70" height="7.5" fill="#226222"/><rect x="514.6" y="405.9" width="0.7" height="5.9" fill="#4a944a" fill-opacity="0.9"/><rect x="516.4" y="405.4" width="1.70" height="7.6" fill="#226222"/><rect x="516.8" y="406.2" width="0.7" height="6.0" fill="#4a944a" fill-opacity="0.5"/><rect x="518.6" y="405.5" width="1.70" height="8.0" fill="#163a18"/><rect x="519.0" y="406.3" width="0.7" height="6.4" fill="#2a562c" fill-opacity="0.9"/><rect x="520.8" y="406.5" width="1.70" height="7.2" fill="#226222"/><rect x="523.0" y="406.4" width="1.70" height="8.4" fill="#226222"/><rect x="523.4" y="407.2" width="0.7" height="6.8" fill="#4a944a" fill-opacity="0.7"/><rect x="525.2" y="406.2" width="1.70" height="8.3" fill="#163a18"/><rect x="527.4" y="405.6" width="1.70" height="7.9" fill="#163a18"/><rect x="527.8" y="406.4" width="0.7" height="6.3" fill="#2a562c" fill-opacity="0.9"/><rect x="529.6" y="405.2" width="1.70" height="8.3" fill="#163a18"/><rect x="530.0" y="406.0" width="0.7" height="6.7" fill="#2a562c" fill-opacity="0.7"/><rect x="534.0" y="404.5" width="1.70" height="8.4" fill="#226222"/><rect x="534.4" y="405.3" width="0.7" height="6.8" fill="#4a944a" fill-opacity="1.0"/><rect x="536.2" y="405.5" width="1.70" height="7.5" fill="#163a18"/><rect x="536.6" y="406.3" width="0.7" height="5.9" fill="#2a562c" fill-opacity="1.0"/><rect x="538.4" y="405.7" width="1.70" height="7.8" fill="#163a18"/><rect x="538.8" y="406.5" width="0.7" height="6.2" fill="#2a562c" fill-opacity="1.0"/><rect x="540.6" y="406.7" width="1.70" height="7.1" fill="#226222"/><rect x="541.0" y="407.5" width="0.7" height="5.5" fill="#4a944a" fill-opacity="1.0"/><rect x="542.8" y="406.0" width="1.70" height="8.3" fill="#226222"/><rect x="543.2" y="406.8" width="0.7" height="6.7" fill="#4a944a" fill-opacity="0.9"/><rect x="545.0" y="406.0" width="1.70" height="7.0" fill="#226222"/><rect x="545.4" y="406.8" width="0.7" height="5.4" fill="#4a944a" fill-opacity="0.5"/><rect x="547.2" y="405.2" width="1.70" height="7.4" fill="#163a18"/><rect x="547.6" y="406.0" width="0.7" height="5.8" fill="#2a562c" fill-opacity="0.7"/><rect x="549.4" y="405.1" width="1.70" height="7.2" fill="#163a18"/><rect x="549.8" y="405.9" width="0.7" height="5.6" fill="#2a562c" fill-opacity="0.7"/><rect x="551.6" y="405.0" width="1.70" height="7.3" fill="#163a18"/><rect x="552.0" y="405.8" width="0.7" height="5.7" fill="#2a562c" fill-opacity="0.9"/><rect x="553.8" y="405.4" width="1.70" height="7.1" fill="#226222"/><rect x="554.2" y="406.2" width="0.7" height="5.5" fill="#4a944a" fill-opacity="1.0"/><rect x="556.0" y="405.8" width="1.70" height="8.0" fill="#226222"/><rect x="556.4" y="406.6" width="0.7" height="6.4" fill="#4a944a" fill-opacity="0.9"/><rect x="558.2" y="406.1" width="0.80" height="7.6" fill="#163a18"/><rect x="559.0" y="401.7" width="1.70" height="7.1" fill="#163a18"/><rect x="559.4" y="402.5" width="0.7" height="5.5" fill="#2a562c" fill-opacity="0.9"/><rect x="561.2" y="401.5" width="1.70" height="8.2" fill="#226222"/><rect x="565.6" y="401.3" width="1.70" height="8.2" fill="#163a18"/><rect x="566.0" y="402.1" width="0.7" height="6.6" fill="#2a562c" fill-opacity="0.7"/><rect x="567.8" y="400.8" width="1.70" height="8.4" fill="#226222"/><rect x="568.2" y="401.6" width="0.7" height="6.8" fill="#4a944a" fill-opacity="0.5"/><rect x="570.0" y="401.1" width="1.70" height="7.2" fill="#163a18"/><rect x="570.4" y="401.9" width="0.7" height="5.6" fill="#2a562c" fill-opacity="0.9"/><rect x="572.2" y="400.3" width="1.70" height="7.3" fill="#163a18"/><rect x="572.6" y="401.1" width="0.7" height="5.7" fill="#2a562c" fill-opacity="0.7"/><rect x="574.4" y="399.9" width="1.70" height="8.3" fill="#163a18"/><rect x="574.8" y="400.7" width="0.7" height="6.7" fill="#2a562c" fill-opacity="0.7"/><rect x="576.6" y="401.3" width="1.70" height="7.3" fill="#226222"/><rect x="577.0" y="402.1" width="0.7" height="5.7" fill="#4a944a" fill-opacity="0.7"/><rect x="578.8" y="401.9" width="1.70" height="7.5" fill="#163a18"/><rect x="579.2" y="402.7" width="0.7" height="5.9" fill="#2a562c" fill-opacity="0.5"/><rect x="581.0" y="401.4" width="1.70" height="8.2" fill="#226222"/><rect x="583.2" y="401.8" width="1.70" height="8.2" fill="#226222"/><rect x="583.6" y="402.6" width="0.7" height="6.6" fill="#4a944a" fill-opacity="0.5"/><rect x="585.4" y="401.6" width="1.70" height="7.8" fill="#226222"/><rect x="585.8" y="402.4" width="0.7" height="6.2" fill="#4a944a" fill-opacity="1.0"/><rect x="589.8" y="400.3" width="1.70" height="8.3" fill="#226222"/><rect x="590.2" y="401.1" width="0.7" height="6.7" fill="#4a944a" fill-opacity="0.5"/><rect x="592.0" y="400.2" width="1.70" height="8.4" fill="#226222"/><rect x="596.4" y="401.4" width="1.70" height="8.2" fill="#163a18"/><rect x="596.8" y="402.2" width="0.7" height="6.6" fill="#2a562c" fill-opacity="0.5"/><rect x="598.6" y="401.7" width="1.70" height="8.3" fill="#163a18"/><rect x="599.0" y="402.5" width="0.7" height="6.7" fill="#2a562c" fill-opacity="0.5"/><rect x="600.8" y="402.2" width="1.70" height="7.0" fill="#163a18"/><rect x="601.2" y="403.0" width="0.7" height="5.4" fill="#2a562c" fill-opacity="0.5"/><rect x="603.0" y="401.5" width="1.70" height="7.5" fill="#226222"/><rect x="603.4" y="402.3" width="0.7" height="5.9" fill="#4a944a" fill-opacity="0.7"/><rect x="605.2" y="400.6" width="1.70" height="7.5" fill="#163a18"/><rect x="607.4" y="400.3" width="1.70" height="7.8" fill="#226222"/><rect x="607.8" y="401.1" width="0.7" height="6.2" fill="#4a944a" fill-opacity="0.9"/><rect x="609.6" y="400.8" width="1.70" height="7.3" fill="#163a18"/><rect x="610.0" y="401.6" width="0.7" height="5.7" fill="#2a562c" fill-opacity="0.9"/><rect x="611.8" y="401.0" width="1.70" height="7.9" fill="#163a18"/><rect x="614.0" y="401.7" width="1.70" height="7.8" fill="#163a18"/><rect x="616.2" y="401.6" width="1.70" height="7.8" fill="#226222"/><rect x="616.6" y="402.4" width="0.7" height="6.2" fill="#4a944a" fill-opacity="0.9"/><rect x="620.6" y="401.4" width="1.70" height="8.1" fill="#226222"/><rect x="621.0" y="402.2" width="0.7" height="6.5" fill="#4a944a" fill-opacity="0.5"/><rect x="625.0" y="400.4" width="1.70" height="7.8" fill="#163a18"/><rect x="625.4" y="401.2" width="0.7" height="6.2" fill="#2a562c" fill-opacity="0.7"/><rect x="627.2" y="400.4" width="1.70" height="7.9" fill="#163a18"/><rect x="627.6" y="401.2" width="0.7" height="6.3" fill="#2a562c" fill-opacity="1.0"/><rect x="629.4" y="400.2" width="1.70" height="8.5" fill="#163a18"/><rect x="629.8" y="401.0" width="0.7" height="6.9" fill="#2a562c" fill-opacity="1.0"/><rect x="631.6" y="401.2" width="1.70" height="8.3" fill="#163a18"/><rect x="632.0" y="402.0" width="0.7" height="6.7" fill="#2a562c" fill-opacity="0.5"/><rect x="636.0" y="401.9" width="1.70" height="8.3" fill="#163a18"/><rect x="636.4" y="402.7" width="0.7" height="6.7" fill="#2a562c" fill-opacity="1.0"/><rect x="638.2" y="401.3" width="1.70" height="8.5" fill="#163a18"/><rect x="638.6" y="402.1" width="0.7" height="6.9" fill="#2a562c" fill-opacity="0.9"/><rect x="640.4" y="400.6" width="1.70" height="8.5" fill="#226222"/><rect x="640.8" y="401.4" width="0.7" height="6.9" fill="#4a944a" fill-opacity="0.5"/><rect x="642.6" y="400.1" width="1.70" height="8.4" fill="#226222"/><rect x="643.0" y="400.9" width="0.7" height="6.8" fill="#4a944a" fill-opacity="0.5"/><rect x="644.8" y="400.5" width="1.70" height="7.2" fill="#226222"/><rect x="645.2" y="401.3" width="0.7" height="5.6" fill="#4a944a" fill-opacity="1.0"/><rect x="647.0" y="400.5" width="1.70" height="7.5" fill="#226222"/><rect x="647.4" y="401.3" width="0.7" height="5.9" fill="#4a944a" fill-opacity="0.7"/><rect x="649.2" y="400.9" width="1.70" height="8.0" fill="#226222"/><rect x="649.6" y="401.7" width="0.7" height="6.4" fill="#4a944a" fill-opacity="0.5"/><rect x="651.4" y="402.0" width="1.70" height="7.2" fill="#163a18"/><rect x="651.8" y="402.8" width="0.7" height="5.6" fill="#2a562c" fill-opacity="0.5"/><rect x="653.6" y="402.2" width="1.70" height="7.2" fill="#226222"/><rect x="655.8" y="401.9" width="1.70" height="7.2" fill="#226222"/><rect x="660.2" y="400.4" width="1.70" height="8.3" fill="#226222"/><rect x="660.6" y="401.2" width="0.7" height="6.7" fill="#4a944a" fill-opacity="1.0"/><rect x="662.4" y="400.6" width="1.70" height="7.8" fill="#163a18"/><rect x="662.8" y="401.4" width="0.7" height="6.2" fill="#2a562c" fill-opacity="1.0"/><rect x="664.6" y="400.0" width="1.70" height="8.2" fill="#226222"/><rect x="665.0" y="400.8" width="0.7" height="6.6" fill="#4a944a" fill-opacity="0.7"/><rect x="666.8" y="401.1" width="1.70" height="8.3" fill="#163a18"/><rect x="671.2" y="402.0" width="1.70" height="8.1" fill="#226222"/><rect x="673.4" y="401.7" width="1.70" height="8.1" fill="#163a18"/><rect x="673.8" y="402.5" width="0.7" height="6.5" fill="#2a562c" fill-opacity="0.5"/><rect x="675.6" y="401.5" width="1.70" height="7.5" fill="#226222"/><rect x="676.0" y="402.3" width="0.7" height="5.9" fill="#4a944a" fill-opacity="0.7"/><rect x="677.8" y="400.9" width="1.70" height="7.8" fill="#163a18"/><rect x="678.2" y="401.7" width="0.7" height="6.2" fill="#2a562c" fill-opacity="0.7"/><rect x="682.2" y="400.4" width="1.70" height="7.8" fill="#163a18"/><rect x="684.4" y="400.8" width="1.60" height="7.9" fill="#226222"/><rect x="684.8" y="401.6" width="0.7" height="6.3" fill="#4a944a" fill-opacity="0.9"/><rect x="702.2" y="401.4" width="1.70" height="8.3" fill="#226222"/><rect x="704.4" y="401.7" width="1.70" height="8.3" fill="#226222"/><rect x="704.8" y="402.5" width="0.7" height="6.7" fill="#4a944a" fill-opacity="0.5"/><rect x="706.6" y="401.3" width="1.70" height="7.9" fill="#163a18"/><rect x="708.8" y="401.3" width="1.70" height="7.1" fill="#163a18"/><rect x="709.2" y="402.1" width="0.7" height="5.5" fill="#2a562c" fill-opacity="1.0"/><rect x="711.0" y="400.1" width="1.70" height="8.3" fill="#226222"/><rect x="711.4" y="400.9" width="0.7" height="6.7" fill="#4a944a" fill-opacity="1.0"/><rect x="713.2" y="400.3" width="1.70" height="7.8" fill="#226222"/><rect x="715.4" y="400.1" width="1.70" height="7.8" fill="#226222"/><rect x="715.8" y="400.9" width="0.7" height="6.2" fill="#4a944a" fill-opacity="0.5"/><rect x="717.6" y="401.0" width="1.70" height="7.5" fill="#226222"/><rect x="718.0" y="401.8" width="0.7" height="5.9" fill="#4a944a" fill-opacity="0.9"/><rect x="719.8" y="401.1" width="1.70" height="8.5" fill="#226222"/><rect x="720.2" y="401.9" width="0.7" height="6.9" fill="#4a944a" fill-opacity="1.0"/><rect x="722.0" y="402.3" width="1.70" height="7.4" fill="#163a18"/><rect x="722.4" y="403.1" width="0.7" height="5.8" fill="#2a562c" fill-opacity="0.7"/><rect x="724.2" y="401.7" width="1.70" height="7.8" fill="#226222"/><rect x="724.6" y="402.5" width="0.7" height="6.2" fill="#4a944a" fill-opacity="0.9"/><rect x="726.4" y="401.1" width="1.70" height="7.6" fill="#226222"/><rect x="726.8" y="401.9" width="0.7" height="6.0" fill="#4a944a" fill-opacity="0.7"/><rect x="730.8" y="400.2" width="1.70" height="8.0" fill="#163a18"/><rect x="731.2" y="401.0" width="0.7" height="6.4" fill="#2a562c" fill-opacity="0.5"/><rect x="735.2" y="400.5" width="1.70" height="8.1" fill="#163a18"/><rect x="735.6" y="401.3" width="0.7" height="6.5" fill="#2a562c" fill-opacity="1.0"/><rect x="737.4" y="401.9" width="1.70" height="7.3" fill="#163a18"/><rect x="737.8" y="402.7" width="0.7" height="5.7" fill="#2a562c" fill-opacity="0.7"/><rect x="739.6" y="402.0" width="1.70" height="8.1" fill="#226222"/><rect x="740.0" y="402.8" width="0.7" height="6.5" fill="#4a944a" fill-opacity="1.0"/><rect x="741.8" y="402.0" width="1.70" height="8.0" fill="#163a18"/><rect x="742.2" y="402.8" width="0.7" height="6.4" fill="#2a562c" fill-opacity="0.7"/><rect x="744.0" y="401.6" width="1.70" height="7.5" fill="#226222"/><rect x="744.4" y="402.4" width="0.7" height="5.9" fill="#4a944a" fill-opacity="1.0"/><rect x="750.6" y="400.6" width="1.70" height="7.7" fill="#226222"/><rect x="751.0" y="401.4" width="0.7" height="6.1" fill="#4a944a" fill-opacity="1.0"/><rect x="752.8" y="401.1" width="1.70" height="7.7" fill="#163a18"/><rect x="753.2" y="401.9" width="0.7" height="6.1" fill="#2a562c" fill-opacity="0.7"/><rect x="755.0" y="401.9" width="1.70" height="7.2" fill="#163a18"/><rect x="755.4" y="402.7" width="0.7" height="5.6" fill="#2a562c" fill-opacity="0.7"/><rect x="757.2" y="402.0" width="1.70" height="7.0" fill="#163a18"/><rect x="759.4" y="402.3" width="1.70" height="7.7" fill="#226222"/><rect x="759.8" y="403.1" width="0.7" height="6.1" fill="#4a944a" fill-opacity="0.5"/><rect x="763.8" y="400.9" width="1.70" height="7.2" fill="#163a18"/><rect x="764.2" y="401.7" width="0.7" height="5.6" fill="#2a562c" fill-opacity="0.5"/><rect x="768.2" y="399.8" width="1.70" height="8.2" fill="#226222"/><rect x="768.6" y="400.6" width="0.7" height="6.6" fill="#4a944a" fill-opacity="1.0"/><rect x="770.4" y="400.8" width="1.70" height="7.7" fill="#163a18"/><rect x="770.8" y="401.6" width="0.7" height="6.1" fill="#2a562c" fill-opacity="0.9"/><rect x="774.8" y="402.4" width="1.70" height="7.1" fill="#163a18"/><rect x="777.0" y="401.6" width="1.70" height="8.4" fill="#163a18"/><rect x="777.4" y="402.4" width="0.7" height="6.8" fill="#2a562c" fill-opacity="0.5"/><rect x="779.2" y="401.5" width="1.70" height="8.3" fill="#226222"/><rect x="779.6" y="402.3" width="0.7" height="6.7" fill="#4a944a" fill-opacity="0.9"/><rect x="781.4" y="401.2" width="1.70" height="7.9" fill="#163a18"/><rect x="781.8" y="402.0" width="0.7" height="6.3" fill="#2a562c" fill-opacity="0.5"/><rect x="783.6" y="399.9" width="1.70" height="8.5" fill="#163a18"/><rect x="784.0" y="400.7" width="0.7" height="6.9" fill="#2a562c" fill-opacity="0.5"/><rect x="785.8" y="400.0" width="1.70" height="8.1" fill="#226222"/><rect x="786.2" y="400.8" width="0.7" height="6.5" fill="#4a944a" fill-opacity="0.9"/><rect x="790.2" y="401.2" width="1.70" height="7.1" fill="#226222"/><rect x="790.6" y="402.0" width="0.7" height="5.5" fill="#4a944a" fill-opacity="0.9"/><rect x="792.4" y="401.7" width="1.70" height="7.9" fill="#163a18"/><rect x="792.8" y="402.5" width="0.7" height="6.3" fill="#2a562c" fill-opacity="1.0"/><rect x="799.0" y="401.3" width="1.70" height="8.1" fill="#163a18"/><rect x="799.4" y="402.1" width="0.7" height="6.5" fill="#2a562c" fill-opacity="0.9"/><rect x="801.2" y="400.2" width="1.70" height="8.4" fill="#163a18"/><rect x="801.6" y="401.0" width="0.7" height="6.8" fill="#2a562c" fill-opacity="1.0"/><rect x="807.8" y="401.0" width="1.70" height="7.9" fill="#163a18"/><rect x="808.2" y="401.8" width="0.7" height="6.3" fill="#2a562c" fill-opacity="1.0"/><rect x="810.0" y="401.8" width="1.70" height="7.7" fill="#226222"/><rect x="810.4" y="402.6" width="0.7" height="6.1" fill="#4a944a" fill-opacity="0.9"/><rect x="814.4" y="402.0" width="1.70" height="7.2" fill="#226222"/><rect x="814.8" y="402.8" width="0.7" height="5.6" fill="#4a944a" fill-opacity="0.9"/><rect x="816.6" y="401.6" width="1.70" height="7.1" fill="#226222"/><rect x="817.0" y="402.4" width="0.7" height="5.5" fill="#4a944a" fill-opacity="1.0"/><rect x="821.0" y="401.0" width="1.70" height="7.1" fill="#226222"/><rect x="821.4" y="401.8" width="0.7" height="5.5" fill="#4a944a" fill-opacity="0.7"/><rect x="823.2" y="400.2" width="1.70" height="8.5" fill="#163a18"/><rect x="823.6" y="401.0" width="0.7" height="6.9" fill="#2a562c" fill-opacity="1.0"/><rect x="829.8" y="401.8" width="1.70" height="7.6" fill="#226222"/><rect x="832.0" y="401.4" width="1.70" height="8.1" fill="#226222"/><rect x="832.4" y="402.2" width="0.7" height="6.5" fill="#4a944a" fill-opacity="1.0"/><rect x="834.2" y="401.8" width="1.70" height="7.0" fill="#226222"/><rect x="834.6" y="402.6" width="0.7" height="5.4" fill="#4a944a" fill-opacity="0.5"/><rect x="836.4" y="401.0" width="1.70" height="7.4" fill="#163a18"/><rect x="836.8" y="401.8" width="0.7" height="5.8" fill="#2a562c" fill-opacity="0.9"/><rect x="838.6" y="400.4" width="1.70" height="7.5" fill="#163a18"/><rect x="839.0" y="401.2" width="0.7" height="5.9" fill="#2a562c" fill-opacity="0.5"/><rect x="843.0" y="400.7" width="1.70" height="7.9" fill="#226222"/><rect x="843.4" y="401.5" width="0.7" height="6.3" fill="#4a944a" fill-opacity="0.7"/><rect x="845.2" y="401.7" width="1.70" height="7.0" fill="#163a18"/><rect x="845.6" y="402.5" width="0.7" height="5.4" fill="#2a562c" fill-opacity="0.7"/><rect x="847.4" y="401.8" width="1.70" height="8.2" fill="#163a18"/><rect x="849.6" y="401.3" width="1.70" height="8.2" fill="#226222"/><rect x="850.0" y="402.1" width="0.7" height="6.6" fill="#4a944a" fill-opacity="0.7"/><rect x="851.8" y="402.0" width="1.70" height="7.2" fill="#226222"/><rect x="852.2" y="402.8" width="0.7" height="5.6" fill="#4a944a" fill-opacity="0.9"/><rect x="854.0" y="401.0" width="1.70" height="8.0" fill="#163a18"/><rect x="858.4" y="401.0" width="1.70" height="7.0" fill="#163a18"/><rect x="858.8" y="401.8" width="0.7" height="5.4" fill="#2a562c" fill-opacity="1.0"/><rect x="860.6" y="400.6" width="1.70" height="8.0" fill="#163a18"/><rect x="861.0" y="401.4" width="0.7" height="6.4" fill="#2a562c" fill-opacity="0.7"/><rect x="862.8" y="401.5" width="1.70" height="7.0" fill="#163a18"/><rect x="863.2" y="402.3" width="0.7" height="5.4" fill="#2a562c" fill-opacity="0.9"/><rect x="865.0" y="401.7" width="1.70" height="8.1" fill="#226222"/><rect x="865.4" y="402.5" width="0.7" height="6.5" fill="#4a944a" fill-opacity="1.0"/><rect x="867.2" y="402.1" width="1.70" height="7.1" fill="#226222"/><rect x="867.6" y="402.9" width="0.7" height="5.5" fill="#4a944a" fill-opacity="1.0"/><rect x="873.8" y="400.6" width="1.20" height="7.8" fill="#226222"/><rect x="205.0" y="450.7" width="1.70" height="8.4" fill="#2020d8"/><rect x="205.4" y="451.5" width="0.7" height="6.8" fill="#6060ff" fill-opacity="0.9"/><rect x="207.2" y="450.0" width="1.70" height="9.4" fill="#2020d8"/><rect x="207.6" y="450.8" width="0.7" height="7.8" fill="#6060ff" fill-opacity="0.9"/><rect x="209.4" y="450.5" width="1.70" height="9.3" fill="#2020d8"/><rect x="211.6" y="451.0" width="1.70" height="8.3" fill="#2020d8"/><rect x="213.8" y="451.0" width="1.70" height="9.0" fill="#2020d8"/><rect x="214.2" y="451.8" width="0.7" height="7.4" fill="#6060ff" fill-opacity="0.9"/><rect x="216.0" y="450.8" width="1.70" height="8.4" fill="#2020d8"/><rect x="216.4" y="451.6" width="0.7" height="6.8" fill="#6060ff" fill-opacity="0.9"/><rect x="218.2" y="450.1" width="1.70" height="9.4" fill="#2020d8"/><rect x="220.4" y="450.0" width="1.70" height="8.6" fill="#2020d8"/><rect x="220.8" y="450.8" width="0.7" height="7.0" fill="#6060ff" fill-opacity="0.7"/><rect x="222.6" y="449.7" width="1.70" height="8.4" fill="#2020d8"/><rect x="223.0" y="450.5" width="0.7" height="6.8" fill="#6060ff" fill-opacity="0.7"/><rect x="224.8" y="449.0" width="1.70" height="9.0" fill="#2020d8"/><rect x="227.0" y="448.9" width="1.70" height="9.3" fill="#2020d8"/><rect x="227.4" y="449.7" width="0.7" height="7.7" fill="#6060ff" fill-opacity="1.0"/><rect x="229.2" y="449.8" width="1.70" height="8.4" fill="#2020d8"/><rect x="229.6" y="450.6" width="0.7" height="6.8" fill="#6060ff" fill-opacity="0.5"/><rect x="231.4" y="449.7" width="1.70" height="8.7" fill="#1818b4"/><rect x="231.8" y="450.5" width="0.7" height="7.1" fill="#3434d8" fill-opacity="0.5"/><rect x="233.6" y="449.8" width="1.70" height="8.7" fill="#1818b4"/><rect x="234.0" y="450.6" width="0.7" height="7.1" fill="#3434d8" fill-opacity="1.0"/><rect x="235.8" y="450.3" width="1.70" height="8.5" fill="#2020d8"/><rect x="236.2" y="451.1" width="0.7" height="6.9" fill="#6060ff" fill-opacity="0.9"/><rect x="238.0" y="450.5" width="1.70" height="9.5" fill="#2020d8"/><rect x="240.2" y="451.3" width="1.70" height="8.1" fill="#1818b4"/><rect x="240.6" y="452.1" width="0.7" height="6.5" fill="#3434d8" fill-opacity="0.7"/><rect x="242.4" y="450.6" width="1.70" height="9.4" fill="#1818b4"/><rect x="242.8" y="451.4" width="0.7" height="7.8" fill="#3434d8" fill-opacity="0.9"/><rect x="244.6" y="451.1" width="1.70" height="8.3" fill="#2020d8"/><rect x="245.0" y="451.9" width="0.7" height="6.7" fill="#6060ff" fill-opacity="0.7"/><rect x="246.8" y="450.9" width="1.70" height="8.4" fill="#2020d8"/><rect x="247.2" y="451.7" width="0.7" height="6.8" fill="#6060ff" fill-opacity="1.0"/><rect x="249.0" y="450.0" width="1.70" height="9.0" fill="#2020d8"/><rect x="249.4" y="450.8" width="0.7" height="7.4" fill="#6060ff" fill-opacity="0.9"/><rect x="251.2" y="449.9" width="1.70" height="9.4" fill="#1818b4"/><rect x="251.6" y="450.7" width="0.7" height="7.8" fill="#3434d8" fill-opacity="0.7"/><rect x="253.4" y="450.1" width="1.70" height="8.0" fill="#2020d8"/><rect x="253.8" y="450.9" width="0.7" height="6.4" fill="#6060ff" fill-opacity="1.0"/><rect x="255.6" y="448.9" width="1.70" height="9.5" fill="#2020d8"/><rect x="257.8" y="449.4" width="1.70" height="8.1" fill="#2020d8"/><rect x="258.2" y="450.2" width="0.7" height="6.5" fill="#6060ff" fill-opacity="0.9"/><rect x="260.0" y="449.3" width="1.70" height="8.7" fill="#2020d8"/><rect x="260.4" y="450.1" width="0.7" height="7.1" fill="#6060ff" fill-opacity="0.5"/><rect x="262.2" y="450.2" width="1.70" height="8.3" fill="#2020d8"/><rect x="262.6" y="451.0" width="0.7" height="6.7" fill="#6060ff" fill-opacity="0.7"/><rect x="264.4" y="449.6" width="1.70" height="9.4" fill="#2020d8"/><rect x="264.8" y="450.4" width="0.7" height="7.8" fill="#6060ff" fill-opacity="0.5"/><rect x="266.6" y="450.6" width="1.70" height="8.9" fill="#2020d8"/><rect x="267.0" y="451.4" width="0.7" height="7.3" fill="#6060ff" fill-opacity="0.9"/><rect x="268.8" y="451.1" width="1.70" height="8.4" fill="#1818b4"/><rect x="269.2" y="451.9" width="0.7" height="6.8" fill="#3434d8" fill-opacity="0.5"/><rect x="271.0" y="450.5" width="1.70" height="9.4" fill="#2020d8"/><rect x="271.4" y="451.3" width="0.7" height="7.8" fill="#6060ff" fill-opacity="0.9"/><rect x="273.2" y="450.8" width="1.70" height="9.1" fill="#1818b4"/><rect x="273.6" y="451.6" width="0.7" height="7.5" fill="#3434d8" fill-opacity="0.5"/><rect x="275.4" y="451.0" width="1.70" height="8.6" fill="#2020d8"/><rect x="277.6" y="451.2" width="1.70" height="8.4" fill="#2020d8"/><rect x="279.8" y="450.8" width="1.70" height="8.2" fill="#1818b4"/><rect x="280.2" y="451.6" width="0.7" height="6.6" fill="#3434d8" fill-opacity="0.7"/><rect x="282.0" y="449.9" width="1.70" height="8.2" fill="#2020d8"/><rect x="282.4" y="450.7" width="0.7" height="6.6" fill="#6060ff" fill-opacity="0.5"/><rect x="284.2" y="449.6" width="1.70" height="8.8" fill="#2020d8"/><rect x="284.6" y="450.4" width="0.7" height="7.2" fill="#6060ff" fill-opacity="0.9"/><rect x="286.4" y="449.6" width="1.70" height="8.6" fill="#2020d8"/><rect x="286.8" y="450.4" width="0.7" height="7.0" fill="#6060ff" fill-opacity="0.9"/><rect x="288.6" y="449.3" width="1.70" height="8.6" fill="#2020d8"/><rect x="290.8" y="449.1" width="1.70" height="9.4" fill="#2020d8"/><rect x="291.2" y="449.9" width="0.7" height="7.8" fill="#6060ff" fill-opacity="1.0"/><rect x="293.0" y="450.2" width="1.70" height="8.3" fill="#1818b4"/><rect x="293.4" y="451.0" width="0.7" height="6.7" fill="#3434d8" fill-opacity="1.0"/><rect x="295.2" y="450.1" width="1.70" height="9.4" fill="#2020d8"/><rect x="297.4" y="450.6" width="1.70" height="9.5" fill="#2020d8"/><rect x="297.8" y="451.4" width="0.7" height="7.9" fill="#6060ff" fill-opacity="0.9"/><rect x="299.6" y="450.5" width="1.70" height="9.1" fill="#2020d8"/><rect x="300.0" y="451.3" width="0.7" height="7.5" fill="#6060ff" fill-opacity="0.7"/><rect x="301.8" y="450.6" width="1.70" height="9.5" fill="#2020d8"/><rect x="302.2" y="451.4" width="0.7" height="7.9" fill="#6060ff" fill-opacity="0.7"/><rect x="304.0" y="451.3" width="1.70" height="8.9" fill="#2020d8"/><rect x="304.4" y="452.1" width="0.7" height="7.3" fill="#6060ff" fill-opacity="0.5"/><rect x="306.2" y="451.0" width="1.70" height="8.5" fill="#2020d8"/><rect x="306.6" y="451.8" width="0.7" height="6.9" fill="#6060ff" fill-opacity="0.5"/><rect x="308.4" y="450.5" width="1.70" height="9.0" fill="#2020d8"/><rect x="308.8" y="451.3" width="0.7" height="7.4" fill="#6060ff" fill-opacity="0.5"/><rect x="310.6" y="450.0" width="1.70" height="9.3" fill="#2020d8"/><rect x="311.0" y="450.8" width="0.7" height="7.7" fill="#6060ff" fill-opacity="0.9"/><rect x="312.8" y="449.3" width="1.70" height="9.1" fill="#2020d8"/><rect x="313.2" y="450.1" width="0.7" height="7.5" fill="#6060ff" fill-opacity="0.7"/><rect x="315.0" y="449.3" width="1.70" height="9.0" fill="#1818b4"/><rect x="315.4" y="450.1" width="0.7" height="7.4" fill="#3434d8" fill-opacity="1.0"/><rect x="317.2" y="449.2" width="1.70" height="9.1" fill="#1818b4"/><rect x="317.6" y="450.0" width="0.7" height="7.5" fill="#3434d8" fill-opacity="1.0"/><rect x="319.4" y="449.3" width="1.70" height="8.4" fill="#2020d8"/><rect x="319.8" y="450.1" width="0.7" height="6.8" fill="#6060ff" fill-opacity="0.9"/><rect x="321.6" y="450.3" width="1.70" height="8.0" fill="#2020d8"/><rect x="322.0" y="451.1" width="0.7" height="6.4" fill="#6060ff" fill-opacity="1.0"/><rect x="323.8" y="449.9" width="1.70" height="8.8" fill="#1818b4"/><rect x="324.2" y="450.7" width="0.7" height="7.2" fill="#3434d8" fill-opacity="0.5"/><rect x="326.0" y="450.0" width="1.70" height="9.4" fill="#2020d8"/><rect x="326.4" y="450.8" width="0.7" height="7.8" fill="#6060ff" fill-opacity="0.7"/><rect x="328.2" y="451.1" width="1.70" height="8.4" fill="#2020d8"/><rect x="328.6" y="451.9" width="0.7" height="6.8" fill="#6060ff" fill-opacity="0.7"/><rect x="330.4" y="450.5" width="1.70" height="9.4" fill="#2020d8"/><rect x="330.8" y="451.3" width="0.7" height="7.8" fill="#6060ff" fill-opacity="1.0"/><rect x="332.6" y="451.2" width="1.70" height="8.4" fill="#2020d8"/><rect x="333.0" y="452.0" width="0.7" height="6.8" fill="#6060ff" fill-opacity="0.7"/><rect x="334.8" y="450.7" width="1.70" height="8.9" fill="#2020d8"/><rect x="335.2" y="451.5" width="0.7" height="7.3" fill="#6060ff" fill-opacity="0.5"/><rect x="337.0" y="450.9" width="1.70" height="8.1" fill="#2020d8"/><rect x="337.4" y="451.7" width="0.7" height="6.5" fill="#6060ff" fill-opacity="0.5"/><rect x="339.2" y="450.7" width="1.70" height="8.2" fill="#1818b4"/><rect x="339.6" y="451.5" width="0.7" height="6.6" fill="#3434d8" fill-opacity="0.9"/><rect x="341.4" y="450.1" width="1.70" height="8.5" fill="#2020d8"/><rect x="341.8" y="450.9" width="0.7" height="6.9" fill="#6060ff" fill-opacity="0.9"/><rect x="343.6" y="449.4" width="1.70" height="9.0" fill="#2020d8"/><rect x="344.0" y="450.2" width="0.7" height="7.4" fill="#6060ff" fill-opacity="0.9"/><rect x="345.8" y="449.1" width="1.70" height="9.0" fill="#2020d8"/><rect x="346.2" y="449.9" width="0.7" height="7.4" fill="#6060ff" fill-opacity="0.9"/><rect x="348.0" y="449.1" width="1.70" height="9.1" fill="#2020d8"/><rect x="348.4" y="449.9" width="0.7" height="7.5" fill="#6060ff" fill-opacity="0.7"/><rect x="350.2" y="449.1" width="1.70" height="9.2" fill="#2020d8"/><rect x="350.6" y="449.9" width="0.7" height="7.6" fill="#6060ff" fill-opacity="0.7"/><rect x="352.4" y="449.2" width="1.70" height="9.4" fill="#2020d8"/><rect x="354.6" y="449.9" width="1.70" height="8.8" fill="#1818b4"/><rect x="355.0" y="450.7" width="0.7" height="7.2" fill="#3434d8" fill-opacity="0.7"/><rect x="356.8" y="450.7" width="1.70" height="8.1" fill="#2020d8"/><rect x="357.2" y="451.5" width="0.7" height="6.5" fill="#6060ff" fill-opacity="0.5"/><rect x="359.0" y="451.1" width="1.70" height="8.8" fill="#1818b4"/><rect x="359.4" y="451.9" width="0.7" height="7.2" fill="#3434d8" fill-opacity="0.5"/><rect x="361.2" y="451.2" width="1.70" height="8.8" fill="#2020d8"/><rect x="361.6" y="452.0" width="0.7" height="7.2" fill="#6060ff" fill-opacity="0.7"/><rect x="363.4" y="451.0" width="1.70" height="9.0" fill="#1818b4"/><rect x="363.8" y="451.8" width="0.7" height="7.4" fill="#3434d8" fill-opacity="1.0"/><rect x="365.6" y="451.3" width="1.70" height="8.1" fill="#2020d8"/><rect x="366.0" y="452.1" width="0.7" height="6.5" fill="#6060ff" fill-opacity="1.0"/><rect x="367.8" y="450.6" width="1.70" height="9.2" fill="#1818b4"/><rect x="368.2" y="451.4" width="0.7" height="7.6" fill="#3434d8" fill-opacity="1.0"/><rect x="370.0" y="450.2" width="1.70" height="9.1" fill="#2020d8"/><rect x="370.4" y="451.0" width="0.7" height="7.5" fill="#6060ff" fill-opacity="0.9"/><rect x="372.2" y="449.5" width="1.70" height="9.2" fill="#2020d8"/><rect x="372.6" y="450.3" width="0.7" height="7.6" fill="#6060ff" fill-opacity="0.5"/><rect x="374.4" y="449.7" width="1.70" height="8.6" fill="#1818b4"/><rect x="374.8" y="450.5" width="0.7" height="7.0" fill="#3434d8" fill-opacity="1.0"/><rect x="376.6" y="449.7" width="1.70" height="8.1" fill="#2020d8"/><rect x="378.8" y="449.5" width="1.70" height="8.3" fill="#2020d8"/><rect x="379.2" y="450.3" width="0.7" height="6.7" fill="#6060ff" fill-opacity="0.7"/><rect x="381.0" y="449.1" width="1.70" height="9.2" fill="#2020d8"/><rect x="381.4" y="449.9" width="0.7" height="7.6" fill="#6060ff" fill-opacity="0.5"/><rect x="383.2" y="450.0" width="1.70" height="8.4" fill="#2020d8"/><rect x="383.6" y="450.8" width="0.7" height="6.8" fill="#6060ff" fill-opacity="0.5"/><rect x="385.4" y="450.5" width="1.70" height="8.9" fill="#2020d8"/><rect x="385.8" y="451.3" width="0.7" height="7.3" fill="#6060ff" fill-opacity="0.7"/><rect x="387.6" y="450.8" width="1.70" height="8.0" fill="#2020d8"/><rect x="388.0" y="451.6" width="0.7" height="6.4" fill="#6060ff" fill-opacity="0.7"/><rect x="389.8" y="450.8" width="1.70" height="9.3" fill="#2020d8"/><rect x="392.0" y="451.5" width="1.70" height="8.4" fill="#2020d8"/><rect x="392.4" y="452.3" width="0.7" height="6.8" fill="#6060ff" fill-opacity="0.7"/><rect x="394.2" y="450.6" width="1.70" height="9.4" fill="#2020d8"/><rect x="394.6" y="451.4" width="0.7" height="7.8" fill="#6060ff" fill-opacity="0.5"/><rect x="396.4" y="450.6" width="1.70" height="9.4" fill="#2020d8"/><rect x="398.6" y="451.0" width="1.70" height="8.3" fill="#1818b4"/><rect x="399.0" y="451.8" width="0.7" height="6.7" fill="#3434d8" fill-opacity="0.7"/><rect x="400.8" y="449.7" width="1.70" height="9.3" fill="#2020d8"/><rect x="401.2" y="450.5" width="0.7" height="7.7" fill="#6060ff" fill-opacity="0.7"/><rect x="403.0" y="450.2" width="1.70" height="8.3" fill="#1818b4"/><rect x="403.4" y="451.0" width="0.7" height="6.7" fill="#3434d8" fill-opacity="0.9"/><rect x="405.2" y="449.7" width="1.70" height="8.8" fill="#2020d8"/><rect x="407.4" y="449.3" width="1.70" height="9.4" fill="#2020d8"/><rect x="407.8" y="450.1" width="0.7" height="7.8" fill="#6060ff" fill-opacity="0.5"/><rect x="409.6" y="449.3" width="1.70" height="8.5" fill="#2020d8"/><rect x="410.0" y="450.1" width="0.7" height="6.9" fill="#6060ff" fill-opacity="1.0"/><rect x="411.8" y="450.3" width="1.70" height="8.0" fill="#2020d8"/><rect x="412.2" y="451.1" width="0.7" height="6.4" fill="#6060ff" fill-opacity="1.0"/><rect x="414.0" y="450.2" width="1.70" height="9.0" fill="#1818b4"/><rect x="414.4" y="451.0" width="0.7" height="7.4" fill="#3434d8" fill-opacity="0.5"/><rect x="416.2" y="450.2" width="1.70" height="9.3" fill="#2020d8"/><rect x="416.6" y="451.0" width="0.7" height="7.7" fill="#6060ff" fill-opacity="0.7"/><rect x="418.4" y="451.0" width="1.70" height="8.9" fill="#2020d8"/><rect x="418.8" y="451.8" width="0.7" height="7.3" fill="#6060ff" fill-opacity="1.0"/><rect x="420.6" y="451.2" width="1.70" height="9.0" fill="#2020d8"/><rect x="421.0" y="452.0" width="0.7" height="7.4" fill="#6060ff" fill-opacity="0.7"/><rect x="422.8" y="451.0" width="1.70" height="9.3" fill="#2020d8"/><rect x="423.2" y="451.8" width="0.7" height="7.7" fill="#6060ff" fill-opacity="1.0"/><rect x="425.0" y="450.9" width="1.70" height="8.2" fill="#2020d8"/><rect x="427.2" y="450.5" width="1.70" height="9.1" fill="#2020d8"/><rect x="427.6" y="451.3" width="0.7" height="7.5" fill="#6060ff" fill-opacity="1.0"/><rect x="429.4" y="450.7" width="1.70" height="8.7" fill="#2020d8"/><rect x="429.8" y="451.5" width="0.7" height="7.1" fill="#6060ff" fill-opacity="1.0"/><rect x="431.6" y="449.9" width="1.70" height="8.5" fill="#2020d8"/><rect x="432.0" y="450.7" width="0.7" height="6.9" fill="#6060ff" fill-opacity="0.9"/><rect x="433.8" y="449.0" width="1.70" height="9.3" fill="#2020d8"/><rect x="434.2" y="449.8" width="0.7" height="7.7" fill="#6060ff" fill-opacity="0.5"/><rect x="436.0" y="449.8" width="1.70" height="8.3" fill="#2020d8"/><rect x="438.2" y="449.7" width="1.70" height="8.5" fill="#2020d8"/><rect x="440.4" y="449.2" width="1.70" height="9.3" fill="#1818b4"/><rect x="442.6" y="450.0" width="1.70" height="8.8" fill="#2020d8"/><rect x="443.0" y="450.8" width="0.7" height="7.2" fill="#6060ff" fill-opacity="0.5"/><rect x="444.8" y="450.4" width="1.70" height="8.4" fill="#2020d8"/><rect x="445.2" y="451.2" width="0.7" height="6.8" fill="#6060ff" fill-opacity="0.5"/><rect x="447.0" y="450.1" width="1.70" height="9.2" fill="#2020d8"/><rect x="449.2" y="451.1" width="1.70" height="8.8" fill="#1818b4"/><rect x="449.6" y="451.9" width="0.7" height="7.2" fill="#3434d8" fill-opacity="0.9"/><rect x="451.4" y="451.0" width="1.70" height="9.5" fill="#1818b4"/><rect x="451.8" y="451.8" width="0.7" height="7.9" fill="#3434d8" fill-opacity="1.0"/><rect x="453.6" y="451.4" width="1.70" height="8.4" fill="#2020d8"/><rect x="455.8" y="451.3" width="1.70" height="8.7" fill="#1818b4"/><rect x="456.2" y="452.1" width="0.7" height="7.1" fill="#3434d8" fill-opacity="1.0"/><rect x="458.0" y="450.7" width="1.70" height="8.5" fill="#2020d8"/><rect x="458.4" y="451.5" width="0.7" height="6.9" fill="#6060ff" fill-opacity="0.9"/><rect x="460.2" y="450.6" width="1.70" height="8.4" fill="#2020d8"/><rect x="460.6" y="451.4" width="0.7" height="6.8" fill="#6060ff" fill-opacity="0.9"/><rect x="462.4" y="449.9" width="1.70" height="8.5" fill="#2020d8"/><rect x="462.8" y="450.7" width="0.7" height="6.9" fill="#6060ff" fill-opacity="0.5"/><rect x="464.6" y="449.4" width="1.70" height="8.8" fill="#1818b4"/><rect x="465.0" y="450.2" width="0.7" height="7.2" fill="#3434d8" fill-opacity="0.5"/><rect x="466.8" y="449.4" width="1.70" height="8.7" fill="#2020d8"/><rect x="467.2" y="450.2" width="0.7" height="7.1" fill="#6060ff" fill-opacity="0.9"/><rect x="469.0" y="449.6" width="1.70" height="8.3" fill="#2020d8"/><rect x="469.4" y="450.4" width="0.7" height="6.7" fill="#6060ff" fill-opacity="0.5"/><rect x="471.2" y="449.5" width="1.70" height="8.6" fill="#2020d8"/><rect x="471.6" y="450.3" width="0.7" height="7.0" fill="#6060ff" fill-opacity="0.5"/><rect x="473.4" y="450.1" width="1.70" height="8.8" fill="#2020d8"/><rect x="473.8" y="450.9" width="0.7" height="7.2" fill="#6060ff" fill-opacity="0.5"/><rect x="475.6" y="450.7" width="1.70" height="8.6" fill="#2020d8"/><rect x="476.0" y="451.5" width="0.7" height="7.0" fill="#6060ff" fill-opacity="0.7"/><rect x="477.8" y="451.3" width="1.70" height="8.0" fill="#2020d8"/><rect x="478.2" y="452.1" width="0.7" height="6.4" fill="#6060ff" fill-opacity="0.7"/><rect x="480.0" y="450.8" width="1.70" height="8.9" fill="#2020d8"/><rect x="480.4" y="451.6" width="0.7" height="7.3" fill="#6060ff" fill-opacity="0.9"/><rect x="482.2" y="451.2" width="1.70" height="8.2" fill="#2020d8"/><rect x="484.4" y="450.9" width="1.70" height="8.7" fill="#1818b4"/><rect x="484.8" y="451.7" width="0.7" height="7.1" fill="#3434d8" fill-opacity="0.7"/><rect x="486.6" y="450.6" width="1.70" height="9.2" fill="#1818b4"/><rect x="487.0" y="451.4" width="0.7" height="7.6" fill="#3434d8" fill-opacity="0.5"/><rect x="488.8" y="450.5" width="1.70" height="8.8" fill="#2020d8"/><rect x="491.0" y="449.5" width="1.70" height="9.2" fill="#2020d8"/><rect x="491.4" y="450.3" width="0.7" height="7.6" fill="#6060ff" fill-opacity="1.0"/><rect x="493.2" y="450.1" width="1.70" height="8.2" fill="#2020d8"/><rect x="493.6" y="450.9" width="0.7" height="6.6" fill="#6060ff" fill-opacity="1.0"/><rect x="495.4" y="449.8" width="1.70" height="8.2" fill="#2020d8"/><rect x="495.8" y="450.6" width="0.7" height="6.6" fill="#6060ff" fill-opacity="0.9"/><rect x="497.6" y="449.3" width="1.70" height="9.1" fill="#2020d8"/><rect x="499.8" y="450.0" width="1.70" height="8.1" fill="#2020d8"/><rect x="502.0" y="449.6" width="1.70" height="9.3" fill="#1818b4"/><rect x="502.4" y="450.4" width="0.7" height="7.7" fill="#3434d8" fill-opacity="1.0"/><rect x="504.2" y="450.1" width="1.70" height="8.2" fill="#2020d8"/><rect x="504.6" y="450.9" width="0.7" height="6.6" fill="#6060ff" fill-opacity="1.0"/><rect x="506.4" y="450.0" width="1.70" height="9.1" fill="#1818b4"/><rect x="506.8" y="450.8" width="0.7" height="7.5" fill="#3434d8" fill-opacity="1.0"/><rect x="508.6" y="450.7" width="1.70" height="8.5" fill="#1818b4"/><rect x="510.8" y="451.4" width="1.70" height="8.5" fill="#1818b4"/><rect x="511.2" y="452.2" width="0.7" height="6.9" fill="#3434d8" fill-opacity="0.5"/><rect x="513.0" y="451.3" width="1.70" height="9.1" fill="#2020d8"/><rect x="513.4" y="452.1" width="0.7" height="7.5" fill="#6060ff" fill-opacity="0.9"/><rect x="515.2" y="451.0" width="1.70" height="9.0" fill="#2020d8"/><rect x="515.6" y="451.8" width="0.7" height="7.4" fill="#6060ff" fill-opacity="1.0"/><rect x="517.4" y="451.3" width="1.70" height="8.0" fill="#2020d8"/><rect x="517.8" y="452.1" width="0.7" height="6.4" fill="#6060ff" fill-opacity="1.0"/><rect x="519.6" y="449.9" width="0.40" height="9.4" fill="#2020d8"/><rect x="520.0" y="450.9" width="1.70" height="8.2" fill="#1818b4"/><rect x="520.4" y="451.7" width="0.7" height="6.6" fill="#3434d8" fill-opacity="0.5"/><rect x="522.2" y="450.9" width="1.70" height="9.4" fill="#1818b4"/><rect x="522.6" y="451.7" width="0.7" height="7.8" fill="#3434d8" fill-opacity="1.0"/><rect x="524.4" y="451.8" width="1.70" height="8.3" fill="#10106a"/><rect x="524.8" y="452.6" width="0.7" height="6.7" fill="#2020a0" fill-opacity="0.5"/><rect x="526.6" y="450.9" width="1.70" height="9.5" fill="#10106a"/><rect x="527.0" y="451.7" width="0.7" height="7.9" fill="#2020a0" fill-opacity="0.5"/><rect x="528.8" y="450.4" width="1.70" height="9.0" fill="#1818b4"/><rect x="529.2" y="451.2" width="0.7" height="7.4" fill="#3434d8" fill-opacity="1.0"/><rect x="531.0" y="449.8" width="1.70" height="9.1" fill="#1818b4"/><rect x="531.4" y="450.6" width="0.7" height="7.5" fill="#3434d8" fill-opacity="0.7"/><rect x="533.2" y="450.0" width="1.70" height="8.4" fill="#1818b4"/><rect x="535.4" y="450.4" width="1.70" height="8.2" fill="#1818b4"/><rect x="535.8" y="451.2" width="0.7" height="6.6" fill="#3434d8" fill-opacity="0.5"/><rect x="537.6" y="450.1" width="1.70" height="9.4" fill="#1818b4"/><rect x="538.0" y="450.9" width="0.7" height="7.8" fill="#3434d8" fill-opacity="0.9"/><rect x="539.8" y="450.5" width="1.70" height="9.3" fill="#10106a"/><rect x="540.2" y="451.3" width="0.7" height="7.7" fill="#2020a0" fill-opacity="0.7"/><rect x="542.0" y="451.7" width="1.70" height="8.1" fill="#10106a"/><rect x="544.2" y="450.9" width="1.70" height="9.2" fill="#10106a"/><rect x="544.6" y="451.7" width="0.7" height="7.6" fill="#2020a0" fill-opacity="0.5"/><rect x="546.4" y="451.1" width="1.70" height="8.4" fill="#1818b4"/><rect x="546.8" y="451.9" width="0.7" height="6.8" fill="#3434d8" fill-opacity="0.7"/><rect x="548.6" y="450.5" width="1.70" height="8.2" fill="#1818b4"/><rect x="549.0" y="451.3" width="0.7" height="6.6" fill="#3434d8" fill-opacity="0.9"/><rect x="550.8" y="449.6" width="1.70" height="9.3" fill="#10106a"/><rect x="551.2" y="450.4" width="0.7" height="7.7" fill="#2020a0" fill-opacity="0.9"/><rect x="559.0" y="440.5" width="1.70" height="8.4" fill="#1818b4"/><rect x="559.4" y="441.3" width="0.7" height="6.8" fill="#3434d8" fill-opacity="0.5"/><rect x="561.2" y="440.5" width="1.70" height="9.3" fill="#10106a"/><rect x="561.6" y="441.3" width="0.7" height="7.7" fill="#2020a0" fill-opacity="0.5"/><rect x="563.4" y="440.7" width="1.70" height="8.4" fill="#1818b4"/><rect x="565.6" y="440.5" width="1.70" height="9.1" fill="#1818b4"/><rect x="566.0" y="441.3" width="0.7" height="7.5" fill="#3434d8" fill-opacity="0.7"/><rect x="567.8" y="440.4" width="1.70" height="8.7" fill="#10106a"/><rect x="568.2" y="441.2" width="0.7" height="7.1" fill="#2020a0" fill-opacity="0.7"/><rect x="570.0" y="438.9" width="1.70" height="9.5" fill="#10106a"/><rect x="570.4" y="439.7" width="0.7" height="7.9" fill="#2020a0" fill-opacity="1.0"/><rect x="572.2" y="439.5" width="1.70" height="8.7" fill="#1818b4"/><rect x="572.6" y="440.3" width="0.7" height="7.1" fill="#3434d8" fill-opacity="0.5"/><rect x="574.4" y="439.8" width="1.70" height="8.3" fill="#1818b4"/><rect x="574.8" y="440.6" width="0.7" height="6.7" fill="#3434d8" fill-opacity="0.9"/><rect x="576.6" y="440.0" width="1.70" height="8.8" fill="#10106a"/><rect x="577.0" y="440.8" width="0.7" height="7.2" fill="#2020a0" fill-opacity="0.9"/><rect x="578.8" y="440.1" width="1.20" height="9.4" fill="#1818b4"/><rect x="579.2" y="440.9" width="0.7" height="7.8" fill="#3434d8" fill-opacity="1.0"/><rect x="587.0" y="440.3" width="1.70" height="8.2" fill="#1818b4"/><rect x="589.2" y="441.2" width="1.70" height="8.2" fill="#1818b4"/><rect x="589.6" y="442.0" width="0.7" height="6.6" fill="#3434d8" fill-opacity="0.7"/><rect x="591.4" y="441.0" width="1.70" height="8.0" fill="#1818b4"/><rect x="591.8" y="441.8" width="0.7" height="6.4" fill="#3434d8" fill-opacity="1.0"/><rect x="593.6" y="440.3" width="1.70" height="9.2" fill="#1818b4"/><rect x="595.8" y="440.6" width="1.70" height="8.3" fill="#1818b4"/><rect x="598.0" y="439.5" width="1.70" height="8.3" fill="#10106a"/><rect x="598.4" y="440.3" width="0.7" height="6.7" fill="#2020a0" fill-opacity="0.9"/><rect x="600.2" y="439.4" width="1.70" height="8.3" fill="#1818b4"/><rect x="600.6" y="440.2" width="0.7" height="6.7" fill="#3434d8" fill-opacity="1.0"/><rect x="602.4" y="439.3" width="1.70" height="8.4" fill="#10106a"/><rect x="602.8" y="440.1" width="0.7" height="6.8" fill="#2020a0" fill-opacity="0.9"/><rect x="604.6" y="439.9" width="1.70" height="8.1" fill="#1818b4"/><rect x="605.0" y="440.7" width="0.7" height="6.5" fill="#3434d8" fill-opacity="0.7"/><rect x="606.8" y="440.2" width="1.70" height="8.6" fill="#1818b4"/><rect x="609.0" y="440.7" width="1.70" height="8.3" fill="#1818b4"/><rect x="609.4" y="441.5" width="0.7" height="6.7" fill="#3434d8" fill-opacity="0.9"/><rect x="611.2" y="440.2" width="1.70" height="9.3" fill="#1818b4"/><rect x="611.6" y="441.0" width="0.7" height="7.7" fill="#3434d8" fill-opacity="0.7"/><rect x="613.4" y="440.9" width="1.70" height="8.0" fill="#1818b4"/><rect x="613.8" y="441.7" width="0.7" height="6.4" fill="#3434d8" fill-opacity="0.5"/><rect x="615.6" y="439.7" width="1.70" height="8.2" fill="#1818b4"/><rect x="616.0" y="440.5" width="0.7" height="6.6" fill="#3434d8" fill-opacity="1.0"/><rect x="617.8" y="439.5" width="1.70" height="8.9" fill="#1818b4"/><rect x="618.2" y="440.3" width="0.7" height="7.3" fill="#3434d8" fill-opacity="0.9"/><rect x="620.0" y="438.8" width="1.70" height="9.4" fill="#1818b4"/><rect x="620.4" y="439.6" width="0.7" height="7.8" fill="#3434d8" fill-opacity="0.9"/><rect x="622.2" y="439.3" width="1.70" height="9.2" fill="#10106a"/><rect x="622.6" y="440.1" width="0.7" height="7.6" fill="#2020a0" fill-opacity="0.7"/><rect x="624.4" y="440.5" width="1.60" height="8.6" fill="#1818b4"/><rect x="624.8" y="441.3" width="0.7" height="7.0" fill="#3434d8" fill-opacity="1.0"/><rect x="629.0" y="439.5" width="1.70" height="9.4" fill="#10106a"/><rect x="629.4" y="440.3" width="0.7" height="7.8" fill="#2020a0" fill-opacity="0.7"/><rect x="631.2" y="440.8" width="1.70" height="8.6" fill="#10106a"/><rect x="631.6" y="441.6" width="0.7" height="7.0" fill="#2020a0" fill-opacity="1.0"/><rect x="633.4" y="441.3" width="1.70" height="8.7" fill="#1818b4"/><rect x="633.8" y="442.1" width="0.7" height="7.1" fill="#3434d8" fill-opacity="1.0"/><rect x="635.6" y="440.8" width="1.70" height="8.1" fill="#10106a"/><rect x="636.0" y="441.6" width="0.7" height="6.5" fill="#2020a0" fill-opacity="1.0"/><rect x="637.8" y="440.6" width="1.70" height="8.1" fill="#10106a"/><rect x="638.2" y="441.4" width="0.7" height="6.5" fill="#2020a0" fill-opacity="0.5"/><rect x="640.0" y="439.4" width="1.70" height="8.5" fill="#10106a"/><rect x="642.2" y="439.1" width="1.70" height="8.1" fill="#10106a"/><rect x="642.6" y="439.9" width="0.7" height="6.5" fill="#2020a0" fill-opacity="0.9"/><rect x="644.4" y="439.4" width="1.70" height="8.1" fill="#1818b4"/><rect x="644.8" y="440.2" width="0.7" height="6.5" fill="#3434d8" fill-opacity="0.9"/><rect x="646.6" y="440.1" width="1.70" height="8.6" fill="#10106a"/><rect x="647.0" y="440.9" width="0.7" height="7.0" fill="#2020a0" fill-opacity="1.0"/><rect x="648.8" y="440.6" width="1.70" height="9.0" fill="#1818b4"/><rect x="649.2" y="441.4" width="0.7" height="7.4" fill="#3434d8" fill-opacity="0.5"/><rect x="651.0" y="441.5" width="1.70" height="8.5" fill="#1818b4"/><rect x="651.4" y="442.3" width="0.7" height="6.9" fill="#3434d8" fill-opacity="0.7"/><rect x="653.2" y="441.0" width="1.70" height="8.6" fill="#10106a"/><rect x="653.6" y="441.8" width="0.7" height="7.0" fill="#2020a0" fill-opacity="1.0"/><rect x="657.6" y="439.7" width="1.70" height="8.6" fill="#10106a"/><rect x="658.0" y="440.5" width="0.7" height="7.0" fill="#2020a0" fill-opacity="0.7"/><rect x="659.8" y="438.8" width="1.70" height="9.2" fill="#1818b4"/><rect x="660.2" y="439.6" width="0.7" height="7.6" fill="#3434d8" fill-opacity="0.5"/><rect x="662.0" y="439.0" width="1.70" height="9.0" fill="#10106a"/><rect x="662.4" y="439.8" width="0.7" height="7.4" fill="#2020a0" fill-opacity="0.9"/><rect x="664.2" y="439.3" width="1.70" height="9.1" fill="#1818b4"/><rect x="666.4" y="440.1" width="1.70" height="8.9" fill="#10106a"/><rect x="666.8" y="440.9" width="0.7" height="7.3" fill="#2020a0" fill-opacity="0.7"/><rect x="668.6" y="440.7" width="1.70" height="9.2" fill="#1818b4"/><rect x="669.0" y="441.5" width="0.7" height="7.6" fill="#3434d8" fill-opacity="0.5"/><rect x="670.8" y="440.5" width="1.70" height="9.1" fill="#10106a"/><rect x="673.0" y="440.5" width="1.70" height="9.1" fill="#10106a"/><rect x="673.4" y="441.3" width="0.7" height="7.5" fill="#2020a0" fill-opacity="0.5"/><rect x="675.2" y="439.1" width="1.70" height="9.3" fill="#10106a"/><rect x="675.6" y="439.9" width="0.7" height="7.7" fill="#2020a0" fill-opacity="0.7"/><rect x="677.4" y="439.2" width="1.70" height="9.2" fill="#10106a"/><rect x="679.6" y="438.9" width="1.70" height="9.4" fill="#1818b4"/><rect x="680.0" y="439.7" width="0.7" height="7.8" fill="#3434d8" fill-opacity="0.9"/><rect x="681.8" y="440.1" width="1.70" height="8.2" fill="#10106a"/><rect x="682.2" y="440.9" width="0.7" height="6.6" fill="#2020a0" fill-opacity="0.9"/><rect x="684.0" y="440.5" width="1.70" height="8.0" fill="#1818b4"/><rect x="684.4" y="441.3" width="0.7" height="6.4" fill="#3434d8" fill-opacity="0.9"/><rect x="688.4" y="441.1" width="1.70" height="8.7" fill="#10106a"/><rect x="688.8" y="441.9" width="0.7" height="7.1" fill="#2020a0" fill-opacity="0.5"/><rect x="690.6" y="440.6" width="1.70" height="8.6" fill="#1818b4"/><rect x="691.0" y="441.4" width="0.7" height="7.0" fill="#3434d8" fill-opacity="0.5"/><rect x="692.8" y="439.7" width="1.70" height="8.5" fill="#10106a"/><rect x="693.2" y="440.5" width="0.7" height="6.9" fill="#2020a0" fill-opacity="0.5"/><rect x="695.0" y="439.4" width="1.70" height="8.1" fill="#1818b4"/><rect x="695.4" y="440.2" width="0.7" height="6.5" fill="#3434d8" fill-opacity="0.9"/><rect x="697.2" y="438.8" width="1.70" height="9.1" fill="#1818b4"/><rect x="697.6" y="439.6" width="0.7" height="7.5" fill="#3434d8" fill-opacity="0.7"/><rect x="699.4" y="439.3" width="1.70" height="8.5" fill="#10106a"/><rect x="699.8" y="440.1" width="0.7" height="6.9" fill="#2020a0" fill-opacity="0.7"/><rect x="701.6" y="440.4" width="1.70" height="8.2" fill="#10106a"/><rect x="702.0" y="441.2" width="0.7" height="6.6" fill="#2020a0" fill-opacity="0.9"/><rect x="703.8" y="440.7" width="1.70" height="8.7" fill="#10106a"/><rect x="704.2" y="441.5" width="0.7" height="7.1" fill="#2020a0" fill-opacity="0.7"/><rect x="706.0" y="441.0" width="1.70" height="8.6" fill="#1818b4"/><rect x="706.4" y="441.8" width="0.7" height="7.0" fill="#3434d8" fill-opacity="0.9"/><rect x="708.2" y="440.2" width="1.70" height="9.0" fill="#10106a"/><rect x="708.6" y="441.0" width="0.7" height="7.4" fill="#2020a0" fill-opacity="1.0"/><rect x="710.4" y="440.1" width="1.70" height="8.3" fill="#1818b4"/><rect x="710.8" y="440.9" width="0.7" height="6.7" fill="#3434d8" fill-opacity="0.7"/><rect x="712.6" y="439.1" width="1.70" height="8.8" fill="#10106a"/><rect x="714.8" y="439.2" width="1.70" height="8.3" fill="#1818b4"/><rect x="715.2" y="440.0" width="0.7" height="6.7" fill="#3434d8" fill-opacity="0.7"/><rect x="717.0" y="439.5" width="1.70" height="8.1" fill="#10106a"/><rect x="717.4" y="440.3" width="0.7" height="6.5" fill="#2020a0" fill-opacity="0.9"/><rect x="721.4" y="440.8" width="1.70" height="8.3" fill="#1818b4"/><rect x="723.6" y="441.0" width="1.70" height="8.9" fill="#10106a"/><rect x="724.0" y="441.8" width="0.7" height="7.3" fill="#2020a0" fill-opacity="1.0"/><rect x="725.8" y="441.3" width="1.70" height="8.1" fill="#1818b4"/><rect x="726.2" y="442.1" width="0.7" height="6.5" fill="#3434d8" fill-opacity="0.9"/><rect x="728.0" y="440.1" width="1.70" height="8.5" fill="#10106a"/><rect x="730.2" y="438.9" width="1.70" height="9.3" fill="#1818b4"/><rect x="730.6" y="439.7" width="0.7" height="7.7" fill="#3434d8" fill-opacity="0.9"/><rect x="732.4" y="439.0" width="1.70" height="9.2" fill="#10106a"/><rect x="732.8" y="439.8" width="0.7" height="7.6" fill="#2020a0" fill-opacity="0.5"/><rect x="734.6" y="439.4" width="1.70" height="8.7" fill="#10106a"/><rect x="735.0" y="440.2" width="0.7" height="7.1" fill="#2020a0" fill-opacity="0.9"/><rect x="736.8" y="440.1" width="1.70" height="8.6" fill="#1818b4"/><rect x="737.2" y="440.9" width="0.7" height="7.0" fill="#3434d8" fill-opacity="1.0"/><rect x="739.0" y="440.5" width="1.70" height="9.4" fill="#1818b4"/><rect x="741.2" y="441.5" width="1.70" height="8.1" fill="#1818b4"/><rect x="743.4" y="440.8" width="1.70" height="8.7" fill="#10106a"/><rect x="745.6" y="440.6" width="1.70" height="8.2" fill="#10106a"/><rect x="746.0" y="441.4" width="0.7" height="6.6" fill="#2020a0" fill-opacity="1.0"/><rect x="747.8" y="439.0" width="1.70" height="9.3" fill="#1818b4"/><rect x="748.2" y="439.8" width="0.7" height="7.7" fill="#3434d8" fill-opacity="0.7"/><rect x="750.0" y="438.7" width="1.70" height="9.1" fill="#1818b4"/><rect x="750.4" y="439.5" width="0.7" height="7.5" fill="#3434d8" fill-opacity="0.7"/><rect x="752.2" y="439.4" width="1.70" height="9.0" fill="#10106a"/><rect x="752.6" y="440.2" width="0.7" height="7.4" fill="#2020a0" fill-opacity="1.0"/><rect x="754.4" y="440.2" width="1.70" height="8.5" fill="#10106a"/><rect x="754.8" y="441.0" width="0.7" height="6.9" fill="#2020a0" fill-opacity="0.9"/><rect x="756.6" y="440.7" width="1.70" height="8.5" fill="#10106a"/><rect x="757.0" y="441.5" width="0.7" height="6.9" fill="#2020a0" fill-opacity="0.9"/><rect x="758.8" y="441.3" width="1.70" height="8.6" fill="#1818b4"/><rect x="759.2" y="442.1" width="0.7" height="7.0" fill="#3434d8" fill-opacity="1.0"/><rect x="761.0" y="440.8" width="1.70" height="8.6" fill="#1818b4"/><rect x="761.4" y="441.6" width="0.7" height="7.0" fill="#3434d8" fill-opacity="0.5"/><rect x="763.2" y="440.2" width="1.70" height="8.3" fill="#1818b4"/><rect x="763.6" y="441.0" width="0.7" height="6.7" fill="#3434d8" fill-opacity="0.9"/><rect x="765.4" y="439.4" width="1.70" height="9.3" fill="#1818b4"/><rect x="765.8" y="440.2" width="0.7" height="7.7" fill="#3434d8" fill-opacity="0.9"/><rect x="767.6" y="439.0" width="1.70" height="8.4" fill="#1818b4"/><rect x="768.0" y="439.8" width="0.7" height="6.8" fill="#3434d8" fill-opacity="0.9"/><rect x="769.8" y="439.3" width="1.70" height="8.9" fill="#1818b4"/><rect x="770.2" y="440.1" width="0.7" height="7.3" fill="#3434d8" fill-opacity="0.5"/><rect x="772.0" y="439.2" width="1.70" height="9.3" fill="#10106a"/><rect x="772.4" y="440.0" width="0.7" height="7.7" fill="#2020a0" fill-opacity="0.9"/><rect x="774.2" y="440.1" width="1.70" height="8.9" fill="#1818b4"/><rect x="774.6" y="440.9" width="0.7" height="7.3" fill="#3434d8" fill-opacity="0.9"/><rect x="776.4" y="440.5" width="1.70" height="9.2" fill="#1818b4"/><rect x="776.8" y="441.3" width="0.7" height="7.6" fill="#3434d8" fill-opacity="1.0"/><rect x="778.6" y="440.4" width="1.70" height="9.2" fill="#10106a"/><rect x="779.0" y="441.2" width="0.7" height="7.6" fill="#2020a0" fill-opacity="0.9"/><rect x="780.8" y="440.8" width="1.70" height="8.5" fill="#10106a"/><rect x="781.2" y="441.6" width="0.7" height="6.9" fill="#2020a0" fill-opacity="0.7"/><rect x="783.0" y="439.2" width="1.70" height="9.1" fill="#1818b4"/><rect x="783.4" y="440.0" width="0.7" height="7.5" fill="#3434d8" fill-opacity="0.7"/><rect x="785.2" y="439.6" width="1.70" height="8.1" fill="#10106a"/><rect x="785.6" y="440.4" width="0.7" height="6.5" fill="#2020a0" fill-opacity="0.5"/><rect x="787.4" y="439.5" width="1.70" height="8.0" fill="#1818b4"/><rect x="787.8" y="440.3" width="0.7" height="6.4" fill="#3434d8" fill-opacity="0.7"/><rect x="789.6" y="439.8" width="1.70" height="8.8" fill="#10106a"/><rect x="790.0" y="440.6" width="0.7" height="7.2" fill="#2020a0" fill-opacity="0.9"/><rect x="791.8" y="440.0" width="1.70" height="9.2" fill="#1818b4"/><rect x="794.0" y="440.4" width="1.70" height="9.4" fill="#10106a"/><rect x="794.4" y="441.2" width="0.7" height="7.8" fill="#2020a0" fill-opacity="0.9"/><rect x="796.2" y="441.0" width="1.70" height="8.3" fill="#10106a"/><rect x="798.4" y="440.9" width="1.70" height="8.0" fill="#1818b4"/><rect x="798.8" y="441.7" width="0.7" height="6.4" fill="#3434d8" fill-opacity="0.7"/><rect x="800.6" y="439.5" width="1.70" height="9.4" fill="#10106a"/><rect x="802.8" y="439.4" width="1.70" height="8.3" fill="#1818b4"/><rect x="805.0" y="439.3" width="1.70" height="8.4" fill="#1818b4"/><rect x="805.4" y="440.1" width="0.7" height="6.8" fill="#3434d8" fill-opacity="1.0"/><rect x="807.2" y="439.3" width="1.70" height="8.4" fill="#10106a"/><rect x="807.6" y="440.1" width="0.7" height="6.8" fill="#2020a0" fill-opacity="0.9"/><rect x="809.4" y="440.6" width="1.70" height="8.5" fill="#1818b4"/><rect x="809.8" y="441.4" width="0.7" height="6.9" fill="#3434d8" fill-opacity="0.9"/><rect x="811.6" y="441.2" width="1.70" height="8.2" fill="#1818b4"/><rect x="812.0" y="442.0" width="0.7" height="6.6" fill="#3434d8" fill-opacity="0.7"/><rect x="813.8" y="441.4" width="1.70" height="8.7" fill="#10106a"/><rect x="814.2" y="442.2" width="0.7" height="7.1" fill="#2020a0" fill-opacity="0.5"/><rect x="816.0" y="440.6" width="1.70" height="8.8" fill="#10106a"/><rect x="816.4" y="441.4" width="0.7" height="7.2" fill="#2020a0" fill-opacity="0.9"/><rect x="818.2" y="440.1" width="1.70" height="8.1" fill="#10106a"/><rect x="818.6" y="440.9" width="0.7" height="6.5" fill="#2020a0" fill-opacity="0.9"/><rect x="820.4" y="439.0" width="1.70" height="9.0" fill="#1818b4"/><rect x="820.8" y="439.8" width="0.7" height="7.4" fill="#3434d8" fill-opacity="1.0"/><rect x="824.8" y="438.8" width="1.70" height="9.2" fill="#10106a"/><rect x="825.2" y="439.6" width="0.7" height="7.6" fill="#2020a0" fill-opacity="0.5"/><rect x="827.0" y="439.7" width="1.70" height="9.1" fill="#1818b4"/><rect x="827.4" y="440.5" width="0.7" height="7.5" fill="#3434d8" fill-opacity="0.9"/><rect x="829.2" y="441.0" width="1.70" height="8.1" fill="#10106a"/><rect x="829.6" y="441.8" width="0.7" height="6.5" fill="#2020a0" fill-opacity="0.7"/><rect x="831.4" y="441.5" width="1.70" height="8.2" fill="#1818b4"/><rect x="833.6" y="440.9" width="1.70" height="8.1" fill="#10106a"/><rect x="834.0" y="441.7" width="0.7" height="6.5" fill="#2020a0" fill-opacity="1.0"/><rect x="835.8" y="439.4" width="1.70" height="9.4" fill="#10106a"/><rect x="836.2" y="440.2" width="0.7" height="7.8" fill="#2020a0" fill-opacity="0.9"/><rect x="838.0" y="439.3" width="1.70" height="8.3" fill="#1818b4"/><rect x="838.4" y="440.1" width="0.7" height="6.7" fill="#3434d8" fill-opacity="0.7"/><rect x="840.2" y="439.4" width="1.70" height="8.0" fill="#1818b4"/><rect x="840.6" y="440.2" width="0.7" height="6.4" fill="#3434d8" fill-opacity="0.7"/><rect x="844.6" y="440.3" width="1.70" height="8.6" fill="#10106a"/><rect x="845.0" y="441.1" width="0.7" height="7.0" fill="#2020a0" fill-opacity="1.0"/><rect x="846.8" y="440.7" width="1.70" height="9.0" fill="#1818b4"/><rect x="847.2" y="441.5" width="0.7" height="7.4" fill="#3434d8" fill-opacity="0.5"/><rect x="849.0" y="441.1" width="1.70" height="9.2" fill="#1818b4"/><rect x="849.4" y="441.9" width="0.7" height="7.6" fill="#3434d8" fill-opacity="1.0"/><rect x="851.2" y="441.1" width="1.70" height="8.4" fill="#1818b4"/><rect x="851.6" y="441.9" width="0.7" height="6.8" fill="#3434d8" fill-opacity="1.0"/><rect x="855.6" y="440.2" width="1.70" height="8.0" fill="#1818b4"/><rect x="856.0" y="441.0" width="0.7" height="6.4" fill="#3434d8" fill-opacity="0.9"/><rect x="857.8" y="438.9" width="1.70" height="8.5" fill="#1818b4"/><rect x="858.2" y="439.7" width="0.7" height="6.9" fill="#3434d8" fill-opacity="0.9"/><rect x="860.0" y="439.0" width="1.70" height="8.4" fill="#10106a"/><rect x="860.4" y="439.8" width="0.7" height="6.8" fill="#2020a0" fill-opacity="0.7"/><rect x="862.2" y="439.8" width="1.70" height="8.1" fill="#10106a"/><rect x="862.6" y="440.6" width="0.7" height="6.5" fill="#2020a0" fill-opacity="1.0"/><rect x="864.4" y="440.3" width="1.70" height="9.2" fill="#10106a"/><rect x="864.8" y="441.1" width="0.7" height="7.6" fill="#2020a0" fill-opacity="1.0"/><rect x="866.6" y="440.9" width="1.70" height="9.4" fill="#10106a"/><rect x="867.0" y="441.7" width="0.7" height="7.8" fill="#2020a0" fill-opacity="0.5"/><rect x="868.8" y="441.5" width="1.70" height="8.2" fill="#1818b4"/><rect x="869.2" y="442.3" width="0.7" height="6.6" fill="#3434d8" fill-opacity="0.5"/><rect x="871.0" y="440.5" width="1.70" height="8.3" fill="#10106a"/><rect x="873.2" y="439.9" width="0.80" height="8.6" fill="#1818b4"/><rect x="541" y="270" width="8" height="8" fill="#1e1830"/><rect x="739" y="450" width="2" height="9" fill="#26263c"/><rect x="741" y="453" width="2" height="7" fill="#22223a"/><path d="M785 493.8 L874 450 L874 667.2 L785 667.2 Z" fill="#000000" fill-opacity="0.85"/></svg>
<div style="position:absolute;left:211px;top:653px;width:9px;height:13px;background:#000;"></div>
<div style="position:absolute;left:560.5px;top:653px;width:16px;height:13px;background:#000;"></div>
<div style="position:absolute;left:211.5px;top:653.07px;font:italic 400 14px 'Liberation Serif', serif;line-height:1;color:#8a8aa4;white-space:pre;">9</div>
<div style="position:absolute;left:560.5px;top:652.97px;font:italic 400 14.6px 'Liberation Serif', serif;line-height:1;color:#8a8aa4;white-space:pre;">10</div>
<div style="position:absolute;left:855.6px;top:653.71px;font:italic 400 13px 'Liberation Serif', serif;line-height:1;color:#40405a;white-space:pre;">11</div>
<div style="position:absolute;left:808.5px;top:504.19px;font:normal 400 11px 'Liberation Sans', sans-serif;line-height:1;color:#464646;white-space:pre;transform:scaleX(0.965);transform-origin:0 0;text-shadow:0.35px 0 0 #464646;">Unset</div>
<div style="position:absolute;left:808.5px;top:516.08px;font:normal 400 11px 'Liberation Sans', sans-serif;line-height:1;color:#f4dcd4;white-space:pre;transform:scaleX(0.965);transform-origin:0 0;text-shadow:0.35px 0 0 #f4dcd4;">Flute</div>
<div style="position:absolute;left:808.5px;top:527.97px;font:normal 400 11px 'Liberation Sans', sans-serif;line-height:1;color:#e04848;white-space:pre;transform:scaleX(0.965);transform-origin:0 0;text-shadow:0.35px 0 0 #e04848;">Clarinet</div>
<div style="position:absolute;left:808.5px;top:539.86px;font:normal 400 11px 'Liberation Sans', sans-serif;line-height:1;color:#222222;white-space:pre;transform:scaleX(0.965);transform-origin:0 0;text-shadow:0.35px 0 0 #222222;">Sax</div>
<div style="position:absolute;left:808.5px;top:551.75px;font:normal 400 11px 'Liberation Sans', sans-serif;line-height:1;color:#e88a38;white-space:pre;transform:scaleX(0.965);transform-origin:0 0;text-shadow:0.35px 0 0 #e88a38;">Trumpet</div>
<div style="position:absolute;left:808.5px;top:563.64px;font:normal 400 11px 'Liberation Sans', sans-serif;line-height:1;color:#222222;white-space:pre;transform:scaleX(0.965);transform-origin:0 0;text-shadow:0.35px 0 0 #222222;">Piano</div>
<div style="position:absolute;left:808.5px;top:575.53px;font:normal 400 11px 'Liberation Sans', sans-serif;line-height:1;color:#98ec98;white-space:pre;transform:scaleX(0.965);transform-origin:0 0;text-shadow:0.35px 0 0 #98ec98;">Violin</div>
<div style="position:absolute;left:808.5px;top:587.42px;font:normal 400 11px 'Liberation Sans', sans-serif;line-height:1;color:#30982e;white-space:pre;transform:scaleX(0.965);transform-origin:0 0;text-shadow:0.35px 0 0 #30982e;">Cello</div>
<div style="position:absolute;left:808.5px;top:599.31px;font:normal 400 11px 'Liberation Sans', sans-serif;line-height:1;color:#2222d8;white-space:pre;transform:scaleX(0.965);transform-origin:0 0;text-shadow:0.35px 0 0 #2222d8;">Dbl Bass</div>
<div style="position:absolute;left:808.5px;top:611.20px;font:normal 400 11px 'Liberation Sans', sans-serif;line-height:1;color:#242424;white-space:pre;transform:scaleX(0.965);transform-origin:0 0;text-shadow:0.35px 0 0 #242424;">Guitar</div>
<div style="position:absolute;left:808.5px;top:623.09px;font:normal 400 11px 'Liberation Sans', sans-serif;line-height:1;color:#262626;white-space:pre;transform:scaleX(0.965);transform-origin:0 0;text-shadow:0.35px 0 0 #262626;">Dist. Guitar</div>
<div style="position:absolute;left:808.5px;top:634.98px;font:normal 400 11px 'Liberation Sans', sans-serif;line-height:1;color:#242424;white-space:pre;transform:scaleX(0.965);transform-origin:0 0;text-shadow:0.35px 0 0 #242424;">Bass</div>
<div style="position:absolute;left:808.5px;top:646.87px;font:normal 400 11px 'Liberation Sans', sans-serif;line-height:1;color:#f0e8a0;white-space:pre;transform:scaleX(0.965);transform-origin:0 0;text-shadow:0.35px 0 0 #f0e8a0;">Voice</div>
<svg style="position:absolute;left:812px;top:89px" width="63" height="21" viewBox="0 0 63 21"><path d="M0.9 0.5 L62 0.5 L62 20.7 L11 20.7 Z" fill="#bcbcc0"/></svg>
<div style="position:absolute;left:826px;top:93.63px;font:normal 400 13.2px 'Liberation Sans', sans-serif;line-height:1;color:#22222e;white-space:pre;transform:scaleX(0.94);transform-origin:0 0;text-shadow:0.3px 0 0 #22222e;">Track 1</div>
<svg style="position:absolute;left:0;top:0" width="900" height="713"><path d="M853.8 109.7 L874 109.7 L874 245 L853.8 238.5 Z" fill="#000"/></svg>
<div style="position:absolute;left:859.5px;top:115.5px;width:10.5px;height:3px;background:#8c8c8c;"></div>
<div style="position:absolute;left:859.5px;top:120.5px;width:10.5px;height:3px;background:#8c8c8c;"></div>
<div style="position:absolute;left:859.5px;top:125.9px;width:10.5px;height:3px;background:#8c8c8c;"></div>
<div style="position:absolute;left:859.5px;top:130.9px;width:10.5px;height:3px;background:#8c8c8c;"></div>
<svg style="position:absolute;left:855px;top:139px" width="20" height="72" viewBox="0 0 20 72"><defs><linearGradient id="wd" x1="0" x2="0" y1="0" y2="1"><stop offset="0" stop-color="#9a9a9a"/><stop offset="1" stop-color="#404040"/></linearGradient></defs><path d="M4.5 0.3 L15 0.3 L9.8 70 Z" fill="url(#wd)"/><rect x="4.3" y="42.3" width="10.6" height="4.3" rx="1" fill="#1a1a1a" stroke="#c8c8c8" stroke-width="0.9"/></svg>
<div style="position:absolute;left:859.8px;top:219px;width:10.2px;height:3.5px;background:#909090;"></div>
<div style="position:absolute;left:874px;top:89.6px;width:15px;height:577.6px;background:linear-gradient(90deg,#e4e4e4,#f4f4f4 30%,#f0f0f0 60%,#dcdcdc);"></div>
<div style="position:absolute;left:874px;top:105px;width:15px;height:544.5px;background:linear-gradient(90deg,#f6f6f6,#ffffff 25%,#e8e8e8 60%,#cfcfcf);border:1px solid #b8b8b8;border-radius:2px;box-sizing:border-box;"></div>
<div style="position:absolute;left:879px;top:374px;width:5px;height:1px;background:#606060;"></div>
<div style="position:absolute;left:879px;top:376.5px;width:5px;height:1px;background:#606060;"></div>
<div style="position:absolute;left:879px;top:379px;width:5px;height:1px;background:#606060;"></div>
<svg style="position:absolute;left:878px;top:95px" width="8" height="5" viewBox="0 0 8 5"><path d="M0.5 4.5 L4 1 L7.5 4.5 Z" fill="#383838"/></svg>
<svg style="position:absolute;left:878px;top:657px" width="8" height="5" viewBox="0 0 8 5"><path d="M0.5 0.5 L4 4 L7.5 0.5 Z" fill="#383838"/></svg>
<div style="position:absolute;left:8px;top:667px;width:885px;height:23.5px;background:#000000;"></div>
<div style="position:absolute;left:12.3px;top:676.03px;font:normal 700 12.6px 'Liberation Sans', sans-serif;line-height:1;color:#ffffff;white-space:pre;">PERFORMANCE</div>
<div style="position:absolute;left:135px;top:668.87px;font:normal 700 20px 'Liberation Sans', sans-serif;line-height:1;color:#22ee22;white-space:pre;transform:scaleX(0.96);transform-origin:0 0;">0:25.52</div>
<div style="position:absolute;left:299.3px;top:669.35px;font:normal 700 19.2px 'Liberation Sans', sans-serif;line-height:1;color:#22dd22;white-space:pre;">E5</div>
<div style="position:absolute;left:340.2px;top:675.52px;font:normal 700 12.5px 'Liberation Sans', sans-serif;line-height:1;color:#ffffff;white-space:pre;">648 Hz</div>
<div style="position:absolute;left:389.1px;top:672px;width:7.1px;height:14px;background:#9c0808;"></div>
<div style="position:absolute;left:399.3px;top:672px;width:7.1px;height:14px;background:#9c0808;"></div>
<div style="position:absolute;left:409.6px;top:672px;width:7.1px;height:14px;background:#9c0808;"></div>
<div style="position:absolute;left:419.7px;top:672px;width:7.1px;height:14px;background:#9c0808;"></div>
<div style="position:absolute;left:430.0px;top:672px;width:7.1px;height:14px;background:#9c0808;"></div>
<div style="position:absolute;left:443.3px;top:672px;width:7.1px;height:14px;background:#9c0808;"></div>
<div style="position:absolute;left:453.6px;top:672px;width:7.1px;height:14px;background:#9c0808;"></div>
<div style="position:absolute;left:464.0px;top:672px;width:7.1px;height:14px;background:#9c0808;"></div>
<div style="position:absolute;left:474.0px;top:672px;width:7.1px;height:14px;background:#9c0808;"></div>
<div style="position:absolute;left:484.3px;top:672px;width:7.1px;height:14px;background:#9c0808;"></div>
<div style="position:absolute;left:440.2px;top:671px;width:1px;height:16px;background:#6a1818;"></div>
<div style="position:absolute;left:8px;top:690.5px;width:885px;height:15px;background:linear-gradient(#e2e2e2,#f0f0f0 40%,#ececec);"></div>
<div style="position:absolute;left:469px;top:691.5px;width:185px;height:13.5px;background:linear-gradient(#f8f8f8,#ececec 50%,#d8d8d8);border:1px solid #a8a8a8;border-radius:2px;box-sizing:border-box;"></div>
<div style="position:absolute;left:559.5px;top:695.5px;width:1px;height:5px;background:#505050;"></div>
<div style="position:absolute;left:562px;top:695.5px;width:1px;height:5px;background:#505050;"></div>
<div style="position:absolute;left:564.5px;top:695.5px;width:1px;height:5px;background:#505050;"></div>
<svg style="position:absolute;left:11.5px;top:695px" width="5" height="7" viewBox="0 0 5 7"><path d="M4.5 0.5 L1 3.5 L4.5 6.5 Z" fill="#303030"/></svg>
<svg style="position:absolute;left:882.5px;top:695px" width="5" height="7" viewBox="0 0 5 7"><path d="M0.5 0.5 L4 3.5 L0.5 6.5 Z" fill="#303030"/></svg>
</div></body></html>
